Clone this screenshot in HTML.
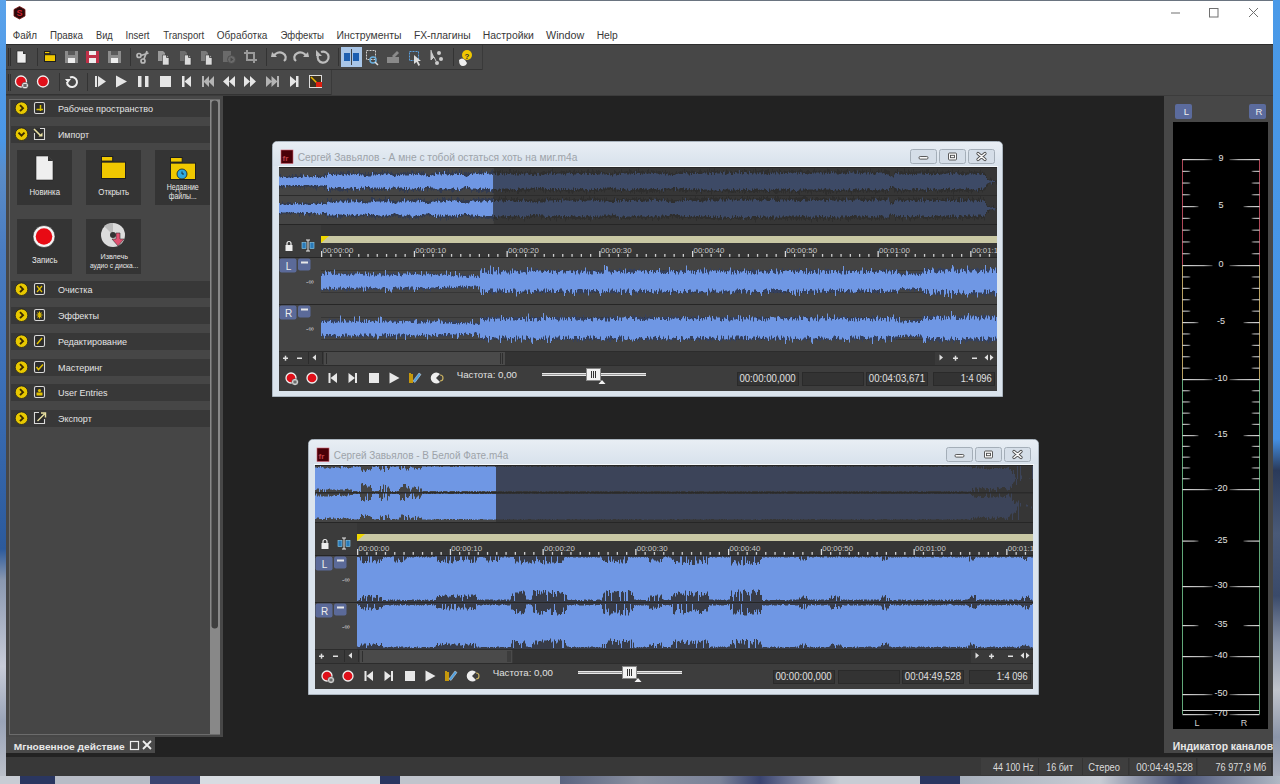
<!DOCTYPE html>
<html><head><meta charset="utf-8"><style>
html,body{margin:0;padding:0;width:1280px;height:784px;overflow:hidden;background:#2f6fb8;}
#bg div{position:absolute;}
svg text{font-family:"Liberation Sans",sans-serif;}
</style></head><body>
<div id="bg">
<div style="left:0px;top:0px;width:1280px;height:784px;background:#2f6fb8;"></div>
<div style="left:0px;top:0px;width:6px;height:784px;background:linear-gradient(#5aa2ea,#4a96e6 18%,#5a8cc8 22%,#4a7cc0 32%,#3c70b8 48%,#2c5a9c 70%,#8a98b0 74%,#c8ccd8 85%,#9aa4b8 92%,#c0c4cc);"></div>
<div style="left:1273px;top:0px;width:7px;height:784px;background:linear-gradient(#4a9ae8,#4490e4 56%,#2a3a5a 60%,#4a5a78 68%,#3a4a6a 76%,#8a94a8 82%,#c0c4cc 88%,#8a94a8 94%,#b0b4c0);"></div>
<div style="left:0px;top:776px;width:1280px;height:8px;background:linear-gradient(90deg,#c8ccd4 0,#c8ccd4 20px,#2a3660 20px,#2a3660 55px,#b8bcc6 55px,#b8bcc6 150px,#3a4470 150px,#3a4470 200px,#d8dce2 200px,#d8dce2 380px,#2a3660 380px,#2a3660 400px,#c0c4cc 400px,#c0c4cc 560px,#5a6480 560px,#8a90a0 640px,#7a8298 720px,#3a4470 760px,#c8ccd4 840px,#c8ccd4 920px,#2a3660 920px,#2a3660 960px,#a8b0bc 960px,#c8ccd4 1100px,#4a5478 1180px,#b0b8c4 1280px);"></div>
</div>
<svg width="1280" height="784" style="position:absolute;left:0;top:0;" font-family="Liberation Sans, sans-serif">
<rect x="6" y="0" width="1267" height="1" fill="#6a7480"/>
<rect x="6" y="1" width="1267" height="43" fill="#ffffff"/>
<rect x="6" y="44" width="1267" height="732" fill="#474747"/>
<path d="M19.5 6.5 L25 9.5 L25 16 L19.5 19 L14 16 L14 9.5 Z" fill="#2a0a0a" stroke="#7a1010" stroke-width="0.8"/>
<text x="19.5" y="16.3" font-size="9" font-weight="bold" fill="#d02030" text-anchor="middle">S</text>
<rect x="1171" y="12.5" width="9" height="1" fill="#707070" />
<rect x="1209.5" y="8.5" width="8.5" height="8.5" fill="none" stroke="#707070" stroke-width="1"/>
<path d="M1249 8 L1258 17 M1258 8 L1249 17" stroke="#707070" stroke-width="1"/>
<rect x="6" y="44" width="477" height="26" fill="#484848"/>
<rect x="6" y="69" width="477" height="1" fill="#333"/>
<rect x="482" y="44" width="1" height="26" fill="#3a3a3a"/>
<rect x="8" y="48" width="1" height="18" fill="#2e2e2e"/>
<rect x="10" y="48" width="1" height="18" fill="#2e2e2e"/>
<rect x="6" y="44" width="1267" height="1" fill="#2e2e2e"/>
<rect x="6" y="70" width="326" height="25" fill="#484848"/>
<rect x="6" y="94" width="326" height="1" fill="#333"/>
<rect x="331" y="70" width="1" height="25" fill="#3a3a3a"/>
<rect x="8" y="74" width="1" height="17" fill="#2e2e2e"/>
<rect x="10" y="74" width="1" height="17" fill="#2e2e2e"/>
<rect x="6" y="95" width="1267" height="1" fill="#3c3c3c"/>
<rect x="37" y="48" width="1" height="18" fill="#333"/>
<rect x="130" y="48" width="1" height="18" fill="#333"/>
<rect x="266" y="48" width="1" height="18" fill="#333"/>
<rect x="338" y="48" width="1" height="18" fill="#333"/>
<rect x="453" y="48" width="1" height="18" fill="#333"/>
<rect x="59" y="73" width="1" height="18" fill="#333"/>
<rect x="87" y="73" width="1" height="18" fill="#333"/>
<path d="M17 51 H23 L26 54 V63 H17 Z" fill="#eee" stroke="#222" stroke-width="0.6"/>
<path d="M23 51 V54 H26" fill="#333"/>
<rect x="44.5" y="51.5" width="5.4" height="2.2" fill="#f0c800" stroke="#1e1e1e" stroke-width="1"/>
<rect x="44.5" y="54.7" width="11" height="6.8" fill="#f0c800" stroke="#1e1e1e" stroke-width="1"/>
<rect x="65" y="51" width="13" height="12" fill="#8c8c8c"/>
<rect x="68" y="51" width="7" height="4" fill="#5a5a5a"/>
<rect x="68" y="58" width="7" height="5" fill="#eee"/>
<rect x="86" y="51" width="13" height="12" fill="#c03048"/>
<rect x="89" y="51" width="7" height="4" fill="#eee"/>
<rect x="89" y="58" width="7" height="5" fill="#eee"/>
<rect x="108" y="51" width="13" height="12" fill="#8c8c8c"/>
<rect x="111" y="51" width="7" height="4" fill="#5a5a5a"/>
<rect x="111" y="58" width="7" height="5" fill="#eee"/>
<g stroke="#b8b8b8" stroke-width="1.7" fill="none"><circle cx="139" cy="55.5" r="2"/><circle cx="143" cy="61" r="2"/><path d="M141 55.5 L148.5 53 M144 59 L147 51"/></g>
<path d="M158 51 h5 l2 2 v8 h-7 z" fill="#9a9a9a"/>
<path d="M162.5 55 h4 l2.5 2.5 v7.5 h-6.5 z" fill="#dcdcdc" stroke="#3a3a3a" stroke-width="0.6"/><path d="M166.5 55 v2.5 h2.5" fill="none" stroke="#333" stroke-width="0.8"/>
<path d="M180 51 h5 l2 2 v8 h-7 z" fill="#6e6e6e"/>
<path d="M184.5 55 h4 l2.5 2.5 v7.5 h-6.5 z" fill="#dcdcdc" stroke="#3a3a3a" stroke-width="0.6"/><path d="M188.5 55 v2.5 h2.5" fill="none" stroke="#333" stroke-width="0.8"/>
<path d="M201 51 h5 l2 2 v8 h-7 z" fill="#7a7a7a"/>
<path d="M205.5 55 h4 l2.5 2.5 v7.5 h-6.5 z" fill="#dcdcdc" stroke="#3a3a3a" stroke-width="0.6"/><path d="M209.5 55 v2.5 h2.5" fill="none" stroke="#333" stroke-width="0.8"/>
<g><rect x="223" y="51" width="8" height="11" fill="#6a6a6a"/><circle cx="231.5" cy="59.5" r="4" fill="#6a6a6a" stroke="#484848" stroke-width="0.8"/><path d="M230.5 57.5 l3 2 l-3 2 z" fill="#484848"/></g>
<path d="M137 49 l0 0" />
<path d="M247 50 V60 H257 M244 53 H254 V63" stroke="#9a9a9a" stroke-width="2" fill="none"/>
<path d="M274 56 a6 5 0 1 1 10 5" stroke="#bdbdbd" stroke-width="2.2" fill="none"/><path d="M272 52 l5 5 h-6 z" fill="#bdbdbd"/>
<path d="M306 56 a6 5 0 1 0 -10 5" stroke="#bdbdbd" stroke-width="2.2" fill="none"/><path d="M308 52 l-5 5 h6 z" fill="#bdbdbd"/>
<path d="M318 55 a5.5 5.5 0 1 0 3 -3" stroke="#bdbdbd" stroke-width="2.2" fill="none"/><path d="M316 50 v6 h6 z" fill="#bdbdbd"/>
<rect x="341" y="47" width="21" height="20" fill="#a9c6e8" />
<g fill="#1d5fb0"><rect x="344" y="53" width="6" height="8"/><rect x="353" y="53" width="6" height="8"/></g><path d="M351.5 49 V65" stroke="#444" stroke-width="1"/>
<g stroke="#cfcfcf" stroke-width="1" fill="none" stroke-dasharray="2 1"><rect x="366.5" y="50.5" width="9" height="9"/></g><circle cx="373" cy="60" r="3" stroke="#6ab0e0" stroke-width="1.5" fill="none"/><path d="M375 62 l3 3" stroke="#ddd" stroke-width="1.5"/>
<g fill="#8a8a8a"><rect x="387" y="57" width="12" height="6"/><path d="M392 56 l5 -5 l2 2 l-5 5 z"/></g>
<rect x="409.5" y="51.5" width="9" height="9" fill="none" stroke="#5aa0e0" stroke-dasharray="2 1"/><path d="M414 55 v9 l2.5 -2 l2 4 l1.5 -1 l-2 -4 h3 z" fill="#ddd"/>
<path d="M431 50 v10 l3 -3 l2 4" fill="#ccc" stroke="#ccc"/><circle cx="439" cy="53" r="2" fill="#ccc"/><circle cx="441" cy="59" r="2" fill="#ccc"/><circle cx="437" cy="63" r="2" fill="#ccc"/>
<circle cx="467" cy="55" r="5" fill="#f0c800"/><text x="467" y="58.5" font-size="8" font-weight="bold" fill="#333" text-anchor="middle">?</text><path d="M459 60 q3 -3 6 0 l2 3 q-1 3 -4 3 q-4 0 -4 -6z" fill="#eee"/>
<circle cx="21" cy="81.5" r="5.5" fill="#e0101a" stroke="#f0f0f0" stroke-width="1.3"/>
<circle cx="25" cy="85.5" r="3.3" fill="#f4f4f4" stroke="#222" stroke-width="0.5"/><path d="M24.1 83.9 v3.2 M25.9 83.9 v3.2" stroke="#111" stroke-width="1"/>
<circle cx="43" cy="81.5" r="5.5" fill="#e0101a" stroke="#f0f0f0" stroke-width="1.3"/>
<path d="M67 82 a5 5 0 1 0 3 -4.5" stroke="#eee" stroke-width="2" fill="none"/><path d="M65 79 l3 4 l3 -4 z" fill="#eee"/>
<g fill="#e6e6e6"><rect x="95" y="76" width="2" height="11"/><path d="M98 76 L106 81.5 L98 87 Z"/><path d="M116 75.5 L127 81.5 L116 87.5 Z"/><rect x="138" y="76" width="3.5" height="11"/><rect x="145" y="76" width="3.5" height="11"/><rect x="160" y="76" width="11" height="11"/><rect x="182" y="76" width="2.5" height="11"/><path d="M191 76 L184.5 81.5 L191 87 Z"/></g>
<g fill="#b4b4b4"><rect x="202" y="76" width="2" height="11"/><path d="M209 76 L203.5 81.5 L209 87 Z M214 76 L208.5 81.5 L214 87 Z"/></g>
<g fill="#e6e6e6"><path d="M229 76 L223 81.5 L229 87 Z M235 76 L229 81.5 L235 87 Z"/><path d="M244 76 L250 81.5 L244 87 Z M250 76 L256 81.5 L250 87 Z"/></g>
<g fill="#b4b4b4"><path d="M266 76 L272 81.5 L266 87 Z M271.5 76 L277.5 81.5 L271.5 87 Z"/><rect x="277" y="76" width="2" height="11"/></g>
<g fill="#e6e6e6"><path d="M290 76 L296.5 81.5 L290 87 Z"/><rect x="296" y="76" width="2.5" height="11"/></g>
<rect x="309.5" y="75.5" width="12" height="12" fill="#3a3020" stroke="#ddd" stroke-width="1"/><path d="M311 77 l6 6" stroke="#e8b400" stroke-width="1.5"/><rect x="316" y="82" width="6" height="5" fill="#e02010"/>
<rect x="223" y="96" width="941" height="661" fill="#222222"/>
<rect x="155" y="737" width="68" height="16" fill="#222222"/>
<rect x="6" y="753" width="1267" height="4" fill="#222222"/>
<rect x="9" y="99" width="213" height="636" fill="#6c6c6c"/>
<rect x="10" y="100" width="200" height="634" fill="#464646"/>
<rect x="210" y="100" width="10" height="634" fill="#888888"/>
<rect x="220" y="99" width="3" height="636" fill="#474747"/>
<rect x="211.5" y="100.5" width="6.5" height="528" rx="3.2" fill="#3e3e3e"/>
<rect x="11" y="100" width="199" height="17" fill="#383838"/>
<circle cx="21.5" cy="108.2" r="6.3" fill="#e8c800" stroke="#1e1e1e" stroke-width="0.8"/>
<path d="M20 105.2 l3 3 l-3 3" stroke="#3a2a00" stroke-width="1.9" fill="none"/>
<rect x="34.5" y="102.5" width="10" height="11" rx="1.5" fill="#2c2c2c" stroke="#d8d8d8" stroke-width="1.1"/>
<path d="M36.5 109.5 h6.5 M40.5 105 v6" stroke="#d8c000" stroke-width="1.5"/>
<rect x="11" y="126" width="199" height="17" fill="#383838"/>
<circle cx="21.5" cy="134.2" r="6.3" fill="#e8c800" stroke="#1e1e1e" stroke-width="0.8"/>
<path d="M18.5 132.7 l3 3 l3 -3" stroke="#3a2a00" stroke-width="1.9" fill="none"/>
<rect x="34.5" y="128.5" width="10" height="11" rx="1" fill="#2c2c2c"/><path d="M34.5 133 V139.5 H44.5 V128.5 H40" fill="none" stroke="#d8d8d8" stroke-width="1.1"/>
<path d="M34 129 l6.5 6.5" stroke="#e8e0a0" stroke-width="1.6"/><path d="M42.5 132.5 v4 h-4 z" fill="#e8e0a0"/>
<rect x="11" y="281" width="199" height="17" fill="#383838"/>
<circle cx="21.5" cy="289.2" r="6.3" fill="#e8c800" stroke="#1e1e1e" stroke-width="0.8"/>
<path d="M20 286.2 l3 3 l-3 3" stroke="#3a2a00" stroke-width="1.9" fill="none"/>
<rect x="34.5" y="283.5" width="10" height="11" rx="1.5" fill="#2c2c2c" stroke="#d8d8d8" stroke-width="1.1"/>
<path d="M37 286 l5 6 M42 286 l-5 6" stroke="#e0c000" stroke-width="1.2"/>
<rect x="11" y="307" width="199" height="17" fill="#383838"/>
<circle cx="21.5" cy="315.2" r="6.3" fill="#e8c800" stroke="#1e1e1e" stroke-width="0.8"/>
<path d="M20 312.2 l3 3 l-3 3" stroke="#3a2a00" stroke-width="1.9" fill="none"/>
<rect x="34.5" y="309.5" width="10" height="11" rx="1.5" fill="#2c2c2c" stroke="#d8d8d8" stroke-width="1.1"/>
<path d="M39.5 311.5 v7 M36.5 315 h6 M37.5 312.5 l4 5 M41.5 312.5 l-4 5" stroke="#e0c000" stroke-width="1.1"/>
<rect x="11" y="333" width="199" height="17" fill="#383838"/>
<circle cx="21.5" cy="341.2" r="6.3" fill="#e8c800" stroke="#1e1e1e" stroke-width="0.8"/>
<path d="M20 338.2 l3 3 l-3 3" stroke="#3a2a00" stroke-width="1.9" fill="none"/>
<rect x="34.5" y="335.5" width="10" height="11" rx="1.5" fill="#2c2c2c" stroke="#d8d8d8" stroke-width="1.1"/>
<path d="M37 344 l5 -6" stroke="#e0c000" stroke-width="1.5"/>
<rect x="11" y="359" width="199" height="17" fill="#383838"/>
<circle cx="21.5" cy="367.2" r="6.3" fill="#e8c800" stroke="#1e1e1e" stroke-width="0.8"/>
<path d="M20 364.2 l3 3 l-3 3" stroke="#3a2a00" stroke-width="1.9" fill="none"/>
<rect x="34.5" y="361.5" width="10" height="11" rx="1.5" fill="#2c2c2c" stroke="#d8d8d8" stroke-width="1.1"/>
<path d="M36.5 367 l2 2.5 l4.5 -5" stroke="#e0c000" stroke-width="1.5" fill="none"/>
<rect x="11" y="384" width="199" height="17" fill="#383838"/>
<circle cx="21.5" cy="392.2" r="6.3" fill="#e8c800" stroke="#1e1e1e" stroke-width="0.8"/>
<path d="M20 389.2 l3 3 l-3 3" stroke="#3a2a00" stroke-width="1.9" fill="none"/>
<rect x="34.5" y="386.5" width="10" height="11" rx="1.5" fill="#2c2c2c" stroke="#d8d8d8" stroke-width="1.1"/>
<circle cx="39.5" cy="390.5" r="1.6" fill="#e0c000"/><rect x="36.5" y="392.5" width="6" height="3" fill="#e0c000"/>
<rect x="11" y="410" width="199" height="17" fill="#383838"/>
<circle cx="21.5" cy="418.2" r="6.3" fill="#e8c800" stroke="#1e1e1e" stroke-width="0.8"/>
<path d="M20 415.2 l3 3 l-3 3" stroke="#3a2a00" stroke-width="1.9" fill="none"/>
<rect x="34.5" y="412.5" width="10" height="11" rx="1" fill="#2c2c2c"/><path d="M39 412.5 H34.5 V423.5 H44.5 V419" fill="none" stroke="#d8d8d8" stroke-width="1.1"/>
<path d="M37.5 421 l7 -7 M41 413 h4.5 v4.5" stroke="#e8e0a0" stroke-width="1.4" fill="none"/>
<rect x="17" y="150" width="55" height="55" fill="#343434"/>
<rect x="86" y="150" width="55" height="55" fill="#343434"/>
<rect x="155" y="150" width="55" height="55" fill="#343434"/>
<rect x="17" y="219" width="55" height="55" fill="#343434"/>
<rect x="86" y="219" width="55" height="55" fill="#343434"/>
<path d="M36 156 H48 L53 161 V180 H36 Z" fill="#efefef" stroke="#222" stroke-width="0.6"/>
<path d="M48 156 V161 H53" fill="#333"/>
<rect x="101.5" y="156.5" width="11.2" height="4.6" fill="#f0c800" stroke="#1e1e1e" stroke-width="1"/>
<rect x="101.5" y="162.1" width="24" height="16.4" fill="#f0c800" stroke="#1e1e1e" stroke-width="1"/>
<rect x="170.5" y="157.5" width="11.7" height="4.6" fill="#f0c800" stroke="#1e1e1e" stroke-width="1"/>
<rect x="170.5" y="163.1" width="25" height="16.4" fill="#f0c800" stroke="#1e1e1e" stroke-width="1"/>
<circle cx="182" cy="174" r="5" fill="#30a8e0" stroke="#1a1a1a" stroke-width="0.8"/><path d="M182 171.5 v2.5 h2" stroke="#111" stroke-width="0.8" fill="none"/>
<circle cx="44" cy="236.5" r="11" fill="#f4f4f4" stroke="#222" stroke-width="0.6"/><circle cx="44" cy="236.5" r="8.3" fill="#e80a14"/>
<circle cx="113" cy="235" r="12" fill="#dcdcdc"/><path d="M113 235 L104 226 A12 12 0 0 1 113 223 Z" fill="#bcbcbc"/><circle cx="113" cy="235" r="3" fill="#333"/>
<path d="M116 233 h4 v6 h4 l-6 7 l-6 -7 h4 z" fill="#e05070" stroke="#333" stroke-width="0.6"/>
<rect x="6" y="737" width="149" height="16" fill="#4a4a4a"/>
<rect x="130.5" y="741.5" width="8" height="8" fill="none" stroke="#eee" stroke-width="1.2"/><path d="M143 741 l8 8 M151 741 l-8 8" stroke="#eee" stroke-width="1.8"/>
<rect x="6" y="757" width="1267" height="19" fill="#383838"/>
<rect x="981" y="758" width="57" height="17" fill="#3e3e3e"/>
<rect x="1038" y="758" width="1" height="17" fill="#333333"/>
<rect x="1039" y="758" width="43" height="17" fill="#3e3e3e"/>
<rect x="1082" y="758" width="1" height="17" fill="#333333"/>
<rect x="1083" y="758" width="45" height="17" fill="#3e3e3e"/>
<rect x="1128" y="758" width="1" height="17" fill="#333333"/>
<rect x="1130" y="758" width="66" height="17" fill="#3e3e3e"/>
<rect x="1196" y="758" width="1" height="17" fill="#333333"/>
<rect x="1198" y="758" width="73" height="17" fill="#3e3e3e"/>
<rect x="1271" y="758" width="1" height="17" fill="#333333"/>
<rect x="1164" y="96" width="109" height="657" fill="#474747"/>
<rect x="1175" y="104" width="17" height="15" rx="2" fill="#5b6b9d"/><rect x="1249" y="104" width="17" height="15" rx="2" fill="#5b6b9d"/>
<rect x="1173" y="122" width="95" height="607" fill="#000"/>
<defs><clipPath id="clipind"><rect x="1164" y="735" width="109" height="20"/></clipPath></defs><g clip-path="url(#clipind)">
<text x="1172.70" y="749.5" font-size="10" fill="#e8e8e8" font-weight="bold" textLength="100.39" lengthAdjust="spacingAndGlyphs">Индикатор каналов</text>
</g>
<defs><linearGradient id="fadeL" x1="0" x2="1"><stop offset="0" stop-color="#d8d8d8"/><stop offset="0.7" stop-color="#b0b0b0"/><stop offset="1" stop-color="#404040"/></linearGradient><linearGradient id="fadeR" x1="1" x2="0"><stop offset="0" stop-color="#d8d8d8"/><stop offset="0.7" stop-color="#b0b0b0"/><stop offset="1" stop-color="#404040"/></linearGradient></defs>
<path d="M1182.5 159 V265 M1259.5 159 V265" stroke="#b04858" stroke-width="1"/>
<path d="M1182.5 265 V379 M1259.5 265 V379" stroke="#b8a060" stroke-width="1"/>
<path d="M1182.5 379 V714 M1259.5 379 V714" stroke="#60a878" stroke-width="1"/>
<rect x="1182.5" y="159" width="30" height="1.2" fill="url(#fadeL)"/><rect x="1229.5" y="159" width="30" height="1.2" fill="url(#fadeR)"/>
<rect x="1182.5" y="206" width="16" height="1.2" fill="url(#fadeL)"/><rect x="1243.5" y="206" width="16" height="1.2" fill="url(#fadeR)"/>
<rect x="1182.5" y="265" width="30" height="1.2" fill="url(#fadeL)"/><rect x="1229.5" y="265" width="30" height="1.2" fill="url(#fadeR)"/>
<rect x="1182.5" y="322" width="16" height="1.2" fill="url(#fadeL)"/><rect x="1243.5" y="322" width="16" height="1.2" fill="url(#fadeR)"/>
<rect x="1182.5" y="379" width="30" height="1.2" fill="url(#fadeL)"/><rect x="1229.5" y="379" width="30" height="1.2" fill="url(#fadeR)"/>
<rect x="1182.5" y="435" width="16" height="1.2" fill="url(#fadeL)"/><rect x="1243.5" y="435" width="16" height="1.2" fill="url(#fadeR)"/>
<rect x="1182.5" y="489" width="30" height="1.2" fill="url(#fadeL)"/><rect x="1229.5" y="489" width="30" height="1.2" fill="url(#fadeR)"/>
<rect x="1182.5" y="540.5" width="16" height="1.2" fill="url(#fadeL)"/><rect x="1243.5" y="540.5" width="16" height="1.2" fill="url(#fadeR)"/>
<rect x="1182.5" y="586" width="30" height="1.2" fill="url(#fadeL)"/><rect x="1229.5" y="586" width="30" height="1.2" fill="url(#fadeR)"/>
<rect x="1182.5" y="625" width="16" height="1.2" fill="url(#fadeL)"/><rect x="1243.5" y="625" width="16" height="1.2" fill="url(#fadeR)"/>
<rect x="1182.5" y="656" width="30" height="1.2" fill="url(#fadeL)"/><rect x="1229.5" y="656" width="30" height="1.2" fill="url(#fadeR)"/>
<rect x="1182.5" y="694" width="30" height="1.2" fill="url(#fadeL)"/><rect x="1229.5" y="694" width="30" height="1.2" fill="url(#fadeR)"/>
<rect x="1182.5" y="714" width="30" height="1.2" fill="url(#fadeL)"/><rect x="1229.5" y="714" width="30" height="1.2" fill="url(#fadeR)"/>
<rect x="1182.5" y="710" width="77.0" height="1" fill="#c8c8c8"/>
<rect x="1182.5" y="170.8" width="8" height="1.1" fill="url(#fadeL)"/><rect x="1251.5" y="170.8" width="8" height="1.1" fill="url(#fadeR)"/>
<rect x="1182.5" y="182.5" width="8" height="1.1" fill="url(#fadeL)"/><rect x="1251.5" y="182.5" width="8" height="1.1" fill="url(#fadeR)"/>
<rect x="1182.5" y="194.2" width="8" height="1.1" fill="url(#fadeL)"/><rect x="1251.5" y="194.2" width="8" height="1.1" fill="url(#fadeR)"/>
<rect x="1182.5" y="217.8" width="8" height="1.1" fill="url(#fadeL)"/><rect x="1251.5" y="217.8" width="8" height="1.1" fill="url(#fadeR)"/>
<rect x="1182.5" y="229.6" width="8" height="1.1" fill="url(#fadeL)"/><rect x="1251.5" y="229.6" width="8" height="1.1" fill="url(#fadeR)"/>
<rect x="1182.5" y="241.4" width="8" height="1.1" fill="url(#fadeL)"/><rect x="1251.5" y="241.4" width="8" height="1.1" fill="url(#fadeR)"/>
<rect x="1182.5" y="253.2" width="8" height="1.1" fill="url(#fadeL)"/><rect x="1251.5" y="253.2" width="8" height="1.1" fill="url(#fadeR)"/>
<rect x="1182.5" y="276.4" width="8" height="1.1" fill="url(#fadeL)"/><rect x="1251.5" y="276.4" width="8" height="1.1" fill="url(#fadeR)"/>
<rect x="1182.5" y="287.8" width="8" height="1.1" fill="url(#fadeL)"/><rect x="1251.5" y="287.8" width="8" height="1.1" fill="url(#fadeR)"/>
<rect x="1182.5" y="299.2" width="8" height="1.1" fill="url(#fadeL)"/><rect x="1251.5" y="299.2" width="8" height="1.1" fill="url(#fadeR)"/>
<rect x="1182.5" y="310.6" width="8" height="1.1" fill="url(#fadeL)"/><rect x="1251.5" y="310.6" width="8" height="1.1" fill="url(#fadeR)"/>
<rect x="1182.5" y="333.4" width="8" height="1.1" fill="url(#fadeL)"/><rect x="1251.5" y="333.4" width="8" height="1.1" fill="url(#fadeR)"/>
<rect x="1182.5" y="344.8" width="8" height="1.1" fill="url(#fadeL)"/><rect x="1251.5" y="344.8" width="8" height="1.1" fill="url(#fadeR)"/>
<rect x="1182.5" y="356.2" width="8" height="1.1" fill="url(#fadeL)"/><rect x="1251.5" y="356.2" width="8" height="1.1" fill="url(#fadeR)"/>
<rect x="1182.5" y="367.6" width="8" height="1.1" fill="url(#fadeL)"/><rect x="1251.5" y="367.6" width="8" height="1.1" fill="url(#fadeR)"/>
<rect x="1182.5" y="390.2" width="8" height="1.1" fill="url(#fadeL)"/><rect x="1251.5" y="390.2" width="8" height="1.1" fill="url(#fadeR)"/>
<rect x="1182.5" y="401.4" width="8" height="1.1" fill="url(#fadeL)"/><rect x="1251.5" y="401.4" width="8" height="1.1" fill="url(#fadeR)"/>
<rect x="1182.5" y="412.6" width="8" height="1.1" fill="url(#fadeL)"/><rect x="1251.5" y="412.6" width="8" height="1.1" fill="url(#fadeR)"/>
<rect x="1182.5" y="423.8" width="8" height="1.1" fill="url(#fadeL)"/><rect x="1251.5" y="423.8" width="8" height="1.1" fill="url(#fadeR)"/>
<rect x="1182.5" y="445.8" width="8" height="1.1" fill="url(#fadeL)"/><rect x="1251.5" y="445.8" width="8" height="1.1" fill="url(#fadeR)"/>
<rect x="1182.5" y="456.6" width="8" height="1.1" fill="url(#fadeL)"/><rect x="1251.5" y="456.6" width="8" height="1.1" fill="url(#fadeR)"/>
<rect x="1182.5" y="467.4" width="8" height="1.1" fill="url(#fadeL)"/><rect x="1251.5" y="467.4" width="8" height="1.1" fill="url(#fadeR)"/>
<rect x="1182.5" y="478.2" width="8" height="1.1" fill="url(#fadeL)"/><rect x="1251.5" y="478.2" width="8" height="1.1" fill="url(#fadeR)"/>
<path d="M272.5 396.5 V146.5 Q272.5 141.5 277.5 141.5 H997.5 Q1002.5 141.5 1002.5 146.5 V396.5 Z" fill="#dbe4ed" stroke="#aab4be" stroke-width="1"/>
<defs><linearGradient id="tg100" x1="0" y1="0" x2="0" y2="1"><stop offset="0" stop-color="#e8eef4"/><stop offset="1" stop-color="#d8e2ec"/></linearGradient></defs>
<path d="M273 166 V146 Q273 142 277 142 H998 Q1002 142 1002 146 V166 Z" fill="url(#tg100)"/>
<rect x="278" y="166" width="720" height="1" fill="#f4f8fb"/>
<rect x="281" y="150" width="12" height="13.5" fill="#4a0008" stroke="#d06070" stroke-width="0.6"/>
<text x="282.5" y="160.5" font-size="8" fill="#c04048" font-weight="bold">fr</text>
<rect x="910.5" y="149.5" width="26" height="14" rx="2" fill="#d5dee8" stroke="#a4aeb8" stroke-width="1"/>
<rect x="919.0" y="156.5" width="9" height="2.6" rx="1.2" fill="#fafafa" stroke="#4a4a4a" stroke-width="0.9"/>
<rect x="939.5" y="149.5" width="26" height="14" rx="2" fill="#d5dee8" stroke="#a4aeb8" stroke-width="1"/>
<rect x="948.5" y="153.0" width="8" height="7" rx="1" fill="#fafafa" stroke="#4a4a4a" stroke-width="0.9"/><rect x="950.5" y="155.3" width="4" height="2.4" fill="#fafafa" stroke="#4a4a4a" stroke-width="0.9"/>
<rect x="968.5" y="149.5" width="26" height="14" rx="2" fill="#d5dee8" stroke="#a4aeb8" stroke-width="1"/>
<path d="M978.0 153.5 l7 6 M985.0 153.5 l-7 6" stroke="#4a4a4a" stroke-width="3.2" stroke-linecap="round"/><path d="M978.0 153.5 l7 6 M985.0 153.5 l-7 6" stroke="#fafafa" stroke-width="1.6" stroke-linecap="round"/>
<rect x="279" y="167" width="718" height="224" fill="#3c3c3c"/>
<rect x="279" y="167" width="718" height="57" fill="#454545"/>
<rect x="279" y="167" width="718" height="1" fill="#262626"/>
<defs><clipPath id="csw100"><rect x="279" y="168" width="214.60000000000002" height="56"/></clipPath><clipPath id="cuw100"><rect x="493.6" y="168" width="503.4" height="56"/></clipPath></defs>
<defs><g id="pkw100"><path d="M279 177V177h1V174h1V176.5h1V176.5h1V176h1V176.5h1V176.5h1V176h1V176.5h1V176h1V175h1V176.5h1V176h1V174h1V176.5h1V176h1V174h1V174.5h1V176h1V176h1V176h1V173.5h1V173.5h1V175.5h1V176.5h1V176.5h1V176h1V176h1V176.5h1V176.5h1V175.5h1V176h1V176.5h1V176.5h1V175.5h1V176h1V174h1V176.5h1V174.5h1V175.5h1V175.5h1V175.5h1V176h1V175.5h1V175.5h1V173.5h1V173.5h1V175.5h1V172.5h1V173h1V173.5h1V174h1V173h1V173.5h1V172h1V173.5h1V174h1V171.5h1V174h1V172.5h1V173.5h1V171.5h1V171.5h1V172.5h1V171.5h1V173.5h1V173.5h1V173h1V171h1V170.5h1V171h1V174h1V173h1V173.5h1V170.5h1V173.5h1V173.5h1V174h1V172.5h1V172.5h1V170.5h1V173h1V173h1V173h1V173.5h1V174h1V172h1V175h1V174h1V172h1V174h1V173.5h1V172.5h1V173h1V170.5h1V172.5h1V172h1V172h1V173.5h1V173h1V173h1V172h1V172.5h1V170h1V173h1V171h1V172.5h1V172h1V170.5h1V172h1V173.5h1V172.5h1V171.5h1V173h1V174h1V174h1V173.5h1V174.5h1V173h1V173h1V174h1V172.5h1V172.5h1V173h1V172h1V172.5h1V172h1V173h1V171.5h1V172.5h1V172.5h1V173h1V170.5h1V170.5h1V171.5h1V173.5h1V173.5h1V171.5h1V172.5h1V172.5h1V171h1V173h1V171.5h1V172.5h1V171h1V173.5h1V174h1V174.5h1V174h1V175h1V175h1V174.5h1V173.5h1V173h1V173.5h1V173.5h1V172.5h1V170.5h1V171.5h1V172.5h1V173h1V171.5h1V171.5h1V172h1V170h1V173h1V172h1V169.5h1V172h1V169.5h1V172.5h1V173h1V172.5h1V170.5h1V173h1V172h1V171.5h1V170.5h1V172h1V173h1V169.5h1V173h1V170.5h1V174h1V174.5h1V172h1V172.5h1V172h1V173.5h1V172h1V173h1V172.5h1V172h1V173h1V171h1V172.5h1V172h1V173h1V173h1V172h1V170h1V171.5h1V170h1V172.5h1V171.5h1V172h1V173h1V171.5h1V171.5h1V173h1V172h1V172h1V170.5h1V169.5h1V171h1V171.5h1V170.5h1V172h1V170.5h1V171h1V170.5h1V170h1V173h1V170h1V172h1V171.5h1V172.5h1V171h1V172h1V172.5h1V169h1V169h1V171.5h1V172.5h1V170h1V171.5h1V171h1V170h1V172.5h1V170.5h1V171.5h1V172h1V171h1V172h1V173h1V172h1V171.5h1V173h1V171h1V172.5h1V171.5h1V169.5h1V172.5h1V173h1V172.5h1V171.5h1V172h1V173h1V173h1V174h1V172.5h1V172.5h1V172h1V171.5h1V171h1V171h1V172h1V171.5h1V172.5h1V170.5h1V171h1V170.5h1V170.5h1V168.5h1V172h1V172h1V171.5h1V172.5h1V172h1V172.5h1V172h1V171.5h1V170.5h1V171h1V171h1V171h1V172h1V170.5h1V171.5h1V171.5h1V170h1V170.5h1V172h1V172h1V170.5h1V169.5h1V172h1V171h1V172h1V170.5h1V172h1V172h1V170h1V171h1V171.5h1V171h1V172h1V171.5h1V169.5h1V169h1V171.5h1V172h1V171.5h1V169h1V170.5h1V171.5h1V172h1V170h1V171h1V170h1V170.5h1V171.5h1V171.5h1V171.5h1V172h1V172h1V173.5h1V172.5h1V173h1V173.5h1V173.5h1V172.5h1V173.5h1V172.5h1V174h1V170h1V171h1V172h1V172.5h1V172h1V171h1V172.5h1V169.5h1V171.5h1V172h1V171.5h1V171.5h1V171h1V171h1V172h1V169h1V170h1V170.5h1V171.5h1V171.5h1V170.5h1V172.5h1V169.5h1V171.5h1V168.5h1V171h1V171.5h1V171h1V170.5h1V171h1V172h1V171.5h1V172.5h1V170h1V169h1V172h1V172h1V170h1V170.5h1V170.5h1V171h1V172.5h1V170.5h1V171.5h1V171h1V171h1V171h1V172h1V170.5h1V172.5h1V172h1V170h1V172h1V171.5h1V173.5h1V171.5h1V173.5h1V173h1V172.5h1V174h1V174h1V172.5h1V171h1V173.5h1V172h1V171.5h1V171h1V171.5h1V170.5h1V172.5h1V169h1V172h1V170.5h1V171h1V171.5h1V171h1V172h1V170.5h1V170.5h1V171h1V171h1V172.5h1V172.5h1V172h1V172h1V170.5h1V169.5h1V171h1V172.5h1V172h1V170.5h1V171h1V172.5h1V169.5h1V172h1V168.5h1V172h1V170h1V170.5h1V170.5h1V168.5h1V171h1V171h1V170h1V171.5h1V170.5h1V171h1V171.5h1V172h1V170h1V171.5h1V172h1V169.5h1V170.5h1V171.5h1V171.5h1V170.5h1V171h1V172h1V172h1V171.5h1V170.5h1V171h1V170.5h1V172h1V171h1V170.5h1V171h1V170h1V172h1V169h1V170h1V170h1V172h1V171.5h1V172h1V170h1V171.5h1V171.5h1V169.5h1V172h1V168.5h1V170.5h1V171h1V171h1V170.5h1V170.5h1V170h1V169.5h1V170.5h1V171h1V170h1V170h1V169.5h1V169h1V172h1V172h1V171.5h1V169h1V171h1V170.5h1V171h1V170.5h1V170.5h1V172h1V169h1V170h1V171.5h1V172h1V171.5h1V170.5h1V171h1V171.5h1V171h1V172h1V170h1V171h1V170h1V170h1V170.5h1V171h1V170.5h1V172.5h1V170.5h1V170.5h1V170h1V169h1V170h1V170.5h1V172h1V171.5h1V172h1V171h1V170h1V170h1V171h1V172h1V172h1V171.5h1V170h1V168.5h1V171h1V170.5h1V172h1V171h1V170.5h1V170.5h1V171.5h1V172h1V171.5h1V170.5h1V170.5h1V172h1V168.5h1V169h1V169.5h1V171.5h1V170.5h1V171h1V172.5h1V170.5h1V171h1V171.5h1V169h1V169.5h1V170.5h1V171.5h1V170h1V171.5h1V171h1V170.5h1V170.5h1V170h1V169h1V172h1V170.5h1V172h1V172.5h1V171.5h1V170.5h1V169.5h1V170h1V171h1V171h1V171.5h1V170.5h1V171h1V171.5h1V169.5h1V171h1V170.5h1V172h1V170h1V172h1V171h1V172h1V168.5h1V172h1V170.5h1V172.5h1V171.5h1V172h1V171h1V171h1V169.5h1V170.5h1V172h1V169.5h1V172h1V171.5h1V169.5h1V169.5h1V170h1V170.5h1V170.5h1V171h1V176h1V175.5h1V176h1V176h1V172.5h1V171h1V172h1V169h1V172h1V171.5h1V171h1V171h1V171.5h1V172.5h1V168.5h1V171.5h1V171.5h1V172.5h1V169.5h1V171h1V172h1V170.5h1V172h1V169h1V171.5h1V171.5h1V171h1V171.5h1V171.5h1V171h1V170.5h1V172.5h1V170h1V171.5h1V170.5h1V171.5h1V169.5h1V169.5h1V169h1V172h1V171.5h1V171.5h1V171.5h1V170.5h1V171h1V172.5h1V171.5h1V169h1V172h1V172.5h1V171.5h1V171.5h1V170.5h1V171.5h1V172.5h1V171.5h1V171.5h1V171h1V170h1V171h1V171h1V172.5h1V169.5h1V172h1V172h1V171.5h1V171.5h1V171.5h1V170h1V172.5h1V172.5h1V172h1V171h1V171.5h1V172h1V172.5h1V172.5h1V172h1V172.5h1V170h1V171.5h1V171h1V171.5h1V172h1V170.5h1V171.5h1V171.5h1V171.5h1V172h1V171.5h1V169.5h1V172.5h1V171.5h1V172.5h1V172.5h1V174h1V177h1V179h1V179.5h1V179.5h1V177.5h1V178.5h1V180h1V180h1V180.5h1V180.5h1V180h1V184.5h-1V182h-1V182.5h-1V182.5h-1V185h-1V184.5h-1V183h-1V183.5h-1V183.5h-1V186.5h-1V187h-1V189.5h-1V190.5h-1V190.5h-1V192.5h-1V191h-1V191h-1V191h-1V193h-1V192h-1V191.5h-1V190.5h-1V190.5h-1V190.5h-1V192h-1V193.5h-1V191.5h-1V191h-1V193h-1V192h-1V192h-1V191.5h-1V191.5h-1V190h-1V192h-1V191h-1V191h-1V192.5h-1V190.5h-1V191.5h-1V192h-1V191.5h-1V192h-1V194.5h-1V191.5h-1V192.5h-1V190h-1V192h-1V191.5h-1V193h-1V190.5h-1V192h-1V192h-1V190.5h-1V192h-1V193h-1V192h-1V192.5h-1V190.5h-1V193.5h-1V190.5h-1V191.5h-1V190.5h-1V190.5h-1V191h-1V191h-1V190.5h-1V191h-1V191.5h-1V192h-1V191.5h-1V192.5h-1V192.5h-1V191.5h-1V191.5h-1V191h-1V191h-1V191.5h-1V190.5h-1V190.5h-1V192h-1V191h-1V191h-1V192.5h-1V190.5h-1V191h-1V191.5h-1V192.5h-1V191.5h-1V191h-1V192h-1V191h-1V192h-1V193h-1V190.5h-1V193.5h-1V191.5h-1V191h-1V192h-1V193.5h-1V191.5h-1V191.5h-1V192.5h-1V188h-1V188h-1V189h-1V187.5h-1V190h-1V191.5h-1V193h-1V190.5h-1V194h-1V190.5h-1V192.5h-1V192h-1V191.5h-1V191.5h-1V192.5h-1V192.5h-1V193h-1V193h-1V194.5h-1V192h-1V191.5h-1V192.5h-1V192h-1V191.5h-1V192.5h-1V191.5h-1V192.5h-1V193h-1V191h-1V190.5h-1V193h-1V191.5h-1V190.5h-1V192h-1V192h-1V192.5h-1V192.5h-1V191.5h-1V192.5h-1V192h-1V192.5h-1V190.5h-1V194.5h-1V192.5h-1V192h-1V192.5h-1V191h-1V192h-1V191h-1V191.5h-1V191h-1V191h-1V192h-1V192h-1V192.5h-1V192h-1V192.5h-1V194h-1V191h-1V191h-1V193h-1V193h-1V191.5h-1V194h-1V192.5h-1V194h-1V192h-1V195h-1V194.5h-1V191.5h-1V193h-1V191.5h-1V191.5h-1V192h-1V192h-1V191.5h-1V192h-1V192.5h-1V192h-1V191.5h-1V192h-1V191h-1V194.5h-1V192.5h-1V191.5h-1V192.5h-1V193.5h-1V191h-1V192.5h-1V191.5h-1V192h-1V191.5h-1V192.5h-1V191h-1V195h-1V194h-1V193h-1V193h-1V193.5h-1V191h-1V191h-1V192.5h-1V193.5h-1V191.5h-1V193.5h-1V191h-1V192h-1V191.5h-1V193.5h-1V191h-1V193.5h-1V191h-1V193h-1V192h-1V192.5h-1V192.5h-1V193.5h-1V194h-1V194h-1V193h-1V192h-1V191h-1V191h-1V191.5h-1V193.5h-1V193h-1V192h-1V192.5h-1V193h-1V191h-1V192.5h-1V191.5h-1V191.5h-1V191h-1V192.5h-1V191h-1V193h-1V192h-1V192h-1V193h-1V193h-1V192h-1V192.5h-1V192.5h-1V193h-1V192h-1V191.5h-1V191h-1V193h-1V194h-1V191.5h-1V193h-1V191h-1V191h-1V193h-1V191h-1V192h-1V191h-1V193h-1V192.5h-1V193h-1V193h-1V193h-1V192.5h-1V192.5h-1V193.5h-1V191.5h-1V191.5h-1V192h-1V191.5h-1V191h-1V193h-1V192.5h-1V191.5h-1V191.5h-1V192h-1V191.5h-1V192h-1V192h-1V192.5h-1V191h-1V191.5h-1V194.5h-1V192h-1V192h-1V192.5h-1V192.5h-1V191h-1V191.5h-1V192h-1V191.5h-1V191h-1V194h-1V192.5h-1V191.5h-1V191.5h-1V192.5h-1V194h-1V192h-1V191h-1V191.5h-1V190.5h-1V192h-1V190.5h-1V191.5h-1V190.5h-1V192h-1V192.5h-1V193h-1V191h-1V192h-1V192h-1V190.5h-1V191.5h-1V192h-1V190h-1V191h-1V191h-1V190.5h-1V190.5h-1V191.5h-1V189.5h-1V189.5h-1V190.5h-1V190.5h-1V189.5h-1V190h-1V189.5h-1V191.5h-1V190.5h-1V193h-1V190.5h-1V192.5h-1V190.5h-1V193.5h-1V191h-1V192h-1V192.5h-1V191h-1V192.5h-1V191.5h-1V193h-1V192h-1V192h-1V192.5h-1V190.5h-1V193.5h-1V194h-1V191.5h-1V192h-1V192.5h-1V192h-1V194h-1V192h-1V192.5h-1V192h-1V191.5h-1V192h-1V190.5h-1V194h-1V191h-1V192.5h-1V192h-1V193.5h-1V191.5h-1V191.5h-1V190.5h-1V191.5h-1V190.5h-1V191h-1V191.5h-1V191h-1V193h-1V191h-1V191.5h-1V191h-1V192h-1V190h-1V192.5h-1V191.5h-1V190.5h-1V191.5h-1V189.5h-1V189h-1V190h-1V190h-1V189.5h-1V190h-1V190.5h-1V192.5h-1V190.5h-1V191h-1V192h-1V190.5h-1V191h-1V191.5h-1V192h-1V192h-1V191h-1V194h-1V191h-1V191h-1V191h-1V192.5h-1V192.5h-1V192h-1V190.5h-1V194.5h-1V190.5h-1V192.5h-1V192h-1V190.5h-1V191h-1V191h-1V191.5h-1V192h-1V191h-1V192h-1V191h-1V191.5h-1V192.5h-1V194h-1V192.5h-1V191h-1V193.5h-1V193.5h-1V191.5h-1V192h-1V191.5h-1V191h-1V190.5h-1V191.5h-1V191.5h-1V193.5h-1V192h-1V190.5h-1V191.5h-1V192.5h-1V190.5h-1V191h-1V192.5h-1V191.5h-1V190.5h-1V192.5h-1V192h-1V191h-1V190.5h-1V191.5h-1V193.5h-1V190h-1V192.5h-1V191h-1V189.5h-1V190.5h-1V189.5h-1V189.5h-1V190h-1V190h-1V188.5h-1V192h-1V189h-1V189.5h-1V190h-1V190h-1V191.5h-1V192h-1V191h-1V191.5h-1V193.5h-1V191.5h-1V190.5h-1V190.5h-1V192h-1V191.5h-1V192h-1V194h-1V194h-1V190.5h-1V191.5h-1V192h-1V190h-1V192h-1V191.5h-1V190.5h-1V192.5h-1V191h-1V192h-1V191.5h-1V193h-1V191h-1V191h-1V192.5h-1V192h-1V190h-1V191h-1V191.5h-1V190.5h-1V191.5h-1V190h-1V190.5h-1V193h-1V193h-1V191.5h-1V191h-1V192h-1V192h-1V192.5h-1V193.5h-1V191h-1V190.5h-1V191.5h-1V192h-1V192.5h-1V190h-1V192.5h-1V193h-1V191.5h-1V192h-1V190h-1V190.5h-1V190.5h-1V191h-1V192.5h-1V189.5h-1V189.5h-1V189h-1V189h-1V187.5h-1V188.5h-1V189.5h-1V188h-1V190h-1V190.5h-1V191h-1V190.5h-1V190h-1V191.5h-1V190.5h-1V190h-1V190.5h-1V192h-1V192.5h-1V191.5h-1V190h-1V190.5h-1V190.5h-1V190h-1V191h-1V190.5h-1V190.5h-1V190h-1V191h-1V193h-1V193h-1V191.5h-1V190.5h-1V191h-1V189.5h-1V189.5h-1V190h-1V190.5h-1V189.5h-1V190.5h-1V189.5h-1V188h-1V189h-1V191.5h-1V188h-1V189h-1V188.5h-1V190h-1V192h-1V191h-1V190h-1V191.5h-1V191h-1V190h-1V191h-1V190h-1V190h-1V192h-1V190.5h-1V191h-1V190h-1V190h-1V191h-1V193h-1V189.5h-1V191.5h-1V193h-1V191h-1V191h-1V190h-1V191h-1V191.5h-1V189.5h-1V189h-1V188h-1V188.5h-1V188.5h-1V189.5h-1V189h-1V189h-1V190h-1V191.5h-1V189.5h-1V190h-1V189.5h-1V190.5h-1V191h-1V189.5h-1V190.5h-1V191h-1V189.5h-1V191h-1V190.5h-1V190h-1V190.5h-1V191h-1V190h-1V189.5h-1V192.5h-1V191.5h-1V190h-1V190.5h-1V189h-1V188h-1V188h-1V190h-1V189.5h-1V189.5h-1V190.5h-1V189.5h-1V189h-1V191h-1V189.5h-1V190.5h-1V190h-1V192h-1V190h-1V189.5h-1V190h-1V191h-1V189.5h-1V190h-1V190h-1V192.5h-1V190.5h-1V191h-1V189.5h-1V191h-1V191.5h-1V191h-1V191.5h-1V191.5h-1V191h-1V190.5h-1V189.5h-1V190.5h-1V190h-1V189.5h-1V190.5h-1V190h-1V192.5h-1V190.5h-1V190.5h-1V191.5h-1V187h-1V187.5h-1V190h-1V187.5h-1V187h-1V187h-1V187h-1V187h-1V187.5h-1V187.5h-1V190.5h-1V189h-1V187.5h-1V188.5h-1V187.5h-1V187h-1V187.5h-1V187h-1V186.5h-1V187h-1V187.5h-1V186.5h-1V189.5h-1V187h-1V187.5h-1V187h-1V188.5h-1V186.5h-1V187.5h-1V187h-1V187h-1V187h-1V186.5h-1V187h-1V186.5h-1V187h-1V186.5h-1V187.5h-1V186.5h-1V186.5h-1V187h-1V187.5h-1V187h-1V187h-1V189h-1V188h-1V187h-1V189h-1Z"/><path d="M279 203V203h1V203.5h1V203.5h1V201.5h1V203.5h1V203h1V203.5h1V203.5h1V202h1V202h1V202.5h1V202h1V203.5h1V203h1V203.5h1V203.5h1V201.5h1V202.5h1V203h1V203.5h1V202h1V202.5h1V203h1V202.5h1V202.5h1V203h1V202.5h1V202.5h1V203h1V203h1V203h1V203.5h1V203.5h1V202.5h1V202.5h1V202.5h1V203.5h1V202.5h1V201h1V203h1V203h1V202.5h1V202h1V200.5h1V202.5h1V202.5h1V203h1V203.5h1V198h1V200.5h1V200.5h1V199.5h1V198h1V201h1V201h1V200h1V200.5h1V199.5h1V200.5h1V200h1V200.5h1V199h1V199.5h1V200h1V199.5h1V199.5h1V200.5h1V199.5h1V198.5h1V198h1V199h1V199h1V200.5h1V200.5h1V200h1V200h1V200.5h1V200h1V199h1V199.5h1V200h1V199.5h1V200.5h1V199h1V201.5h1V202h1V201h1V202.5h1V201h1V201.5h1V200.5h1V200.5h1V197h1V197h1V198h1V198h1V200h1V200.5h1V199.5h1V199.5h1V198h1V199h1V199.5h1V200h1V199.5h1V199h1V196.5h1V199.5h1V198.5h1V199.5h1V197h1V200h1V201h1V200h1V200h1V201h1V201h1V201.5h1V200.5h1V201h1V200h1V200h1V198h1V199.5h1V198h1V197.5h1V199.5h1V200h1V200h1V199h1V200h1V200h1V199.5h1V199h1V200h1V199h1V199h1V198.5h1V200h1V198h1V199h1V198.5h1V199h1V200h1V199.5h1V198.5h1V201h1V201h1V201h1V201.5h1V201h1V200.5h1V199.5h1V200.5h1V201h1V199.5h1V199h1V200h1V198h1V200h1V199h1V199.5h1V200h1V197h1V198h1V197h1V198.5h1V200h1V199.5h1V198.5h1V198.5h1V199.5h1V196.5h1V199.5h1V200h1V199.5h1V200h1V198.5h1V197h1V197.5h1V198.5h1V200.5h1V199.5h1V200.5h1V198.5h1V201h1V200h1V200h1V200h1V200h1V200.5h1V199.5h1V200h1V199.5h1V198h1V198.5h1V199h1V198.5h1V199h1V197h1V198.5h1V199h1V198.5h1V198h1V198h1V199h1V197.5h1V198.5h1V199h1V198h1V198h1V199h1V198h1V198h1V196.5h1V198.5h1V199h1V199.5h1V199.5h1V198.5h1V196.5h1V199.5h1V197.5h1V198.5h1V198h1V198h1V196h1V198h1V199.5h1V199.5h1V200h1V199.5h1V197h1V198.5h1V198.5h1V198h1V200h1V198h1V197h1V199.5h1V199h1V199h1V199h1V198.5h1V198h1V199h1V199h1V199h1V200h1V200h1V199.5h1V199h1V199h1V200.5h1V201h1V199.5h1V201h1V201h1V199h1V198.5h1V198.5h1V200h1V199h1V198.5h1V199.5h1V198.5h1V198.5h1V198h1V197h1V199.5h1V198h1V197h1V199h1V199h1V198h1V199h1V198.5h1V199.5h1V198h1V199h1V198.5h1V199.5h1V199.5h1V196.5h1V199.5h1V199h1V198h1V197.5h1V198.5h1V199.5h1V197h1V199.5h1V199.5h1V199h1V198.5h1V198h1V199h1V199.5h1V199.5h1V199h1V199.5h1V198h1V196.5h1V198.5h1V196h1V199.5h1V199h1V199.5h1V198h1V198.5h1V196h1V197.5h1V198.5h1V197.5h1V199h1V196.5h1V198h1V198.5h1V197.5h1V198.5h1V198.5h1V198.5h1V200h1V198.5h1V200h1V197.5h1V199.5h1V197.5h1V200h1V200h1V200h1V200h1V200.5h1V200h1V199.5h1V197h1V199h1V199.5h1V198h1V198.5h1V199.5h1V199.5h1V199h1V198h1V198h1V198.5h1V199.5h1V198h1V199h1V198.5h1V199h1V199h1V199h1V197.5h1V198h1V197.5h1V198.5h1V197h1V199.5h1V198h1V198h1V197.5h1V199h1V199.5h1V197.5h1V199h1V198.5h1V199.5h1V199h1V199h1V197h1V197.5h1V197.5h1V199h1V199.5h1V198h1V199h1V197.5h1V198.5h1V199h1V198.5h1V199.5h1V198.5h1V199.5h1V197.5h1V198.5h1V200h1V200h1V198h1V199.5h1V200.5h1V200.5h1V198.5h1V199h1V200.5h1V200h1V200h1V200h1V200h1V200h1V199.5h1V199.5h1V200h1V197h1V199h1V199.5h1V199h1V197.5h1V199.5h1V199.5h1V198.5h1V197.5h1V198h1V198.5h1V198.5h1V198h1V195.5h1V198h1V197.5h1V198.5h1V199h1V199.5h1V198h1V197.5h1V198h1V196.5h1V198h1V197.5h1V198.5h1V198.5h1V199h1V197.5h1V197h1V198h1V195.5h1V198h1V197.5h1V197.5h1V198h1V198.5h1V197h1V198.5h1V198h1V197h1V199h1V198.5h1V198h1V196.5h1V199h1V195.5h1V197.5h1V198h1V197.5h1V199h1V199h1V198.5h1V197.5h1V199h1V198.5h1V199h1V199h1V198h1V197h1V196h1V198h1V197.5h1V198.5h1V198.5h1V195.5h1V198.5h1V196.5h1V198h1V199h1V198.5h1V197h1V199h1V198.5h1V198h1V198h1V198.5h1V197h1V198h1V196.5h1V199h1V195.5h1V197h1V198h1V197h1V196h1V198h1V198h1V198.5h1V198.5h1V198.5h1V199h1V197.5h1V195h1V198h1V196h1V196.5h1V198.5h1V197.5h1V199h1V198h1V198.5h1V198h1V199h1V198h1V199h1V198h1V196h1V197.5h1V198h1V198h1V198.5h1V198h1V197.5h1V197h1V198h1V197.5h1V197.5h1V197.5h1V197.5h1V197h1V195.5h1V196h1V195.5h1V197h1V197.5h1V199h1V198.5h1V199h1V198.5h1V197h1V199h1V199h1V197.5h1V197h1V197h1V198h1V199h1V198h1V198.5h1V198h1V197.5h1V197.5h1V198h1V198h1V199h1V198.5h1V198.5h1V197.5h1V198.5h1V196h1V196.5h1V197h1V198.5h1V197h1V199.5h1V196.5h1V197.5h1V199h1V198.5h1V197.5h1V197.5h1V198.5h1V197.5h1V199h1V199h1V198h1V199h1V198h1V198.5h1V198h1V195.5h1V198h1V198.5h1V199.5h1V198h1V196h1V198h1V198.5h1V197.5h1V198.5h1V198h1V196.5h1V198h1V198.5h1V198.5h1V198.5h1V198.5h1V199h1V196.5h1V197h1V196.5h1V197h1V198.5h1V199h1V198h1V198h1V196.5h1V198.5h1V197.5h1V199.5h1V199h1V197h1V197.5h1V197.5h1V199.5h1V199h1V201h1V202.5h1V202h1V202.5h1V201.5h1V200.5h1V199h1V199h1V199.5h1V197h1V197.5h1V197.5h1V198.5h1V199h1V198h1V199.5h1V199.5h1V199h1V199.5h1V197.5h1V198h1V199h1V199h1V199.5h1V196.5h1V198h1V198.5h1V197.5h1V199.5h1V197.5h1V198h1V198.5h1V198.5h1V198h1V198.5h1V198.5h1V199.5h1V199h1V198.5h1V198.5h1V198.5h1V199h1V199.5h1V198.5h1V198h1V198h1V198h1V199h1V197h1V200h1V199h1V199.5h1V199.5h1V198h1V198.5h1V200h1V198h1V197.5h1V198h1V197h1V199.5h1V200h1V197.5h1V199h1V196h1V199.5h1V199h1V199h1V199h1V197h1V197h1V198.5h1V198.5h1V199h1V198h1V199.5h1V199h1V198.5h1V199.5h1V196.5h1V198.5h1V199.5h1V199.5h1V196.5h1V198h1V199.5h1V200h1V199h1V199.5h1V197.5h1V198.5h1V196h1V199.5h1V200h1V197h1V199h1V202h1V204h1V206h1V206h1V205.5h1V207h1V206.5h1V206.5h1V205h1V207.5h1V208h1V208h1V209h-1V209h-1V209.5h-1V209.5h-1V209.5h-1V210h-1V210h-1V211h-1V213h-1V211h-1V213.5h-1V215.5h-1V220.5h-1V218h-1V218.5h-1V219h-1V217h-1V217.5h-1V219.5h-1V219.5h-1V219h-1V218h-1V220.5h-1V217.5h-1V218.5h-1V218h-1V218h-1V219h-1V219h-1V219h-1V219h-1V218h-1V217.5h-1V218h-1V221h-1V217.5h-1V219.5h-1V219h-1V217.5h-1V217.5h-1V219h-1V219h-1V218h-1V218.5h-1V218.5h-1V217.5h-1V219h-1V219h-1V219h-1V219h-1V218h-1V219h-1V219.5h-1V218.5h-1V220.5h-1V217.5h-1V217.5h-1V218.5h-1V218.5h-1V220h-1V218h-1V220h-1V217.5h-1V219h-1V218.5h-1V218h-1V218.5h-1V219h-1V217.5h-1V220.5h-1V219h-1V219h-1V218.5h-1V219h-1V218h-1V217.5h-1V218h-1V217.5h-1V218h-1V218.5h-1V218.5h-1V219h-1V220.5h-1V219h-1V217.5h-1V219h-1V221.5h-1V220.5h-1V217.5h-1V218.5h-1V218.5h-1V217.5h-1V217.5h-1V217.5h-1V221.5h-1V219.5h-1V217.5h-1V219.5h-1V218.5h-1V218h-1V217.5h-1V221h-1V217h-1V214h-1V214.5h-1V214.5h-1V215.5h-1V219.5h-1V218.5h-1V218h-1V220h-1V218.5h-1V219.5h-1V220h-1V218h-1V219.5h-1V217.5h-1V220.5h-1V219h-1V220h-1V219.5h-1V220.5h-1V219h-1V218h-1V219.5h-1V221h-1V219.5h-1V220h-1V219.5h-1V219.5h-1V218h-1V218.5h-1V219h-1V219.5h-1V219h-1V218.5h-1V220h-1V220h-1V218.5h-1V219.5h-1V218.5h-1V218h-1V219h-1V218h-1V219h-1V219h-1V220.5h-1V219.5h-1V222h-1V220.5h-1V220h-1V219.5h-1V218h-1V218h-1V219h-1V218.5h-1V221h-1V218.5h-1V219h-1V220h-1V218h-1V218h-1V220h-1V219h-1V222h-1V219h-1V218.5h-1V220.5h-1V221h-1V218.5h-1V218.5h-1V220h-1V219.5h-1V221h-1V218.5h-1V218h-1V219.5h-1V218.5h-1V218.5h-1V222h-1V221h-1V219h-1V219.5h-1V219h-1V219h-1V222.5h-1V219.5h-1V220.5h-1V220h-1V219h-1V219h-1V221h-1V220h-1V219.5h-1V218.5h-1V220.5h-1V218.5h-1V220.5h-1V219h-1V220h-1V221h-1V219.5h-1V218.5h-1V220h-1V218.5h-1V220.5h-1V219.5h-1V218h-1V218h-1V221h-1V219h-1V220.5h-1V219h-1V219h-1V218.5h-1V220h-1V219.5h-1V219.5h-1V220h-1V218h-1V219.5h-1V220h-1V221h-1V218h-1V220h-1V219.5h-1V220.5h-1V219.5h-1V218h-1V219.5h-1V219.5h-1V220h-1V218h-1V218h-1V220h-1V219.5h-1V218h-1V218.5h-1V218h-1V218.5h-1V219.5h-1V222.5h-1V220h-1V218.5h-1V218.5h-1V220h-1V220h-1V219h-1V220h-1V218.5h-1V220.5h-1V220h-1V219h-1V219.5h-1V218h-1V219h-1V220h-1V219.5h-1V220h-1V219h-1V219h-1V219h-1V218h-1V219h-1V218.5h-1V220h-1V220.5h-1V219h-1V218h-1V218h-1V219h-1V219.5h-1V219h-1V220h-1V218h-1V220h-1V220h-1V220h-1V220.5h-1V219.5h-1V218h-1V219h-1V220h-1V220h-1V219.5h-1V219.5h-1V219h-1V219h-1V219h-1V219h-1V219h-1V219h-1V218h-1V218h-1V219h-1V219h-1V219h-1V217.5h-1V219h-1V218h-1V221h-1V218.5h-1V218h-1V218.5h-1V217.5h-1V218h-1V219h-1V218.5h-1V219h-1V217.5h-1V217.5h-1V218h-1V218h-1V218.5h-1V220h-1V218.5h-1V218h-1V219h-1V217h-1V218.5h-1V218h-1V217.5h-1V216.5h-1V216h-1V218.5h-1V216h-1V217h-1V216.5h-1V219h-1V218.5h-1V218.5h-1V217h-1V218.5h-1V217.5h-1V218.5h-1V219h-1V217.5h-1V219.5h-1V221h-1V219.5h-1V217.5h-1V217.5h-1V218.5h-1V218.5h-1V221h-1V218h-1V218h-1V217.5h-1V218.5h-1V217.5h-1V219.5h-1V220h-1V218.5h-1V218h-1V219.5h-1V219h-1V217.5h-1V218h-1V218.5h-1V218h-1V218h-1V218h-1V217.5h-1V218h-1V217.5h-1V217.5h-1V219h-1V220h-1V219h-1V219.5h-1V219h-1V219.5h-1V219h-1V219h-1V218.5h-1V220h-1V218.5h-1V219h-1V219h-1V217.5h-1V218h-1V218h-1V217.5h-1V217.5h-1V217.5h-1V218h-1V219h-1V218h-1V217h-1V217h-1V218h-1V218h-1V217h-1V217h-1V218.5h-1V218.5h-1V218.5h-1V219h-1V219h-1V218h-1V217.5h-1V219.5h-1V218h-1V217.5h-1V219h-1V218.5h-1V221.5h-1V220h-1V220h-1V217.5h-1V218.5h-1V219h-1V220h-1V219h-1V219.5h-1V219h-1V220h-1V219h-1V219h-1V219h-1V219.5h-1V220h-1V219h-1V219h-1V219.5h-1V218.5h-1V218.5h-1V217.5h-1V219.5h-1V218h-1V219.5h-1V221.5h-1V218.5h-1V218h-1V219h-1V219h-1V219h-1V217.5h-1V218h-1V218h-1V221.5h-1V218h-1V219.5h-1V218h-1V218h-1V217.5h-1V221h-1V219.5h-1V218h-1V217.5h-1V220h-1V219h-1V217.5h-1V217.5h-1V218h-1V219.5h-1V216.5h-1V216.5h-1V217h-1V216.5h-1V216.5h-1V216.5h-1V218h-1V216.5h-1V217h-1V218h-1V218h-1V219h-1V217.5h-1V219h-1V217.5h-1V217.5h-1V221.5h-1V217.5h-1V218h-1V218h-1V217.5h-1V218.5h-1V217.5h-1V217.5h-1V217h-1V218.5h-1V219h-1V218.5h-1V220h-1V217.5h-1V218h-1V219h-1V220.5h-1V217.5h-1V219h-1V218.5h-1V218.5h-1V218.5h-1V218.5h-1V218h-1V217h-1V217.5h-1V218h-1V220h-1V220h-1V219.5h-1V219h-1V221h-1V219h-1V218.5h-1V218h-1V218.5h-1V219h-1V219h-1V218.5h-1V219h-1V217.5h-1V217.5h-1V218.5h-1V218.5h-1V217.5h-1V217h-1V217.5h-1V219h-1V218h-1V217h-1V217.5h-1V219h-1V217.5h-1V218h-1V219h-1V216.5h-1V216.5h-1V216h-1V215.5h-1V216h-1V215h-1V215h-1V217h-1V217h-1V216.5h-1V217h-1V217h-1V218.5h-1V218h-1V217.5h-1V217h-1V218.5h-1V218.5h-1V218.5h-1V218.5h-1V217h-1V220h-1V217.5h-1V220.5h-1V218h-1V218h-1V218h-1V217.5h-1V218.5h-1V220.5h-1V217.5h-1V218.5h-1V218h-1V217h-1V216.5h-1V217h-1V216.5h-1V217h-1V215.5h-1V216h-1V216.5h-1V215h-1V215.5h-1V215h-1V215.5h-1V217h-1V216h-1V217.5h-1V217.5h-1V216.5h-1V217h-1V219.5h-1V218h-1V218.5h-1V219h-1V218h-1V217.5h-1V220h-1V217h-1V218h-1V219.5h-1V218h-1V218h-1V216.5h-1V218.5h-1V217.5h-1V218.5h-1V218.5h-1V216.5h-1V218h-1V217.5h-1V218h-1V215.5h-1V215.5h-1V216.5h-1V215.5h-1V216.5h-1V217h-1V216h-1V217.5h-1V216.5h-1V217h-1V218h-1V218h-1V217h-1V216.5h-1V217h-1V218.5h-1V218h-1V216.5h-1V217.5h-1V218h-1V216.5h-1V217h-1V219.5h-1V218h-1V216.5h-1V217.5h-1V217.5h-1V216.5h-1V217.5h-1V215h-1V217.5h-1V215.5h-1V214.5h-1V216h-1V217h-1V215.5h-1V216h-1V216.5h-1V216.5h-1V217h-1V216.5h-1V218.5h-1V217.5h-1V216.5h-1V217.5h-1V217h-1V217.5h-1V216h-1V216h-1V217h-1V216.5h-1V217h-1V216.5h-1V216.5h-1V216h-1V217.5h-1V217.5h-1V219h-1V217.5h-1V216.5h-1V217.5h-1V218.5h-1V217.5h-1V217h-1V218h-1V217.5h-1V216.5h-1V217h-1V217h-1V216h-1V218.5h-1V214.5h-1V216h-1V214.5h-1V214h-1V214.5h-1V214h-1V214h-1V214h-1V214h-1V213.5h-1V213.5h-1V214h-1V216h-1V213.5h-1V213.5h-1V214h-1V215.5h-1V216.5h-1V215.5h-1V214h-1V214h-1V214.5h-1V215.5h-1V214.5h-1V214.5h-1V214h-1V214h-1V216.5h-1V214h-1V214h-1V213.5h-1V213.5h-1V213.5h-1V213.5h-1V213.5h-1V214h-1V215h-1V214h-1V213.5h-1V213.5h-1V214.5h-1V213.5h-1V213.5h-1V213.5h-1V214h-1V214.5h-1V214.5h-1V215h-1Z"/></g><g id="rmw100"><path d="M279 176.5V176.5h1V177.5h1V177h1V178h1V176.5h1V177h1V177h1V178h1V178h1V177.5h1V177.5h1V178h1V177.5h1V178h1V177.5h1V177h1V177h1V177h1V178h1V177.5h1V177h1V177h1V178h1V177.5h1V174.5h1V176.5h1V177h1V177h1V175h1V176.5h1V177.5h1V177h1V177h1V177.5h1V176h1V177h1V175h1V177.5h1V177h1V178h1V177.5h1V178h1V177h1V176.5h1V177h1V178h1V175.5h1V177.5h1V175h1V172.5h1V174h1V174h1V175h1V176h1V174h1V175h1V174.5h1V176h1V174.5h1V174.5h1V175h1V175h1V174.5h1V175.5h1V176h1V174h1V174.5h1V175.5h1V174h1V175h1V175.5h1V173.5h1V175h1V174.5h1V174h1V174.5h1V174h1V175h1V174h1V173.5h1V176h1V174.5h1V175.5h1V174.5h1V175.5h1V177h1V177h1V176h1V176h1V176.5h1V176.5h1V176.5h1V175.5h1V172h1V175.5h1V174.5h1V175.5h1V174.5h1V175h1V174h1V174h1V175.5h1V174.5h1V175h1V174.5h1V173.5h1V173.5h1V175h1V174.5h1V173.5h1V174h1V175h1V175h1V175.5h1V176h1V177h1V176.5h1V174.5h1V176h1V175h1V176h1V174.5h1V175h1V174h1V175.5h1V174.5h1V175.5h1V175.5h1V175.5h1V175.5h1V174h1V174h1V175h1V173.5h1V175.5h1V174h1V175h1V174.5h1V175h1V173h1V174.5h1V175h1V175.5h1V175h1V175.5h1V175h1V173.5h1V176.5h1V176h1V177h1V177h1V175h1V175.5h1V175h1V175.5h1V176h1V172.5h1V174h1V174.5h1V174.5h1V172h1V174.5h1V175.5h1V174h1V174.5h1V171h1V174h1V174.5h1V175.5h1V175h1V174h1V175.5h1V175h1V175.5h1V175h1V173.5h1V174h1V173.5h1V175h1V175h1V173h1V175h1V174h1V175h1V175h1V176h1V176.5h1V177h1V176.5h1V176h1V175h1V174h1V173.5h1V175h1V173.5h1V173.5h1V172.5h1V174h1V174h1V173.5h1V174.5h1V174h1V174.5h1V173.5h1V175h1V172.5h1V173h1V171.5h1V174h1V173.5h1V174.5h1V174.5h1V174h1V175h1V173.5h1V173.5h1V175h1V172.5h1V175.5h1V175.5h1V175h1V173h1V173.5h1V175h1V173.5h1V175.5h1V173h1V175h1V173.5h1V174h1V174h1V173h1V174.5h1V174.5h1V175h1V174h1V175.5h1V173h1V175.5h1V175.5h1V174h1V175h1V173.5h1V174h1V173.5h1V175.5h1V173.5h1V173h1V173h1V174.5h1V175h1V174.5h1V174h1V176h1V176h1V174.5h1V174.5h1V176h1V173h1V173h1V175.5h1V176h1V174.5h1V175h1V175h1V174.5h1V174h1V174.5h1V173h1V175h1V173.5h1V173.5h1V171.5h1V175h1V174.5h1V173h1V175h1V174h1V173.5h1V173.5h1V173.5h1V173.5h1V174.5h1V173.5h1V175h1V174h1V175.5h1V173.5h1V173h1V173h1V172.5h1V174h1V173h1V174h1V175.5h1V174.5h1V174.5h1V173.5h1V173h1V173h1V174h1V174.5h1V175h1V174h1V173h1V174.5h1V172.5h1V173h1V175h1V175h1V173h1V173.5h1V175h1V174h1V175h1V175h1V173h1V174h1V175h1V174.5h1V174.5h1V173.5h1V172h1V174.5h1V173.5h1V174.5h1V174.5h1V174h1V175h1V175h1V173h1V175.5h1V175h1V176.5h1V174.5h1V174h1V173.5h1V175.5h1V175h1V175h1V173.5h1V175h1V173h1V173h1V173h1V173.5h1V173.5h1V173h1V174.5h1V174.5h1V173.5h1V174.5h1V173.5h1V174h1V173h1V175h1V171h1V174h1V173h1V173h1V173h1V175h1V173.5h1V174.5h1V173.5h1V174h1V172.5h1V173.5h1V174h1V173.5h1V173.5h1V174h1V172.5h1V173h1V174h1V173h1V173h1V173.5h1V173.5h1V174h1V174.5h1V174h1V174.5h1V172.5h1V174h1V173.5h1V175.5h1V174h1V173.5h1V175.5h1V175h1V175.5h1V174.5h1V176h1V175h1V175h1V174.5h1V174h1V174h1V173.5h1V174h1V174h1V174h1V174h1V172.5h1V173h1V173.5h1V172h1V173.5h1V174.5h1V175.5h1V173h1V175h1V173h1V174h1V174h1V172h1V174h1V173h1V174h1V174h1V174h1V174h1V173.5h1V173h1V172.5h1V173.5h1V172.5h1V174.5h1V175h1V172.5h1V173h1V175h1V172h1V172.5h1V175h1V173h1V172.5h1V173.5h1V173.5h1V173.5h1V171.5h1V173h1V174.5h1V172h1V171.5h1V175h1V174.5h1V174h1V173.5h1V171.5h1V173h1V175h1V175h1V172.5h1V174h1V172h1V172.5h1V173.5h1V173.5h1V170h1V174h1V172h1V174.5h1V174h1V172h1V172h1V172.5h1V174h1V174.5h1V171h1V173h1V173h1V174.5h1V173.5h1V172.5h1V173.5h1V174.5h1V172.5h1V174h1V172.5h1V172.5h1V174.5h1V174h1V171.5h1V174.5h1V174h1V174.5h1V175h1V173.5h1V175h1V172.5h1V174h1V172.5h1V173.5h1V172.5h1V174.5h1V171.5h1V172.5h1V173.5h1V174.5h1V172h1V174h1V174h1V172.5h1V174h1V173h1V173h1V174h1V172h1V173h1V172.5h1V173h1V173.5h1V173h1V172.5h1V173h1V172h1V174.5h1V172.5h1V174h1V172h1V172.5h1V174.5h1V173h1V173h1V174h1V174h1V174.5h1V174h1V173.5h1V174h1V174h1V172.5h1V173.5h1V172.5h1V173.5h1V172.5h1V172.5h1V172.5h1V173.5h1V172h1V172.5h1V174.5h1V172.5h1V174.5h1V173h1V172.5h1V174h1V172.5h1V174h1V173.5h1V171h1V173h1V171.5h1V173.5h1V172.5h1V173.5h1V174.5h1V174.5h1V174h1V174h1V173.5h1V172.5h1V174h1V173.5h1V174.5h1V174h1V172.5h1V174h1V171h1V172.5h1V173h1V172.5h1V171.5h1V173.5h1V174h1V173.5h1V170.5h1V174h1V172.5h1V174.5h1V173h1V174h1V173h1V172.5h1V172.5h1V174.5h1V172.5h1V172h1V174.5h1V172.5h1V174h1V173h1V174.5h1V175h1V174.5h1V172.5h1V172h1V173h1V172.5h1V172.5h1V172.5h1V173.5h1V173h1V173.5h1V175h1V174h1V174.5h1V174.5h1V176h1V176.5h1V176h1V176.5h1V177.5h1V174.5h1V173h1V173h1V174h1V172h1V174.5h1V174.5h1V174h1V174.5h1V174.5h1V174h1V175h1V173h1V174.5h1V175h1V174h1V174.5h1V174h1V175.5h1V174h1V175h1V174h1V175h1V173.5h1V173.5h1V173.5h1V173.5h1V172.5h1V174.5h1V174.5h1V175h1V173h1V174h1V174h1V173h1V175h1V174h1V175.5h1V175h1V173.5h1V175h1V175h1V174h1V173h1V174h1V175h1V174.5h1V174.5h1V174h1V173.5h1V174h1V174h1V173.5h1V173.5h1V173h1V175h1V172h1V173.5h1V175h1V173.5h1V174h1V172.5h1V172h1V173.5h1V174.5h1V175h1V174h1V175h1V175.5h1V175h1V173.5h1V175.5h1V175h1V174.5h1V174.5h1V173.5h1V173h1V174.5h1V173.5h1V174.5h1V174h1V174.5h1V175h1V173h1V173h1V174.5h1V175h1V174.5h1V173h1V175h1V175h1V176h1V178h1V180h1V180h1V180.5h1V180.5h1V181h1V180h1V181h1V181h1V181.5h1V181.5h1V181.5h-1V181.5h-1V182h-1V182h-1V182h-1V184.5h-1V182.5h-1V182.5h-1V183h-1V183.5h-1V184.5h-1V187h-1V187.5h-1V188.5h-1V190h-1V187.5h-1V190h-1V188h-1V188h-1V191.5h-1V189.5h-1V190.5h-1V190h-1V189h-1V189.5h-1V189h-1V189.5h-1V189.5h-1V188h-1V188.5h-1V187.5h-1V189.5h-1V190h-1V189h-1V189h-1V189h-1V188.5h-1V188.5h-1V189h-1V189h-1V189.5h-1V190h-1V188h-1V189h-1V189h-1V190h-1V190h-1V187.5h-1V188h-1V189h-1V188h-1V189.5h-1V190h-1V188h-1V189h-1V189h-1V189.5h-1V189.5h-1V189.5h-1V190.5h-1V189h-1V189.5h-1V188h-1V188.5h-1V191h-1V190h-1V188.5h-1V190h-1V188h-1V187.5h-1V192h-1V189.5h-1V190h-1V189.5h-1V189h-1V189.5h-1V188.5h-1V190h-1V190.5h-1V188h-1V188h-1V190h-1V188.5h-1V188h-1V188.5h-1V190.5h-1V190h-1V190h-1V190h-1V189.5h-1V189.5h-1V189h-1V189.5h-1V190h-1V188.5h-1V190.5h-1V189.5h-1V189h-1V188h-1V190.5h-1V188.5h-1V188h-1V187.5h-1V186.5h-1V186h-1V188h-1V186h-1V188h-1V191h-1V189.5h-1V189h-1V190h-1V190h-1V189h-1V188.5h-1V189.5h-1V190.5h-1V189.5h-1V190h-1V190.5h-1V190h-1V188.5h-1V190h-1V190h-1V190.5h-1V190h-1V190h-1V188.5h-1V188h-1V188.5h-1V190.5h-1V188.5h-1V190h-1V189h-1V188h-1V189.5h-1V190h-1V190.5h-1V188.5h-1V190h-1V188.5h-1V188.5h-1V189h-1V189h-1V190.5h-1V191h-1V190.5h-1V188h-1V189.5h-1V190.5h-1V190h-1V190.5h-1V189.5h-1V188.5h-1V190h-1V189.5h-1V191h-1V190h-1V189h-1V190.5h-1V190.5h-1V189h-1V190.5h-1V191h-1V190h-1V190h-1V189.5h-1V188.5h-1V189.5h-1V189.5h-1V189.5h-1V188h-1V188.5h-1V189.5h-1V190h-1V188.5h-1V189.5h-1V189h-1V188.5h-1V190.5h-1V190.5h-1V189h-1V189.5h-1V190h-1V189.5h-1V189.5h-1V189.5h-1V189.5h-1V189.5h-1V190h-1V189h-1V188.5h-1V189.5h-1V188.5h-1V190.5h-1V190.5h-1V188.5h-1V189.5h-1V190.5h-1V191h-1V192h-1V191h-1V190h-1V189h-1V190h-1V190.5h-1V191.5h-1V188h-1V189h-1V189h-1V190.5h-1V188.5h-1V189h-1V188.5h-1V189h-1V188.5h-1V190.5h-1V190.5h-1V188.5h-1V189h-1V188.5h-1V189h-1V190h-1V189h-1V190h-1V189.5h-1V190.5h-1V188.5h-1V192h-1V191h-1V190h-1V189h-1V188.5h-1V190h-1V190h-1V189.5h-1V190h-1V189.5h-1V190h-1V188.5h-1V188.5h-1V189h-1V188.5h-1V190h-1V188.5h-1V191h-1V190.5h-1V190h-1V189.5h-1V191h-1V188h-1V190h-1V189h-1V188.5h-1V190h-1V190h-1V191h-1V188.5h-1V190h-1V189.5h-1V190h-1V190.5h-1V189.5h-1V188h-1V190.5h-1V189.5h-1V191h-1V189.5h-1V189.5h-1V188.5h-1V189h-1V189.5h-1V189.5h-1V189h-1V190.5h-1V191.5h-1V190.5h-1V189h-1V191h-1V191h-1V190.5h-1V190h-1V190.5h-1V190.5h-1V190h-1V188.5h-1V190.5h-1V190.5h-1V190h-1V190.5h-1V189.5h-1V189.5h-1V189.5h-1V190h-1V189h-1V188.5h-1V192h-1V189.5h-1V188.5h-1V190h-1V188.5h-1V190h-1V188h-1V188.5h-1V190h-1V189.5h-1V190h-1V188h-1V189.5h-1V190h-1V188h-1V188.5h-1V190h-1V187.5h-1V188h-1V188h-1V188h-1V188.5h-1V189.5h-1V188.5h-1V187h-1V191h-1V187h-1V187h-1V188h-1V188.5h-1V189h-1V188.5h-1V188h-1V188.5h-1V188.5h-1V188h-1V188h-1V191.5h-1V188.5h-1V189h-1V190.5h-1V189.5h-1V190h-1V188h-1V189.5h-1V189h-1V189h-1V188h-1V189h-1V188h-1V188.5h-1V189h-1V189.5h-1V190h-1V188.5h-1V188.5h-1V189.5h-1V188h-1V189h-1V188h-1V188h-1V188.5h-1V189.5h-1V188h-1V189h-1V190h-1V188h-1V189.5h-1V188.5h-1V190h-1V190.5h-1V191h-1V190.5h-1V188.5h-1V190.5h-1V189.5h-1V189h-1V188h-1V188.5h-1V191h-1V188h-1V190h-1V189.5h-1V189.5h-1V189.5h-1V187.5h-1V188h-1V189.5h-1V187.5h-1V188h-1V187h-1V187.5h-1V187.5h-1V187.5h-1V188.5h-1V187.5h-1V188.5h-1V187.5h-1V189.5h-1V189h-1V188h-1V189h-1V190.5h-1V188h-1V189.5h-1V189h-1V188h-1V190h-1V190h-1V188.5h-1V190h-1V189.5h-1V191.5h-1V190h-1V189h-1V189h-1V190.5h-1V189.5h-1V188h-1V188.5h-1V188h-1V189h-1V189.5h-1V188.5h-1V190h-1V188h-1V191h-1V187.5h-1V190h-1V189.5h-1V190h-1V189.5h-1V188.5h-1V190h-1V190h-1V188h-1V190h-1V188h-1V190h-1V188h-1V190.5h-1V189.5h-1V188h-1V190h-1V189h-1V188h-1V191h-1V188h-1V188h-1V189.5h-1V188h-1V190h-1V189h-1V190h-1V189h-1V188h-1V189.5h-1V187.5h-1V187h-1V188.5h-1V187h-1V188h-1V187.5h-1V189.5h-1V187h-1V189.5h-1V187.5h-1V188h-1V188h-1V187.5h-1V188.5h-1V189h-1V188.5h-1V189h-1V187.5h-1V189.5h-1V189.5h-1V188h-1V188h-1V188.5h-1V189h-1V188h-1V187.5h-1V190h-1V191h-1V190h-1V189h-1V189.5h-1V189h-1V189.5h-1V188.5h-1V190h-1V189h-1V188.5h-1V188.5h-1V188.5h-1V189h-1V188.5h-1V188.5h-1V192h-1V189h-1V188.5h-1V189.5h-1V190.5h-1V189.5h-1V189h-1V189h-1V188.5h-1V189h-1V189.5h-1V191.5h-1V188.5h-1V189h-1V188h-1V189h-1V187.5h-1V189h-1V188.5h-1V188.5h-1V190h-1V187.5h-1V188h-1V189h-1V189.5h-1V189h-1V188.5h-1V188.5h-1V188.5h-1V189.5h-1V189.5h-1V188.5h-1V187h-1V187.5h-1V186h-1V188.5h-1V186h-1V186.5h-1V187.5h-1V188h-1V188.5h-1V189h-1V191h-1V189.5h-1V187.5h-1V190h-1V190h-1V189h-1V187.5h-1V188h-1V188.5h-1V189h-1V189h-1V189h-1V189.5h-1V188.5h-1V188h-1V189h-1V189.5h-1V189.5h-1V188h-1V188h-1V188.5h-1V189.5h-1V189.5h-1V189h-1V189h-1V188.5h-1V188.5h-1V187.5h-1V187.5h-1V186.5h-1V188h-1V186.5h-1V186h-1V187h-1V187h-1V188h-1V191h-1V188.5h-1V190.5h-1V187h-1V188.5h-1V187h-1V188h-1V189.5h-1V188h-1V188.5h-1V189h-1V188.5h-1V189.5h-1V189.5h-1V187.5h-1V189h-1V190h-1V187h-1V190h-1V187h-1V189h-1V188.5h-1V187.5h-1V187.5h-1V188h-1V186.5h-1V187.5h-1V189h-1V187.5h-1V187h-1V186.5h-1V187.5h-1V188h-1V189.5h-1V187.5h-1V189h-1V190.5h-1V189h-1V189h-1V187h-1V187.5h-1V188.5h-1V187.5h-1V189h-1V187.5h-1V189h-1V187.5h-1V188.5h-1V187.5h-1V187.5h-1V189h-1V187.5h-1V188h-1V188.5h-1V187h-1V186h-1V187h-1V187h-1V186h-1V189.5h-1V187.5h-1V188h-1V186.5h-1V188h-1V190.5h-1V188.5h-1V189h-1V189h-1V187h-1V187h-1V190.5h-1V188.5h-1V187h-1V187.5h-1V188.5h-1V188.5h-1V188h-1V188.5h-1V189h-1V189h-1V187h-1V188.5h-1V188.5h-1V187h-1V187h-1V187h-1V187.5h-1V188h-1V187h-1V188.5h-1V188.5h-1V188h-1V187h-1V188.5h-1V187.5h-1V191h-1V189h-1V185h-1V185.5h-1V185h-1V186h-1V185.5h-1V185.5h-1V185.5h-1V186h-1V186.5h-1V185h-1V185.5h-1V185h-1V185h-1V186h-1V185.5h-1V185h-1V185.5h-1V185.5h-1V185h-1V185h-1V185h-1V185h-1V185h-1V185.5h-1V186h-1V185.5h-1V186h-1V185h-1V185h-1V186h-1V185h-1V185h-1V186h-1V185h-1V185.5h-1V186h-1V185.5h-1V185h-1V185.5h-1V185h-1V185h-1V187.5h-1V185.5h-1V185h-1V185.5h-1V185h-1V186h-1V185.5h-1Z"/><path d="M279 203V203h1V205h1V204.5h1V204h1V204.5h1V205h1V205h1V204.5h1V205h1V205h1V204h1V204.5h1V205h1V205h1V203.5h1V204.5h1V202h1V204h1V203h1V204.5h1V204.5h1V204h1V205h1V202.5h1V205h1V204.5h1V204h1V204.5h1V204.5h1V205h1V205h1V205h1V204h1V204h1V203h1V203.5h1V204.5h1V205h1V204h1V203.5h1V204h1V204h1V202.5h1V205h1V204h1V204h1V204h1V204.5h1V202h1V201.5h1V202h1V202.5h1V202.5h1V203h1V202h1V203h1V202.5h1V201h1V202.5h1V202.5h1V201.5h1V200.5h1V201.5h1V202.5h1V203h1V201.5h1V200.5h1V202.5h1V200.5h1V203h1V202.5h1V202.5h1V199.5h1V201.5h1V201.5h1V202.5h1V202h1V199.5h1V202h1V202.5h1V202.5h1V202h1V201h1V203.5h1V203h1V203h1V203.5h1V203h1V203.5h1V202.5h1V202.5h1V202.5h1V201.5h1V202h1V199.5h1V201h1V202h1V201.5h1V201.5h1V201.5h1V201.5h1V202.5h1V201.5h1V201.5h1V201h1V202.5h1V202h1V202.5h1V201.5h1V199h1V201.5h1V203h1V201.5h1V203.5h1V203h1V203.5h1V204h1V203.5h1V202.5h1V201.5h1V202.5h1V202h1V202.5h1V201h1V201.5h1V198.5h1V202.5h1V201.5h1V200.5h1V200.5h1V202h1V201h1V202.5h1V201.5h1V202h1V202h1V202.5h1V201.5h1V200.5h1V200h1V202.5h1V200h1V202h1V201.5h1V202h1V202h1V203.5h1V203h1V204h1V204h1V203.5h1V203.5h1V202h1V201.5h1V201.5h1V202h1V201.5h1V201h1V202.5h1V200.5h1V201h1V202.5h1V202.5h1V202h1V201h1V202h1V202.5h1V200h1V200.5h1V201h1V200.5h1V201h1V202h1V200.5h1V200.5h1V200h1V200.5h1V200.5h1V202h1V202.5h1V201h1V202h1V203h1V203h1V203h1V203h1V203.5h1V203h1V203h1V203.5h1V202.5h1V201h1V201h1V200.5h1V200.5h1V201.5h1V202h1V201h1V200.5h1V202h1V201h1V202.5h1V202.5h1V201.5h1V200.5h1V200h1V201h1V201.5h1V202.5h1V201h1V200h1V200.5h1V202.5h1V202h1V199h1V202h1V201h1V200h1V201h1V202h1V200.5h1V200.5h1V199.5h1V201.5h1V202.5h1V201.5h1V202h1V200h1V201h1V200h1V200h1V201h1V201h1V200.5h1V201.5h1V202h1V202h1V201.5h1V202h1V200h1V202h1V201h1V202h1V200.5h1V198.5h1V200.5h1V202h1V201h1V202h1V202h1V201h1V202.5h1V201h1V202.5h1V202.5h1V202h1V202.5h1V202h1V203.5h1V201.5h1V201h1V202.5h1V202.5h1V202.5h1V202h1V202.5h1V201.5h1V198.5h1V200h1V201.5h1V200.5h1V200.5h1V200.5h1V200.5h1V202.5h1V200h1V200h1V202h1V200.5h1V202h1V200h1V200h1V202.5h1V198.5h1V200.5h1V200.5h1V200h1V200.5h1V200.5h1V200.5h1V201h1V200.5h1V200.5h1V200h1V201.5h1V201.5h1V202h1V200.5h1V201.5h1V201h1V199.5h1V200h1V200.5h1V202h1V201h1V201.5h1V201.5h1V201h1V200.5h1V200.5h1V200.5h1V200.5h1V200h1V198.5h1V201.5h1V200.5h1V201h1V200h1V201h1V200h1V202h1V201.5h1V200h1V201.5h1V200.5h1V202.5h1V201.5h1V201h1V201h1V201.5h1V202h1V202h1V202h1V203h1V203h1V202h1V198.5h1V201h1V202.5h1V200h1V202.5h1V200h1V202h1V201h1V199h1V199.5h1V201.5h1V201h1V202h1V201.5h1V200h1V202h1V200h1V200h1V200h1V201h1V200.5h1V201.5h1V202h1V200h1V199.5h1V201h1V202h1V202h1V201.5h1V201.5h1V200.5h1V202h1V201.5h1V201.5h1V199h1V200h1V201.5h1V200h1V200h1V198.5h1V199h1V201h1V201h1V202h1V200h1V200.5h1V201.5h1V200.5h1V198.5h1V201h1V200h1V201.5h1V202h1V203h1V201.5h1V201.5h1V203h1V203h1V203h1V203h1V201.5h1V201.5h1V201h1V201.5h1V200.5h1V201.5h1V200.5h1V202h1V200h1V201h1V198h1V201h1V200h1V201h1V200h1V200h1V200.5h1V201.5h1V201h1V201h1V201h1V201.5h1V200.5h1V200h1V202h1V202h1V201.5h1V202.5h1V201.5h1V201h1V200.5h1V201.5h1V200.5h1V198h1V200h1V201.5h1V199.5h1V199.5h1V201h1V201.5h1V201.5h1V201h1V201.5h1V201h1V199.5h1V198.5h1V199.5h1V201.5h1V199.5h1V201.5h1V201.5h1V199h1V200.5h1V198.5h1V199.5h1V200h1V199.5h1V201.5h1V199.5h1V200.5h1V200h1V199.5h1V201h1V200.5h1V200.5h1V199h1V198.5h1V200.5h1V201h1V200.5h1V199h1V201h1V200h1V201h1V199.5h1V200.5h1V199.5h1V201.5h1V199.5h1V199h1V199h1V200h1V200.5h1V200h1V201.5h1V201h1V201.5h1V200.5h1V200h1V199h1V199.5h1V200.5h1V201h1V201h1V201h1V200h1V198h1V199.5h1V198.5h1V200h1V201.5h1V201.5h1V202h1V201h1V202h1V199.5h1V199.5h1V199.5h1V201.5h1V199.5h1V200.5h1V201.5h1V199.5h1V200h1V201h1V200h1V199h1V200.5h1V199.5h1V201.5h1V202h1V200h1V201.5h1V201h1V201.5h1V202h1V201h1V200h1V199h1V199h1V201.5h1V201.5h1V201.5h1V200.5h1V201h1V198.5h1V201h1V200h1V199.5h1V200h1V201h1V200h1V201h1V200.5h1V200h1V200.5h1V200.5h1V200h1V199h1V201.5h1V202h1V200h1V200h1V201.5h1V198.5h1V200h1V200h1V200.5h1V200.5h1V201h1V200.5h1V199.5h1V201.5h1V201.5h1V200h1V200h1V201h1V201.5h1V200.5h1V200h1V202h1V197.5h1V199.5h1V200.5h1V200h1V200h1V200.5h1V202h1V200.5h1V200.5h1V199.5h1V199.5h1V198.5h1V200h1V199.5h1V200.5h1V201h1V201h1V202h1V201h1V199.5h1V200.5h1V202h1V201h1V200h1V201h1V201.5h1V199.5h1V201.5h1V200.5h1V198h1V199h1V200h1V201.5h1V200.5h1V201h1V200.5h1V200h1V200h1V200.5h1V201.5h1V200h1V199.5h1V197.5h1V201.5h1V204.5h1V203h1V204.5h1V204h1V201.5h1V200h1V200.5h1V199.5h1V201.5h1V200.5h1V200h1V201.5h1V202h1V200.5h1V202h1V201h1V200.5h1V200h1V200.5h1V202h1V200h1V200.5h1V201h1V200h1V200.5h1V202h1V202h1V201.5h1V200h1V201.5h1V199h1V202h1V197.5h1V201h1V202.5h1V201h1V199.5h1V200h1V200h1V201.5h1V201h1V201h1V199.5h1V202h1V201.5h1V201.5h1V200h1V200h1V202h1V200h1V200.5h1V201h1V201h1V201h1V201h1V201.5h1V201.5h1V198.5h1V201h1V200h1V202h1V201h1V201h1V200h1V202h1V200.5h1V199.5h1V202h1V202h1V202.5h1V198h1V202h1V198.5h1V202h1V201.5h1V201h1V202h1V200.5h1V198.5h1V200h1V201.5h1V200.5h1V201.5h1V202.5h1V200.5h1V200h1V200.5h1V202h1V201h1V202h1V199.5h1V202h1V200h1V200.5h1V201h1V203h1V205.5h1V207h1V207h1V207h1V207.5h1V207.5h1V207h1V208h1V208h1V208h1V208.5h1V208.5h-1V208.5h-1V210.5h-1V210h-1V209h-1V209.5h-1V209.5h-1V209.5h-1V210h-1V210h-1V212h-1V214h-1V216.5h-1V215.5h-1V217h-1V216h-1V214.5h-1V214.5h-1V214.5h-1V217h-1V216.5h-1V215.5h-1V216h-1V214.5h-1V216.5h-1V217h-1V216h-1V214.5h-1V214.5h-1V216.5h-1V216h-1V215h-1V215h-1V217h-1V216.5h-1V215.5h-1V215h-1V215h-1V217h-1V218.5h-1V217h-1V215.5h-1V217h-1V214.5h-1V214.5h-1V217h-1V215h-1V217.5h-1V215h-1V215.5h-1V215.5h-1V217h-1V215.5h-1V216h-1V216.5h-1V216.5h-1V215h-1V216h-1V216h-1V215.5h-1V215.5h-1V215h-1V216h-1V217.5h-1V215h-1V216.5h-1V217h-1V217h-1V216h-1V217h-1V217h-1V217h-1V217h-1V215.5h-1V215.5h-1V216h-1V218h-1V214.5h-1V216.5h-1V215h-1V216.5h-1V216h-1V217h-1V217h-1V215h-1V216.5h-1V217.5h-1V217h-1V216h-1V215h-1V219.5h-1V217h-1V217h-1V215h-1V217h-1V217.5h-1V215h-1V216h-1V215.5h-1V217h-1V215.5h-1V217h-1V214h-1V215h-1V214h-1V215h-1V213.5h-1V214.5h-1V217.5h-1V217.5h-1V218h-1V217.5h-1V218.5h-1V216.5h-1V215.5h-1V215h-1V215.5h-1V215h-1V217.5h-1V215.5h-1V217.5h-1V217.5h-1V216h-1V217.5h-1V216h-1V216h-1V218h-1V217.5h-1V217.5h-1V215.5h-1V216h-1V215h-1V217h-1V216h-1V215.5h-1V217.5h-1V216.5h-1V215.5h-1V216h-1V217.5h-1V215.5h-1V215h-1V215h-1V216h-1V215h-1V216h-1V216h-1V217h-1V216h-1V217h-1V215.5h-1V215.5h-1V217.5h-1V217.5h-1V215.5h-1V215.5h-1V217h-1V218.5h-1V217.5h-1V216.5h-1V218.5h-1V217.5h-1V216h-1V217h-1V216h-1V218h-1V215h-1V217h-1V217.5h-1V216.5h-1V218.5h-1V216h-1V217h-1V217.5h-1V215h-1V217h-1V216h-1V215h-1V217.5h-1V217h-1V215.5h-1V215.5h-1V218h-1V216.5h-1V217.5h-1V219h-1V216.5h-1V217h-1V216.5h-1V217.5h-1V215.5h-1V217.5h-1V216h-1V215.5h-1V215h-1V216.5h-1V217h-1V215h-1V216.5h-1V216.5h-1V215.5h-1V216.5h-1V217h-1V215.5h-1V215.5h-1V216.5h-1V216h-1V215.5h-1V216.5h-1V216.5h-1V216h-1V216.5h-1V217h-1V215.5h-1V216.5h-1V217.5h-1V217.5h-1V215.5h-1V218h-1V217.5h-1V216.5h-1V217.5h-1V219.5h-1V215.5h-1V215.5h-1V217h-1V216h-1V217h-1V218.5h-1V216.5h-1V217.5h-1V216.5h-1V216h-1V215.5h-1V217h-1V218h-1V215.5h-1V218h-1V217h-1V215.5h-1V217h-1V216h-1V216h-1V216h-1V216h-1V217.5h-1V219h-1V217h-1V216h-1V217h-1V217.5h-1V217.5h-1V218h-1V220h-1V217h-1V215.5h-1V217h-1V216.5h-1V217.5h-1V216h-1V217.5h-1V215h-1V217h-1V218h-1V215.5h-1V218h-1V219h-1V218h-1V217h-1V217h-1V218h-1V216.5h-1V216.5h-1V217.5h-1V219.5h-1V217h-1V215h-1V217.5h-1V218h-1V216h-1V218h-1V215.5h-1V217h-1V215.5h-1V218h-1V218h-1V216h-1V217h-1V215h-1V217h-1V216.5h-1V215h-1V216h-1V216.5h-1V216.5h-1V215.5h-1V217h-1V215h-1V216.5h-1V216h-1V216h-1V217h-1V215.5h-1V216.5h-1V217h-1V216h-1V216.5h-1V215h-1V217h-1V216.5h-1V217h-1V217h-1V215h-1V216.5h-1V216.5h-1V215.5h-1V216.5h-1V215h-1V215h-1V214h-1V214.5h-1V215h-1V214h-1V214h-1V214.5h-1V214h-1V214h-1V215.5h-1V216h-1V216h-1V215.5h-1V215h-1V216.5h-1V215.5h-1V214.5h-1V215.5h-1V217.5h-1V216.5h-1V216h-1V217.5h-1V215.5h-1V215h-1V216.5h-1V217.5h-1V216.5h-1V216h-1V216.5h-1V217h-1V215h-1V216h-1V216.5h-1V217h-1V216.5h-1V216.5h-1V216.5h-1V215h-1V215.5h-1V216.5h-1V215.5h-1V216h-1V217.5h-1V216h-1V215h-1V216h-1V215.5h-1V216.5h-1V217h-1V216.5h-1V216.5h-1V216.5h-1V217h-1V218h-1V216h-1V215.5h-1V216.5h-1V217.5h-1V217h-1V219.5h-1V216.5h-1V216h-1V216.5h-1V214.5h-1V215h-1V215h-1V213.5h-1V215.5h-1V215.5h-1V215h-1V214.5h-1V215.5h-1V216h-1V214.5h-1V214.5h-1V216h-1V215.5h-1V216.5h-1V215.5h-1V216.5h-1V217.5h-1V215.5h-1V217h-1V215.5h-1V217h-1V216h-1V219.5h-1V217h-1V215.5h-1V216.5h-1V216h-1V215h-1V215.5h-1V217.5h-1V216.5h-1V217h-1V215h-1V217.5h-1V216.5h-1V216h-1V216h-1V217h-1V217h-1V216.5h-1V215.5h-1V216h-1V215.5h-1V215h-1V216.5h-1V217h-1V216h-1V217h-1V216h-1V217h-1V215h-1V216h-1V218.5h-1V216h-1V216.5h-1V215h-1V215.5h-1V216.5h-1V215h-1V216h-1V215.5h-1V216h-1V216h-1V217h-1V217.5h-1V216h-1V215.5h-1V217h-1V217h-1V218h-1V216.5h-1V215.5h-1V214.5h-1V214.5h-1V215.5h-1V214h-1V216.5h-1V214.5h-1V214h-1V215.5h-1V214h-1V214h-1V215h-1V215.5h-1V214h-1V216.5h-1V215.5h-1V216h-1V215.5h-1V217h-1V216.5h-1V219h-1V216h-1V217h-1V218h-1V216.5h-1V215h-1V216.5h-1V215.5h-1V216h-1V215h-1V216.5h-1V216.5h-1V216.5h-1V215h-1V216h-1V216h-1V216h-1V218h-1V215.5h-1V216.5h-1V215h-1V215.5h-1V216h-1V216.5h-1V216.5h-1V215.5h-1V218.5h-1V217h-1V216.5h-1V215h-1V217h-1V214.5h-1V216h-1V216h-1V216h-1V216h-1V216h-1V216h-1V216.5h-1V215.5h-1V215.5h-1V217h-1V216.5h-1V216.5h-1V216h-1V216h-1V214.5h-1V216h-1V215h-1V216.5h-1V216.5h-1V214.5h-1V214.5h-1V215.5h-1V215h-1V214h-1V215h-1V214h-1V213h-1V213h-1V214.5h-1V214.5h-1V214h-1V216h-1V214h-1V215h-1V217.5h-1V214.5h-1V216.5h-1V215h-1V216h-1V215h-1V216.5h-1V215.5h-1V215.5h-1V216h-1V214.5h-1V215h-1V214.5h-1V216.5h-1V216.5h-1V215h-1V216.5h-1V214.5h-1V216.5h-1V214.5h-1V215.5h-1V218h-1V214h-1V217h-1V215h-1V215.5h-1V215h-1V214h-1V213.5h-1V213h-1V213.5h-1V213.5h-1V214.5h-1V214.5h-1V214h-1V214h-1V215.5h-1V215h-1V216h-1V215.5h-1V216h-1V215h-1V215.5h-1V216h-1V216.5h-1V218h-1V216.5h-1V215.5h-1V214.5h-1V215h-1V214.5h-1V215.5h-1V216h-1V215.5h-1V216.5h-1V216.5h-1V214.5h-1V215h-1V215h-1V214.5h-1V214h-1V214h-1V213.5h-1V213h-1V213.5h-1V214h-1V214h-1V215.5h-1V215h-1V215.5h-1V216h-1V214.5h-1V215.5h-1V216.5h-1V215h-1V215.5h-1V216.5h-1V216h-1V215.5h-1V215.5h-1V215h-1V215h-1V216h-1V215h-1V214h-1V214.5h-1V214h-1V215h-1V214h-1V213h-1V216h-1V214h-1V213.5h-1V214.5h-1V214h-1V215h-1V214.5h-1V214.5h-1V215.5h-1V216h-1V214h-1V214.5h-1V215.5h-1V216h-1V215h-1V214h-1V214.5h-1V215.5h-1V214.5h-1V215.5h-1V214h-1V216.5h-1V215h-1V214.5h-1V214h-1V215h-1V214.5h-1V214.5h-1V214.5h-1V214h-1V217.5h-1V214h-1V215h-1V215.5h-1V215.5h-1V214.5h-1V215.5h-1V215.5h-1V214h-1V215.5h-1V215.5h-1V212.5h-1V213h-1V213h-1V212h-1V212h-1V214.5h-1V213.5h-1V215h-1V214.5h-1V213h-1V214.5h-1V213h-1V212.5h-1V213h-1V213.5h-1V212h-1V212.5h-1V213h-1V213h-1V212h-1V212h-1V214h-1V215.5h-1V212.5h-1V212h-1V213h-1V212h-1V213h-1V212.5h-1V212.5h-1V213.5h-1V213h-1V213h-1V212h-1V212.5h-1V212h-1V212.5h-1V212h-1V212.5h-1V212h-1V212h-1V212.5h-1V212.5h-1V212.5h-1V212.5h-1V212h-1V213.5h-1V213h-1Z"/></g></defs>
<g clip-path="url(#csw100)"><use href="#pkw100" fill="#313a50"/><use href="#rmw100" fill="#6f97e4"/></g>
<g clip-path="url(#cuw100)"><rect x="493.6" y="168" width="503.4" height="56" fill="#363636"/><use href="#pkw100" fill="#2e2e2e"/><use href="#rmw100" fill="#3d4a66"/></g>
<rect x="279" y="195" width="718" height="1" fill="#2c2c2c"/>
<rect x="279" y="224" width="718" height="34" fill="#363636"/>
<rect x="279" y="224" width="42" height="34" fill="#3b3b3b"/>
<rect x="279" y="224" width="718" height="1" fill="#262626"/>
<rect x="321" y="236" width="676" height="7" fill="#c9c8a4"/>
<path d="M321 236 h8 l-8 7 z" fill="#f0d800"/>
<rect x="285.5" y="245" width="7" height="6" fill="#eee"/><path d="M287 245.5 v-2 a2 2 0 0 1 4 0 v2" stroke="#eee" stroke-width="1.2" fill="none"/>
<rect x="302" y="242.5" width="4" height="6" fill="#2a7ab8" stroke="#8fd0f0" stroke-width="0.6"/><rect x="310" y="242.5" width="4" height="6" fill="#2a7ab8" stroke="#8fd0f0" stroke-width="0.6"/><path d="M308 240 v11 M306 240 h4 M306 251 h4" stroke="#e8e8e8" stroke-width="1"/>
<defs><clipPath id="crw100"><rect x="321" y="240" width="676" height="18"/></clipPath></defs><g clip-path="url(#crw100)">
<rect x="321.0" y="251" width="1.3" height="6.5" fill="#d8d8d8"/>
<text x="322.50" y="252.8" font-size="7.5" fill="#c8c8c8" textLength="30.79" lengthAdjust="spacingAndGlyphs">00:00:00</text>
<rect x="413.8" y="251" width="1.3" height="6.5" fill="#d8d8d8"/>
<text x="415.25" y="252.8" font-size="7.5" fill="#c8c8c8" textLength="30.79" lengthAdjust="spacingAndGlyphs">00:00:10</text>
<rect x="506.5" y="251" width="1.3" height="6.5" fill="#d8d8d8"/>
<text x="508.00" y="252.8" font-size="7.5" fill="#c8c8c8" textLength="30.79" lengthAdjust="spacingAndGlyphs">00:00:20</text>
<rect x="599.2" y="251" width="1.3" height="6.5" fill="#d8d8d8"/>
<text x="600.75" y="252.8" font-size="7.5" fill="#c8c8c8" textLength="30.79" lengthAdjust="spacingAndGlyphs">00:00:30</text>
<rect x="692.0" y="251" width="1.3" height="6.5" fill="#d8d8d8"/>
<text x="693.50" y="252.8" font-size="7.5" fill="#c8c8c8" textLength="30.79" lengthAdjust="spacingAndGlyphs">00:00:40</text>
<rect x="784.8" y="251" width="1.3" height="6.5" fill="#d8d8d8"/>
<text x="786.25" y="252.8" font-size="7.5" fill="#c8c8c8" textLength="30.79" lengthAdjust="spacingAndGlyphs">00:00:50</text>
<rect x="877.5" y="251" width="1.3" height="6.5" fill="#d8d8d8"/>
<text x="879.00" y="252.8" font-size="7.5" fill="#c8c8c8" textLength="30.79" lengthAdjust="spacingAndGlyphs">00:01:00</text>
<rect x="970.2" y="251" width="1.3" height="6.5" fill="#d8d8d8"/>
<text x="971.75" y="252.8" font-size="7.5" fill="#c8c8c8" textLength="30.79" lengthAdjust="spacingAndGlyphs">00:01:10</text>
<g fill="#cfcfcf">
<rect x="330.3" y="254" width="1.3" height="2.8"/>
<rect x="339.6" y="254" width="1.3" height="2.8"/>
<rect x="348.8" y="254" width="1.3" height="2.8"/>
<rect x="358.1" y="254" width="1.3" height="2.8"/>
<rect x="367.4" y="254" width="1.3" height="2.8"/>
<rect x="376.6" y="254" width="1.3" height="2.8"/>
<rect x="385.9" y="254" width="1.3" height="2.8"/>
<rect x="395.2" y="254" width="1.3" height="2.8"/>
<rect x="404.5" y="254" width="1.3" height="2.8"/>
<rect x="423.0" y="254" width="1.3" height="2.8"/>
<rect x="432.3" y="254" width="1.3" height="2.8"/>
<rect x="441.6" y="254" width="1.3" height="2.8"/>
<rect x="450.9" y="254" width="1.3" height="2.8"/>
<rect x="460.1" y="254" width="1.3" height="2.8"/>
<rect x="469.4" y="254" width="1.3" height="2.8"/>
<rect x="478.7" y="254" width="1.3" height="2.8"/>
<rect x="488.0" y="254" width="1.3" height="2.8"/>
<rect x="497.2" y="254" width="1.3" height="2.8"/>
<rect x="515.8" y="254" width="1.3" height="2.8"/>
<rect x="525.0" y="254" width="1.3" height="2.8"/>
<rect x="534.3" y="254" width="1.3" height="2.8"/>
<rect x="543.6" y="254" width="1.3" height="2.8"/>
<rect x="552.9" y="254" width="1.3" height="2.8"/>
<rect x="562.1" y="254" width="1.3" height="2.8"/>
<rect x="571.4" y="254" width="1.3" height="2.8"/>
<rect x="580.7" y="254" width="1.3" height="2.8"/>
<rect x="590.0" y="254" width="1.3" height="2.8"/>
<rect x="608.5" y="254" width="1.3" height="2.8"/>
<rect x="617.8" y="254" width="1.3" height="2.8"/>
<rect x="627.1" y="254" width="1.3" height="2.8"/>
<rect x="636.4" y="254" width="1.3" height="2.8"/>
<rect x="645.6" y="254" width="1.3" height="2.8"/>
<rect x="654.9" y="254" width="1.3" height="2.8"/>
<rect x="664.2" y="254" width="1.3" height="2.8"/>
<rect x="673.5" y="254" width="1.3" height="2.8"/>
<rect x="682.7" y="254" width="1.3" height="2.8"/>
<rect x="701.3" y="254" width="1.3" height="2.8"/>
<rect x="710.5" y="254" width="1.3" height="2.8"/>
<rect x="719.8" y="254" width="1.3" height="2.8"/>
<rect x="729.1" y="254" width="1.3" height="2.8"/>
<rect x="738.4" y="254" width="1.3" height="2.8"/>
<rect x="747.7" y="254" width="1.3" height="2.8"/>
<rect x="756.9" y="254" width="1.3" height="2.8"/>
<rect x="766.2" y="254" width="1.3" height="2.8"/>
<rect x="775.5" y="254" width="1.3" height="2.8"/>
<rect x="794.0" y="254" width="1.3" height="2.8"/>
<rect x="803.3" y="254" width="1.3" height="2.8"/>
<rect x="812.6" y="254" width="1.3" height="2.8"/>
<rect x="821.9" y="254" width="1.3" height="2.8"/>
<rect x="831.1" y="254" width="1.3" height="2.8"/>
<rect x="840.4" y="254" width="1.3" height="2.8"/>
<rect x="849.7" y="254" width="1.3" height="2.8"/>
<rect x="859.0" y="254" width="1.3" height="2.8"/>
<rect x="868.2" y="254" width="1.3" height="2.8"/>
<rect x="886.8" y="254" width="1.3" height="2.8"/>
<rect x="896.1" y="254" width="1.3" height="2.8"/>
<rect x="905.3" y="254" width="1.3" height="2.8"/>
<rect x="914.6" y="254" width="1.3" height="2.8"/>
<rect x="923.9" y="254" width="1.3" height="2.8"/>
<rect x="933.1" y="254" width="1.3" height="2.8"/>
<rect x="942.4" y="254" width="1.3" height="2.8"/>
<rect x="951.7" y="254" width="1.3" height="2.8"/>
<rect x="961.0" y="254" width="1.3" height="2.8"/>
<rect x="979.5" y="254" width="1.3" height="2.8"/>
<rect x="988.8" y="254" width="1.3" height="2.8"/>
</g></g>
<rect x="279" y="257" width="718" height="1" fill="#262626"/>
<rect x="279" y="258" width="718" height="46" fill="#444444"/>
<rect x="279.5" y="258.5" width="17" height="14" rx="2" fill="#5b6a99"/>
<rect x="298" y="258.5" width="12.5" height="12" rx="2" fill="#5b6a99"/><rect x="301" y="261.5" width="7" height="2" fill="#e8e8e8"/>
<rect x="321" y="270" width="676" height="1" fill="#363636"/>
<rect x="321" y="292" width="676" height="1" fill="#363636"/>
<path d="M321 273.5V273.5h1V273.5h1V272.5h1V273.5h1V272h1V273.5h1V271.5h1V273.5h1V273h1V273.5h1V273.5h1V273h1V272.5h1V273h1V273.5h1V273.5h1V273.5h1V273.5h1V273.5h1V273.5h1V274h1V274h1V272.5h1V273h1V273.5h1V271.5h1V273.5h1V274h1V273.5h1V272h1V273.5h1V273h1V271.5h1V272h1V273.5h1V273.5h1V273.5h1V273.5h1V274h1V273.5h1V273h1V273h1V274h1V273h1V273.5h1V273.5h1V273.5h1V273h1V273.5h1V274h1V274h1V273h1V274h1V274h1V274h1V273.5h1V274h1V273.5h1V274h1V272.5h1V274h1V273.5h1V274h1V273.5h1V273.5h1V273h1V273h1V274h1V273.5h1V273h1V273.5h1V273.5h1V272h1V273h1V273.5h1V274h1V273.5h1V273.5h1V273.5h1V273h1V273.5h1V274h1V273.5h1V274h1V273.5h1V272.5h1V273.5h1V273.5h1V273h1V272h1V273.5h1V274h1V272h1V271.5h1V274h1V273h1V274h1V274h1V273.5h1V273.5h1V273.5h1V274h1V274h1V273.5h1V273.5h1V273h1V273.5h1V273h1V272.5h1V272h1V274h1V273.5h1V273.5h1V273.5h1V274h1V274.5h1V273.5h1V274.5h1V273h1V273.5h1V273.5h1V274.5h1V273h1V274h1V273.5h1V274.5h1V274h1V274h1V274.5h1V274h1V274.5h1V275h1V275h1V274.5h1V274.5h1V275h1V275h1V275h1V275.5h1V274.5h1V275.5h1V274h1V275h1V275h1V275.5h1V275.5h1V275.5h1V274.5h1V276h1V275h1V275.5h1V276h1V275.5h1V275.5h1V276.5h1V275.5h1V276h1V275h1V276h1V270h1V271h1V270h1V270.5h1V270h1V270.5h1V270h1V270h1V269.5h1V270h1V270.5h1V270h1V268h1V269.5h1V269.5h1V269.5h1V269h1V271h1V270h1V269.5h1V270.5h1V270h1V270.5h1V271h1V270.5h1V271h1V270.5h1V270h1V271h1V270h1V271h1V271h1V270.5h1V270.5h1V268.5h1V269h1V270.5h1V270h1V271h1V270h1V270.5h1V269.5h1V269.5h1V270h1V270h1V269.5h1V270.5h1V270.5h1V268.5h1V269h1V268.5h1V271h1V270h1V270h1V270.5h1V268h1V269h1V268h1V270h1V271h1V270h1V271h1V271h1V270.5h1V270.5h1V269h1V269h1V270.5h1V270h1V271h1V269h1V270h1V270h1V270.5h1V270h1V270.5h1V271h1V270h1V269h1V270h1V270h1V271h1V271h1V270h1V270.5h1V271h1V270h1V270h1V270.5h1V271h1V270h1V270h1V271h1V271h1V270h1V270.5h1V270h1V270.5h1V269.5h1V269.5h1V270.5h1V270h1V269.5h1V270h1V269h1V269.5h1V270h1V269h1V270.5h1V270h1V271h1V270h1V270h1V270h1V270.5h1V269.5h1V270h1V270h1V271h1V270h1V270h1V271h1V270h1V270.5h1V268.5h1V270h1V270h1V270.5h1V270h1V270.5h1V270h1V269.5h1V270.5h1V269.5h1V270.5h1V270.5h1V269.5h1V271h1V270h1V268h1V268.5h1V269.5h1V270h1V270.5h1V270.5h1V270.5h1V269.5h1V270.5h1V269.5h1V268.5h1V269h1V269h1V270.5h1V269h1V268.5h1V269.5h1V270.5h1V270.5h1V269.5h1V268.5h1V270.5h1V270h1V270h1V269.5h1V270.5h1V270h1V269.5h1V270.5h1V270.5h1V271h1V270.5h1V270h1V270.5h1V270h1V270h1V270h1V270h1V270h1V269.5h1V269.5h1V270.5h1V270h1V270.5h1V271h1V270.5h1V270.5h1V269.5h1V270h1V270.5h1V270h1V269h1V270.5h1V270.5h1V269.5h1V270h1V270.5h1V271h1V271h1V270h1V269.5h1V270h1V270h1V270h1V269.5h1V270h1V269.5h1V270.5h1V270h1V269.5h1V269.5h1V270.5h1V270.5h1V270h1V270.5h1V270.5h1V270h1V270h1V270.5h1V270.5h1V269.5h1V270.5h1V268.5h1V269h1V269h1V269h1V269.5h1V269.5h1V270.5h1V269.5h1V270h1V268h1V270h1V270.5h1V270h1V269h1V270h1V270h1V269.5h1V270.5h1V268h1V270.5h1V268.5h1V270.5h1V270.5h1V269.5h1V271h1V270.5h1V270.5h1V269h1V270h1V270.5h1V270h1V269h1V270.5h1V269.5h1V269h1V270.5h1V269.5h1V271h1V269.5h1V270.5h1V268.5h1V270.5h1V270h1V270.5h1V270h1V270.5h1V268.5h1V270h1V271h1V270.5h1V270h1V268.5h1V269h1V270h1V270h1V270h1V269.5h1V270h1V270.5h1V270.5h1V270h1V271h1V271h1V270h1V270h1V270.5h1V270.5h1V270h1V269h1V270.5h1V269.5h1V270.5h1V269h1V270h1V270h1V270.5h1V269h1V270.5h1V270h1V270h1V270h1V268h1V271h1V270h1V269.5h1V270.5h1V270.5h1V269h1V270.5h1V269.5h1V271h1V270.5h1V269.5h1V269.5h1V269.5h1V270h1V269h1V270.5h1V268h1V270h1V270h1V270.5h1V270.5h1V270h1V271h1V271h1V270h1V270h1V270.5h1V268.5h1V269.5h1V270h1V269.5h1V271h1V269h1V270.5h1V270h1V270.5h1V268.5h1V270h1V270.5h1V270h1V270h1V270h1V268.5h1V270h1V269h1V269h1V269.5h1V269.5h1V270.5h1V270.5h1V270h1V271h1V270.5h1V270.5h1V271h1V271h1V270h1V268.5h1V270.5h1V270.5h1V270h1V269.5h1V270.5h1V271h1V270.5h1V269.5h1V270.5h1V270.5h1V270.5h1V270h1V270h1V269.5h1V271h1V270.5h1V271h1V270.5h1V270.5h1V271h1V270h1V271h1V270.5h1V269.5h1V268.5h1V270h1V271h1V270h1V270h1V269h1V269h1V270.5h1V271h1V270.5h1V270.5h1V270h1V270h1V271h1V270h1V271h1V270h1V269.5h1V269h1V271h1V268h1V269.5h1V270.5h1V271h1V269h1V270h1V270.5h1V270h1V270h1V269.5h1V270.5h1V270.5h1V269h1V272h1V273h1V273h1V273h1V273h1V274h1V273h1V273h1V273h1V273h1V271.5h1V271.5h1V273h1V273h1V273.5h1V273h1V273h1V273h1V271.5h1V273.5h1V272.5h1V273h1V272.5h1V271.5h1V271.5h1V269.5h1V269h1V268.5h1V268.5h1V267h1V268.5h1V269.5h1V269h1V268.5h1V269h1V268.5h1V269h1V269.5h1V269.5h1V269.5h1V268h1V268.5h1V267.5h1V268.5h1V268.5h1V268.5h1V268.5h1V269h1V269h1V268.5h1V269h1V268.5h1V269.5h1V268.5h1V267h1V269h1V268.5h1V268.5h1V269.5h1V269h1V268.5h1V269h1V268.5h1V270h1V268.5h1V270h1V268.5h1V268.5h1V269h1V269.5h1V267.5h1V267h1V269.5h1V269h1V268.5h1V269.5h1V269.5h1V268.5h1V268.5h1V267.5h1V268.5h1V270h1V268.5h1V269h1V268.5h1V269.5h1V268.5h1V268.5h1V269h1V268.5h1V268.5h1V269h1V268h1V269h1V267.5h1V269.5h1V269h1V267.5h1V268.5h1V294h-1V294.5h-1V296h-1V295h-1V293h-1V295.5h-1V294h-1V295h-1V293h-1V294h-1V294.5h-1V295.5h-1V296.5h-1V293.5h-1V293.5h-1V294.5h-1V295h-1V295h-1V293.5h-1V294h-1V294.5h-1V294.5h-1V296h-1V294h-1V295h-1V294.5h-1V293.5h-1V294.5h-1V295h-1V294h-1V293.5h-1V294h-1V293.5h-1V294h-1V294.5h-1V293.5h-1V294h-1V293.5h-1V294.5h-1V293.5h-1V293.5h-1V295h-1V295h-1V294.5h-1V294.5h-1V293.5h-1V294h-1V293.5h-1V293.5h-1V294.5h-1V293.5h-1V294h-1V293.5h-1V293h-1V294.5h-1V294.5h-1V294.5h-1V295.5h-1V293.5h-1V295.5h-1V295.5h-1V293.5h-1V293.5h-1V294.5h-1V294h-1V294.5h-1V295.5h-1V295.5h-1V293.5h-1V293.5h-1V294h-1V294.5h-1V294h-1V294.5h-1V292.5h-1V290h-1V290.5h-1V290h-1V289.5h-1V290h-1V290h-1V290.5h-1V292h-1V289.5h-1V289.5h-1V290.5h-1V291.5h-1V291h-1V289.5h-1V291h-1V289.5h-1V290.5h-1V290h-1V290h-1V289.5h-1V289.5h-1V290h-1V289.5h-1V290.5h-1V294h-1V292.5h-1V292h-1V292h-1V292h-1V292h-1V292.5h-1V293h-1V292.5h-1V292.5h-1V294h-1V292.5h-1V292h-1V293h-1V292.5h-1V293h-1V294h-1V293h-1V292.5h-1V294.5h-1V292h-1V293h-1V293h-1V292.5h-1V293h-1V292h-1V294h-1V294h-1V292.5h-1V292h-1V292.5h-1V292h-1V292h-1V292.5h-1V292h-1V292h-1V293h-1V292.5h-1V292h-1V293h-1V292.5h-1V292h-1V292h-1V294h-1V293h-1V292.5h-1V294h-1V292h-1V294.5h-1V293.5h-1V293h-1V292h-1V293h-1V292.5h-1V292h-1V292h-1V292.5h-1V293h-1V294h-1V294h-1V292.5h-1V292.5h-1V293h-1V292.5h-1V292h-1V293h-1V293h-1V292h-1V293h-1V292.5h-1V293h-1V294h-1V294.5h-1V293h-1V293h-1V292.5h-1V292.5h-1V293h-1V292.5h-1V293.5h-1V292h-1V293h-1V292.5h-1V292.5h-1V293.5h-1V292.5h-1V292.5h-1V293h-1V294.5h-1V293.5h-1V293h-1V292h-1V293.5h-1V293.5h-1V292.5h-1V293h-1V295h-1V292.5h-1V292h-1V292.5h-1V294h-1V292h-1V292.5h-1V293h-1V293h-1V292.5h-1V293.5h-1V292.5h-1V292.5h-1V292.5h-1V292.5h-1V293.5h-1V292h-1V292.5h-1V294.5h-1V293h-1V293h-1V292h-1V293h-1V293h-1V292.5h-1V293h-1V293h-1V293.5h-1V292.5h-1V293h-1V293h-1V292.5h-1V293h-1V292.5h-1V292.5h-1V292.5h-1V294h-1V293h-1V292h-1V292.5h-1V292.5h-1V292.5h-1V292h-1V293.5h-1V293h-1V294h-1V292.5h-1V292.5h-1V293h-1V292h-1V295h-1V292.5h-1V292h-1V293h-1V293h-1V293h-1V293h-1V292.5h-1V292.5h-1V293.5h-1V293h-1V292.5h-1V292.5h-1V293h-1V292h-1V293.5h-1V292.5h-1V293.5h-1V293.5h-1V293h-1V294h-1V292.5h-1V293h-1V292.5h-1V292.5h-1V292.5h-1V293h-1V293h-1V295h-1V292.5h-1V292h-1V292.5h-1V293.5h-1V293h-1V292.5h-1V292.5h-1V293h-1V293.5h-1V292h-1V293h-1V292h-1V292.5h-1V293.5h-1V293.5h-1V292.5h-1V292h-1V292.5h-1V293.5h-1V293h-1V292.5h-1V293.5h-1V294h-1V294.5h-1V293h-1V293.5h-1V293h-1V292h-1V292.5h-1V293h-1V292.5h-1V294.5h-1V294.5h-1V292.5h-1V292.5h-1V293.5h-1V292.5h-1V292.5h-1V294h-1V292.5h-1V292.5h-1V293.5h-1V293h-1V293.5h-1V293h-1V293h-1V293.5h-1V292.5h-1V293h-1V292.5h-1V292h-1V295h-1V292.5h-1V292h-1V293h-1V293h-1V293h-1V294h-1V293h-1V293h-1V293h-1V293.5h-1V292.5h-1V293h-1V292.5h-1V294.5h-1V293h-1V293.5h-1V292.5h-1V293.5h-1V292.5h-1V294.5h-1V293h-1V293h-1V292.5h-1V293.5h-1V292h-1V294h-1V292.5h-1V293h-1V293h-1V293.5h-1V292.5h-1V292.5h-1V293h-1V295h-1V293h-1V294.5h-1V292h-1V293h-1V292h-1V292h-1V293h-1V292.5h-1V294h-1V293h-1V294h-1V294.5h-1V292.5h-1V293.5h-1V292.5h-1V292.5h-1V293h-1V293h-1V293h-1V294h-1V294h-1V292.5h-1V293h-1V293h-1V293.5h-1V293.5h-1V293h-1V292h-1V292.5h-1V293h-1V292.5h-1V293h-1V292.5h-1V293.5h-1V293h-1V294.5h-1V292.5h-1V294h-1V292h-1V292.5h-1V292.5h-1V292h-1V292.5h-1V293h-1V292h-1V294h-1V292.5h-1V292.5h-1V292.5h-1V292.5h-1V293.5h-1V292.5h-1V294h-1V293h-1V292.5h-1V294h-1V292.5h-1V295h-1V293.5h-1V293.5h-1V293h-1V293h-1V292.5h-1V295h-1V294h-1V293h-1V293.5h-1V292h-1V294h-1V292.5h-1V293.5h-1V292h-1V292h-1V294.5h-1V293h-1V292h-1V292.5h-1V292h-1V292.5h-1V293h-1V292.5h-1V292h-1V293h-1V292.5h-1V293.5h-1V293h-1V292.5h-1V293h-1V293h-1V292h-1V293h-1V293.5h-1V293h-1V293h-1V292h-1V295h-1V292h-1V293h-1V293.5h-1V292.5h-1V292.5h-1V292.5h-1V294h-1V293h-1V292.5h-1V292h-1V293.5h-1V292h-1V292.5h-1V293h-1V292h-1V292h-1V292h-1V292h-1V293.5h-1V293.5h-1V293.5h-1V292h-1V292.5h-1V292h-1V292h-1V293.5h-1V293h-1V292h-1V292h-1V293h-1V293.5h-1V292.5h-1V292h-1V292.5h-1V292.5h-1V293h-1V292.5h-1V293.5h-1V294h-1V293h-1V292h-1V293h-1V292h-1V292.5h-1V292h-1V293h-1V294h-1V293h-1V295h-1V293.5h-1V292h-1V294h-1V292h-1V292h-1V292h-1V292.5h-1V292.5h-1V292.5h-1V292h-1V293h-1V293h-1V286.5h-1V287h-1V287h-1V288.5h-1V288h-1V287h-1V287h-1V287h-1V287.5h-1V287h-1V289h-1V287.5h-1V287.5h-1V288h-1V289h-1V287.5h-1V287.5h-1V289h-1V289.5h-1V288h-1V288h-1V287.5h-1V288.5h-1V288h-1V290h-1V288.5h-1V288.5h-1V288.5h-1V288.5h-1V289h-1V289h-1V289h-1V288.5h-1V289h-1V289h-1V289h-1V288.5h-1V289h-1V289.5h-1V289.5h-1V289.5h-1V289.5h-1V289.5h-1V289h-1V289.5h-1V289.5h-1V288.5h-1V289h-1V289.5h-1V291.5h-1V290h-1V290h-1V289.5h-1V289h-1V290.5h-1V289h-1V291h-1V290h-1V289h-1V289h-1V289.5h-1V289.5h-1V289.5h-1V289.5h-1V289.5h-1V289.5h-1V289h-1V289h-1V291h-1V289.5h-1V289.5h-1V290.5h-1V290h-1V289h-1V289.5h-1V290.5h-1V290h-1V291h-1V289.5h-1V289h-1V290h-1V289h-1V289h-1V289.5h-1V289h-1V289h-1V290.5h-1V289h-1V290.5h-1V289h-1V290.5h-1V290h-1V289.5h-1V290h-1V289h-1V289h-1V289h-1V289.5h-1V289.5h-1V289h-1V289.5h-1V289h-1V290.5h-1V290h-1V290.5h-1V290h-1V289.5h-1V289.5h-1V290h-1V289.5h-1V289.5h-1V290h-1V290h-1V291.5h-1V289.5h-1V289.5h-1V289.5h-1V289.5h-1V289.5h-1V290h-1V289h-1V289h-1V290.5h-1V289.5h-1V289h-1V290.5h-1V289.5h-1V289.5h-1V289.5h-1V290.5h-1V291h-1V289h-1V291h-1V291.5h-1V290h-1V291h-1V289h-1V290h-1V289.5h-1V289h-1V289h-1V289.5h-1V289.5h-1V291h-1V290h-1V291h-1V290.5h-1V289h-1V289.5h-1V290h-1V291.5h-1V290.5h-1V289.5h-1V290.5h-1V290h-1V290.5h-1V291h-1V289.5h-1V291h-1Z" fill="#34405e"/>
<path d="M321 276V276h1V273.5h1V274h1V275.5h1V270.5h1V272h1V275h1V271.5h1V272h1V271.5h1V273.5h1V275h1V274.5h1V269.5h1V275h1V274.5h1V275h1V273.5h1V273.5h1V276h1V273.5h1V274h1V274.5h1V274h1V274h1V275.5h1V275.5h1V274.5h1V276h1V274.5h1V273.5h1V275h1V275.5h1V274.5h1V273.5h1V273.5h1V271.5h1V274h1V272.5h1V274h1V274h1V274h1V275.5h1V275.5h1V271.5h1V274h1V276h1V272.5h1V276.5h1V273.5h1V275.5h1V275h1V272h1V276.5h1V275.5h1V276h1V274.5h1V274.5h1V273h1V273.5h1V276.5h1V275.5h1V275.5h1V276h1V270h1V275.5h1V274.5h1V275h1V276.5h1V275.5h1V274.5h1V276h1V274h1V275h1V275h1V275.5h1V276h1V272h1V273.5h1V276h1V276.5h1V275h1V273.5h1V273.5h1V273.5h1V274.5h1V271.5h1V275h1V272.5h1V273.5h1V275h1V274.5h1V275h1V274h1V272h1V274.5h1V274h1V274.5h1V274.5h1V275h1V271h1V276h1V274.5h1V274.5h1V275.5h1V271.5h1V274h1V273.5h1V274.5h1V274h1V276.5h1V274h1V275h1V275h1V274.5h1V275h1V274.5h1V275.5h1V276h1V274h1V273.5h1V275.5h1V275h1V274.5h1V275h1V270.5h1V276h1V274.5h1V275h1V272h1V276.5h1V276h1V276.5h1V276h1V271h1V275h1V275.5h1V277.5h1V273h1V276.5h1V275.5h1V277.5h1V276h1V276h1V276h1V277.5h1V278h1V278h1V275.5h1V276.5h1V274.5h1V276h1V274h1V277.5h1V276h1V278h1V275.5h1V276.5h1V278h1V270.5h1V268.5h1V273h1V273h1V268h1V272.5h1V272.5h1V274h1V270.5h1V274h1V265.5h1V274h1V274.5h1V267h1V271.5h1V271.5h1V270h1V274.5h1V267h1V273.5h1V274.5h1V272h1V271.5h1V270h1V271.5h1V270.5h1V272.5h1V273.5h1V272.5h1V274.5h1V270.5h1V273.5h1V268.5h1V273h1V270.5h1V270.5h1V271.5h1V271h1V273.5h1V274h1V270.5h1V272.5h1V272.5h1V272h1V272h1V272.5h1V274.5h1V267h1V272h1V270.5h1V271.5h1V267.5h1V271h1V271.5h1V271h1V272h1V270.5h1V270h1V271.5h1V270.5h1V270.5h1V272.5h1V273h1V272h1V270.5h1V271h1V272h1V271h1V270h1V273h1V272.5h1V270.5h1V274h1V270.5h1V271h1V270.5h1V273h1V274.5h1V272h1V272h1V271h1V270.5h1V270h1V273.5h1V272.5h1V273.5h1V271h1V271h1V271h1V270.5h1V270.5h1V273h1V273h1V270.5h1V271.5h1V274.5h1V271h1V270h1V273.5h1V274.5h1V272.5h1V270.5h1V273h1V271.5h1V271h1V267.5h1V273.5h1V271.5h1V274.5h1V271.5h1V274h1V274.5h1V274.5h1V271h1V271h1V271.5h1V272h1V274h1V272h1V273.5h1V273.5h1V272.5h1V274h1V273.5h1V265h1V270h1V266h1V266.5h1V271.5h1V271.5h1V272.5h1V274.5h1V272h1V273h1V270h1V270.5h1V271.5h1V272h1V271h1V271h1V273.5h1V272h1V273h1V270h1V273.5h1V268.5h1V273.5h1V273h1V272h1V272h1V274h1V272.5h1V272.5h1V274h1V273h1V271h1V271.5h1V270h1V270.5h1V270.5h1V270.5h1V272h1V271h1V270.5h1V273.5h1V270h1V270.5h1V272.5h1V274h1V271h1V270h1V272h1V270h1V273.5h1V272h1V273h1V270.5h1V270h1V272h1V268h1V272.5h1V274h1V273h1V274h1V273.5h1V274h1V273h1V272h1V274h1V267h1V271.5h1V270h1V271.5h1V270h1V273h1V274.5h1V271h1V272h1V274.5h1V272.5h1V270.5h1V270.5h1V272h1V274h1V272.5h1V273h1V265.5h1V270.5h1V270h1V271h1V270.5h1V273.5h1V270.5h1V274h1V271h1V274.5h1V272h1V270h1V269.5h1V272.5h1V269.5h1V271.5h1V273.5h1V273.5h1V267.5h1V273h1V269.5h1V272.5h1V274.5h1V271.5h1V270.5h1V271.5h1V270h1V271h1V270.5h1V270.5h1V273h1V270.5h1V271.5h1V270h1V272.5h1V271h1V272h1V270.5h1V272.5h1V271.5h1V274h1V271h1V271.5h1V270.5h1V267.5h1V274.5h1V272h1V274.5h1V270.5h1V273h1V274.5h1V270h1V271h1V273.5h1V271.5h1V272.5h1V271.5h1V271h1V268.5h1V273h1V270.5h1V274.5h1V271h1V273h1V271h1V274.5h1V272.5h1V274h1V274.5h1V274h1V270.5h1V274.5h1V269.5h1V272h1V271.5h1V271.5h1V273h1V273.5h1V270.5h1V271h1V273.5h1V272.5h1V274h1V273h1V271h1V269h1V270.5h1V273h1V273.5h1V274h1V268.5h1V271.5h1V274.5h1V273.5h1V270h1V272h1V273.5h1V271h1V271h1V270.5h1V270.5h1V271h1V271h1V270h1V270h1V272h1V270.5h1V272.5h1V274h1V270.5h1V272h1V271.5h1V273h1V271.5h1V270h1V270h1V271h1V273.5h1V271.5h1V274h1V268h1V274.5h1V273h1V271.5h1V274h1V271h1V274h1V273h1V270h1V272.5h1V274h1V273.5h1V268.5h1V274.5h1V270h1V272.5h1V270.5h1V270h1V270.5h1V274h1V271h1V273.5h1V274h1V270.5h1V273.5h1V270h1V270h1V273h1V270.5h1V270h1V272h1V273.5h1V270.5h1V273h1V273.5h1V274.5h1V271h1V266h1V274.5h1V274.5h1V270.5h1V274h1V271h1V270.5h1V273h1V273h1V271h1V271h1V272.5h1V271h1V270h1V272.5h1V271.5h1V274h1V270.5h1V270.5h1V267.5h1V274h1V273h1V274h1V270h1V272.5h1V271h1V273h1V271h1V268h1V272h1V272.5h1V274h1V272h1V271.5h1V273h1V272.5h1V270h1V270.5h1V271h1V272h1V271.5h1V272h1V273.5h1V269.5h1V273.5h1V271.5h1V270.5h1V271.5h1V274.5h1V270h1V274h1V272.5h1V271h1V269.5h1V274h1V273h1V273.5h1V274.5h1V276.5h1V275h1V274h1V275h1V275.5h1V270.5h1V271.5h1V275h1V274h1V274.5h1V273.5h1V275h1V273.5h1V274.5h1V275.5h1V273.5h1V275h1V276h1V274h1V275.5h1V274h1V272.5h1V273.5h1V268h1V271h1V274h1V271.5h1V269h1V270h1V273h1V270h1V267.5h1V268.5h1V272.5h1V273h1V273.5h1V273h1V271.5h1V270.5h1V273h1V270h1V271.5h1V271.5h1V273.5h1V269.5h1V269h1V269.5h1V271.5h1V271h1V272h1V268.5h1V265h1V266.5h1V271.5h1V270.5h1V273h1V269.5h1V273.5h1V273h1V269.5h1V268.5h1V272h1V269h1V271h1V271.5h1V273.5h1V265.5h1V270h1V271.5h1V272.5h1V272.5h1V270.5h1V270h1V269h1V270.5h1V271.5h1V273.5h1V273h1V272h1V270.5h1V270h1V272h1V269.5h1V273.5h1V265h1V271h1V272.5h1V272.5h1V270.5h1V267h1V268.5h1V273h1V269h1V270.5h1V267.5h1V273h1V293h-1V296.5h-1V291h-1V290.5h-1V291h-1V292h-1V292h-1V289.5h-1V293.5h-1V290h-1V294h-1V289.5h-1V289.5h-1V292.5h-1V294h-1V292.5h-1V292.5h-1V292.5h-1V292.5h-1V297.5h-1V292h-1V292.5h-1V290h-1V290h-1V292.5h-1V292h-1V293.5h-1V293h-1V294.5h-1V297.5h-1V294h-1V295h-1V293.5h-1V290.5h-1V293h-1V294.5h-1V293.5h-1V292.5h-1V289.5h-1V293h-1V295h-1V293h-1V294h-1V291h-1V290h-1V298.5h-1V293h-1V290.5h-1V297h-1V293.5h-1V289h-1V294.5h-1V297h-1V290h-1V289.5h-1V290h-1V294.5h-1V291.5h-1V291h-1V292.5h-1V289.5h-1V294.5h-1V292.5h-1V289h-1V294.5h-1V295h-1V296h-1V293.5h-1V290.5h-1V289h-1V294h-1V289h-1V293h-1V290.5h-1V291h-1V288.5h-1V287.5h-1V288h-1V291h-1V288h-1V289h-1V289h-1V288h-1V287.5h-1V287.5h-1V289h-1V289.5h-1V288.5h-1V289h-1V288.5h-1V289h-1V290h-1V288.5h-1V288h-1V287h-1V288.5h-1V288h-1V289.5h-1V290.5h-1V293.5h-1V291h-1V289.5h-1V290h-1V289.5h-1V289.5h-1V292h-1V289.5h-1V291.5h-1V292h-1V290.5h-1V291.5h-1V291.5h-1V293h-1V291h-1V289h-1V288.5h-1V293h-1V289h-1V290h-1V290h-1V290.5h-1V290h-1V289h-1V290h-1V289.5h-1V293h-1V292h-1V288.5h-1V292h-1V292h-1V289h-1V290.5h-1V292.5h-1V289.5h-1V290h-1V288.5h-1V290.5h-1V289.5h-1V288.5h-1V290h-1V292h-1V292.5h-1V292.5h-1V293h-1V291.5h-1V289.5h-1V292.5h-1V289.5h-1V289h-1V290h-1V291h-1V292h-1V292.5h-1V289h-1V291h-1V288.5h-1V292h-1V288.5h-1V291h-1V289.5h-1V290h-1V296h-1V290h-1V290h-1V289h-1V290h-1V288.5h-1V289.5h-1V291.5h-1V291h-1V293h-1V291h-1V291h-1V288.5h-1V289.5h-1V292.5h-1V292.5h-1V290h-1V288.5h-1V293h-1V290.5h-1V289.5h-1V295h-1V290.5h-1V290.5h-1V289h-1V289h-1V290.5h-1V291h-1V294h-1V289.5h-1V291h-1V291h-1V288.5h-1V291h-1V293h-1V291h-1V296h-1V289.5h-1V292.5h-1V289.5h-1V296h-1V294.5h-1V290.5h-1V295h-1V291h-1V293h-1V292h-1V289h-1V289.5h-1V291.5h-1V291h-1V291h-1V291h-1V292h-1V290h-1V289.5h-1V290h-1V290h-1V289h-1V289h-1V290h-1V289h-1V288.5h-1V289h-1V288.5h-1V292h-1V290h-1V294h-1V290.5h-1V288.5h-1V289h-1V289.5h-1V290h-1V292h-1V296h-1V293.5h-1V292h-1V292h-1V292h-1V291h-1V289.5h-1V289.5h-1V292h-1V291.5h-1V292.5h-1V295h-1V290h-1V290h-1V291.5h-1V293.5h-1V290h-1V288.5h-1V289h-1V289.5h-1V293.5h-1V290h-1V289h-1V290h-1V288.5h-1V289.5h-1V290.5h-1V292.5h-1V291h-1V291.5h-1V294h-1V294.5h-1V290.5h-1V291h-1V291.5h-1V290.5h-1V290.5h-1V291h-1V289.5h-1V293.5h-1V290.5h-1V291.5h-1V291.5h-1V293h-1V292.5h-1V292.5h-1V289.5h-1V290.5h-1V290h-1V288.5h-1V291.5h-1V292.5h-1V290.5h-1V288.5h-1V295.5h-1V292h-1V292.5h-1V292.5h-1V292h-1V291h-1V291h-1V291.5h-1V291.5h-1V293h-1V289.5h-1V289.5h-1V291.5h-1V291.5h-1V292h-1V291.5h-1V292h-1V289.5h-1V289.5h-1V290h-1V293h-1V292.5h-1V291h-1V289h-1V291.5h-1V293.5h-1V293h-1V291h-1V293h-1V293.5h-1V290h-1V292h-1V291h-1V291h-1V290.5h-1V288.5h-1V292h-1V295h-1V290.5h-1V292h-1V290h-1V291h-1V292h-1V291.5h-1V292h-1V292.5h-1V289.5h-1V290.5h-1V288.5h-1V291.5h-1V294h-1V290h-1V291.5h-1V290.5h-1V293.5h-1V293h-1V289h-1V292h-1V292h-1V290.5h-1V291h-1V289.5h-1V293h-1V289.5h-1V290h-1V292h-1V290h-1V288.5h-1V289.5h-1V291h-1V292.5h-1V291.5h-1V291.5h-1V290h-1V289h-1V290h-1V295.5h-1V295h-1V293h-1V288.5h-1V289.5h-1V291.5h-1V293h-1V289.5h-1V289.5h-1V290h-1V295h-1V288.5h-1V292h-1V291.5h-1V292.5h-1V289.5h-1V292h-1V290.5h-1V291h-1V288.5h-1V289.5h-1V290.5h-1V292.5h-1V288.5h-1V292h-1V291h-1V292.5h-1V291h-1V292.5h-1V289.5h-1V293h-1V296h-1V293.5h-1V291h-1V290h-1V289h-1V291.5h-1V291h-1V289h-1V290h-1V290h-1V291.5h-1V289.5h-1V295.5h-1V289h-1V290h-1V289h-1V289.5h-1V292.5h-1V289.5h-1V289h-1V289h-1V289h-1V289h-1V289.5h-1V292.5h-1V290h-1V296h-1V292.5h-1V294h-1V289h-1V289.5h-1V292.5h-1V291h-1V289.5h-1V290h-1V293h-1V296h-1V291.5h-1V290.5h-1V288.5h-1V288.5h-1V289.5h-1V292h-1V290h-1V291h-1V293h-1V293h-1V289.5h-1V288.5h-1V292.5h-1V290h-1V291h-1V289.5h-1V292h-1V288.5h-1V292.5h-1V288.5h-1V289.5h-1V291h-1V290.5h-1V291.5h-1V291.5h-1V289.5h-1V288.5h-1V291h-1V290h-1V290h-1V292.5h-1V292h-1V294h-1V292.5h-1V289.5h-1V289.5h-1V294h-1V290.5h-1V289.5h-1V290.5h-1V291.5h-1V291.5h-1V292.5h-1V291h-1V294h-1V291.5h-1V292h-1V296.5h-1V289.5h-1V288.5h-1V288.5h-1V293h-1V291h-1V289h-1V292.5h-1V292.5h-1V290h-1V293h-1V293h-1V288.5h-1V292h-1V289h-1V290.5h-1V289.5h-1V288.5h-1V290.5h-1V288.5h-1V292.5h-1V291.5h-1V292h-1V292h-1V288.5h-1V288.5h-1V288.5h-1V290h-1V290.5h-1V293h-1V292h-1V292.5h-1V289.5h-1V295h-1V289h-1V295h-1V292.5h-1V286.5h-1V289.5h-1V286h-1V286.5h-1V285.5h-1V285.5h-1V289h-1V286h-1V286.5h-1V286.5h-1V286h-1V286h-1V288.5h-1V285.5h-1V287h-1V286h-1V287.5h-1V285.5h-1V287h-1V285.5h-1V286h-1V286h-1V287.5h-1V286.5h-1V288h-1V287h-1V288h-1V288h-1V286.5h-1V288h-1V285.5h-1V287.5h-1V286.5h-1V288h-1V287.5h-1V286h-1V287.5h-1V287h-1V289h-1V288h-1V289h-1V286h-1V287h-1V287h-1V287.5h-1V288h-1V287.5h-1V287.5h-1V287.5h-1V288h-1V289h-1V287h-1V288.5h-1V288.5h-1V289h-1V288h-1V288h-1V287.5h-1V287h-1V287h-1V288h-1V287h-1V290h-1V287h-1V289.5h-1V292h-1V289.5h-1V286.5h-1V286.5h-1V287.5h-1V289.5h-1V286.5h-1V287h-1V287h-1V287h-1V287.5h-1V288h-1V289.5h-1V287h-1V286.5h-1V289.5h-1V287.5h-1V288.5h-1V287.5h-1V286.5h-1V287h-1V287h-1V289.5h-1V292.5h-1V291.5h-1V289.5h-1V291h-1V288.5h-1V288h-1V293h-1V287h-1V287h-1V287.5h-1V288.5h-1V289.5h-1V288.5h-1V289h-1V288.5h-1V288h-1V287.5h-1V288h-1V288h-1V288.5h-1V288h-1V286.5h-1V287h-1V288.5h-1V287h-1V286.5h-1V291h-1V287.5h-1V291.5h-1V287.5h-1V286.5h-1V288h-1V287.5h-1V288.5h-1V287.5h-1V287.5h-1V289h-1V289.5h-1V288h-1V288h-1V287.5h-1V288.5h-1V286.5h-1V288h-1V287h-1V288.5h-1V289h-1V288h-1V287.5h-1V288h-1V289.5h-1V286.5h-1V287.5h-1V287.5h-1V289.5h-1V288.5h-1V290h-1V287h-1V289h-1V288.5h-1V289.5h-1V287h-1V286.5h-1V289.5h-1V289h-1V287.5h-1V289h-1V288.5h-1V288.5h-1V290h-1V289.5h-1Z" fill="#6f97e4"/>
<rect x="279" y="304" width="718" height="1" fill="#262626"/>
<rect x="279" y="305" width="718" height="46" fill="#444444"/>
<rect x="279.5" y="305.5" width="17" height="14" rx="2" fill="#5b6a99"/>
<rect x="298" y="305.5" width="12.5" height="12" rx="2" fill="#5b6a99"/><rect x="301" y="308.5" width="7" height="2" fill="#e8e8e8"/>
<rect x="321" y="317" width="676" height="1" fill="#363636"/>
<rect x="321" y="339" width="676" height="1" fill="#363636"/>
<path d="M321 320V320h1V320h1V320h1V320.5h1V320.5h1V320h1V320.5h1V319.5h1V318.5h1V319.5h1V320h1V319h1V319.5h1V319.5h1V319h1V319.5h1V320h1V320.5h1V319.5h1V319h1V319h1V320.5h1V321h1V319.5h1V320.5h1V321h1V320h1V320h1V320h1V320.5h1V321h1V320h1V320h1V320h1V319h1V320h1V320h1V320.5h1V320h1V321h1V320h1V321h1V320.5h1V321h1V320h1V320.5h1V320.5h1V320.5h1V320.5h1V319h1V321h1V320.5h1V321h1V320.5h1V320h1V320.5h1V321h1V320.5h1V321h1V320.5h1V320.5h1V320h1V320h1V320h1V319h1V319h1V321h1V320h1V321h1V320.5h1V320h1V321h1V320h1V320h1V320.5h1V320.5h1V321h1V319h1V321h1V321h1V320.5h1V320.5h1V320.5h1V320.5h1V320.5h1V320.5h1V321h1V320.5h1V320.5h1V319h1V320.5h1V320h1V318.5h1V320.5h1V320.5h1V320.5h1V320.5h1V320h1V321h1V320.5h1V320.5h1V320.5h1V321h1V319.5h1V320.5h1V321h1V320h1V321h1V321h1V320h1V321h1V321h1V321h1V321h1V320h1V319.5h1V321h1V320h1V321h1V321.5h1V321h1V321.5h1V319.5h1V320.5h1V321h1V321.5h1V321h1V319.5h1V321.5h1V321.5h1V320h1V322h1V321.5h1V321.5h1V320.5h1V320h1V322.5h1V320.5h1V322.5h1V322h1V322h1V322.5h1V322h1V322.5h1V322.5h1V322h1V322.5h1V322.5h1V321h1V321h1V322.5h1V322.5h1V323h1V323h1V323.5h1V323h1V321.5h1V322h1V323.5h1V317h1V317h1V318h1V318h1V316.5h1V317h1V318h1V317h1V315.5h1V317.5h1V317h1V316h1V317h1V317h1V317.5h1V317h1V317h1V315h1V317h1V316.5h1V317h1V317.5h1V318h1V317h1V317.5h1V317.5h1V317h1V316.5h1V317h1V317h1V317h1V317.5h1V317h1V318h1V317h1V317h1V317h1V317h1V317.5h1V317.5h1V317h1V315.5h1V318h1V318h1V317h1V317.5h1V318h1V318h1V316.5h1V317.5h1V318h1V315.5h1V316.5h1V317h1V318h1V317.5h1V317h1V317.5h1V317h1V317.5h1V317h1V317h1V317h1V317.5h1V317.5h1V316.5h1V318h1V317.5h1V317.5h1V316.5h1V317h1V318h1V318h1V317.5h1V317.5h1V316.5h1V317h1V317h1V317h1V317.5h1V318h1V315h1V317.5h1V317h1V316h1V317.5h1V317.5h1V318h1V318h1V317.5h1V317h1V316h1V317h1V315.5h1V316h1V315h1V317.5h1V317h1V317h1V317.5h1V317h1V317h1V318h1V315h1V317.5h1V317.5h1V318h1V318h1V317.5h1V317h1V317.5h1V318h1V317h1V317.5h1V317.5h1V317h1V317h1V317.5h1V316.5h1V317.5h1V317.5h1V318h1V318h1V316.5h1V316.5h1V318h1V317.5h1V315.5h1V318h1V317h1V317h1V317h1V317.5h1V315.5h1V315.5h1V317h1V317h1V317h1V317.5h1V317h1V317.5h1V317h1V317.5h1V317h1V317h1V317h1V316.5h1V316h1V318h1V317.5h1V317h1V317h1V316h1V315.5h1V315h1V316h1V318h1V317.5h1V316.5h1V317.5h1V316.5h1V317h1V317.5h1V317h1V318h1V314.5h1V317h1V317.5h1V317.5h1V316h1V316.5h1V317h1V315.5h1V317h1V317h1V318h1V317h1V317.5h1V317h1V317.5h1V317h1V317h1V317.5h1V316.5h1V317h1V316.5h1V317h1V316.5h1V317.5h1V317.5h1V317h1V315.5h1V317h1V316.5h1V316h1V317h1V317h1V315.5h1V316.5h1V317.5h1V316.5h1V317h1V316.5h1V316.5h1V318h1V317h1V317h1V316.5h1V316.5h1V317h1V316.5h1V318h1V316.5h1V316h1V317.5h1V318h1V317h1V315.5h1V317h1V316.5h1V317h1V317h1V317.5h1V317.5h1V317.5h1V316.5h1V316h1V317h1V317h1V317h1V317.5h1V317h1V317h1V316.5h1V317h1V316.5h1V316.5h1V318h1V317h1V317h1V317.5h1V317h1V317h1V316.5h1V317h1V317h1V316h1V316.5h1V317h1V317h1V317.5h1V317h1V317h1V317h1V317h1V316.5h1V316.5h1V316.5h1V316.5h1V317h1V315.5h1V317h1V317.5h1V316.5h1V317h1V317h1V317.5h1V318h1V317h1V317.5h1V317.5h1V317h1V317h1V317.5h1V317h1V316h1V316.5h1V318h1V317h1V317.5h1V317.5h1V315.5h1V316.5h1V317h1V317h1V317.5h1V317.5h1V317.5h1V318h1V317h1V317h1V317.5h1V316.5h1V317h1V317h1V317.5h1V317h1V317h1V315.5h1V317h1V316.5h1V317h1V316h1V317h1V316.5h1V317.5h1V318h1V317h1V317h1V316.5h1V318h1V317.5h1V316.5h1V316.5h1V318h1V315.5h1V316.5h1V317.5h1V317.5h1V318h1V318h1V317.5h1V315.5h1V318h1V316.5h1V316.5h1V317h1V317.5h1V316.5h1V317.5h1V316.5h1V317.5h1V315.5h1V317.5h1V317.5h1V317.5h1V318h1V318h1V316h1V318h1V316.5h1V315.5h1V317.5h1V317.5h1V317h1V317h1V317h1V317h1V317h1V316h1V317.5h1V317.5h1V317.5h1V317h1V316h1V317h1V317h1V316h1V317h1V317h1V317h1V316h1V315.5h1V317.5h1V317.5h1V316h1V316h1V318h1V317.5h1V317h1V317.5h1V318h1V317.5h1V317.5h1V317h1V318h1V317h1V318h1V317h1V317.5h1V316.5h1V317.5h1V318h1V316.5h1V318h1V317.5h1V318h1V318h1V318h1V318h1V317h1V318h1V315.5h1V315.5h1V317.5h1V318h1V317h1V317h1V317h1V317.5h1V317h1V317.5h1V317.5h1V317.5h1V317h1V317.5h1V318h1V317h1V317.5h1V317.5h1V317h1V316.5h1V316.5h1V317.5h1V317.5h1V317.5h1V316h1V317.5h1V318.5h1V321h1V320.5h1V320h1V320h1V321h1V320.5h1V320.5h1V320.5h1V319.5h1V320.5h1V320h1V320.5h1V320h1V320h1V319.5h1V320.5h1V319h1V320h1V319h1V319h1V319.5h1V319.5h1V320h1V317h1V315.5h1V316h1V315.5h1V316.5h1V315.5h1V316.5h1V316h1V316h1V316h1V316h1V316h1V316.5h1V316h1V315h1V315.5h1V316h1V315h1V315.5h1V316h1V316h1V315.5h1V316h1V316h1V317h1V316.5h1V316.5h1V315.5h1V316.5h1V316.5h1V314.5h1V315.5h1V316.5h1V315h1V316h1V316.5h1V316.5h1V316.5h1V316.5h1V316h1V315.5h1V316h1V316h1V316.5h1V314.5h1V315.5h1V316h1V316h1V316.5h1V316h1V316h1V316h1V315.5h1V314h1V316.5h1V315.5h1V316h1V316h1V315.5h1V315.5h1V316.5h1V315h1V314h1V315.5h1V316h1V315.5h1V316h1V315.5h1V316.5h1V315h1V316.5h1V315.5h1V315h1V316h1V316.5h1V341h-1V341h-1V340.5h-1V341.5h-1V341h-1V342h-1V343h-1V341.5h-1V343.5h-1V341.5h-1V340.5h-1V342.5h-1V341h-1V341h-1V340h-1V342h-1V341h-1V341.5h-1V342h-1V341.5h-1V340.5h-1V341.5h-1V341.5h-1V341h-1V340.5h-1V341h-1V341h-1V340.5h-1V340.5h-1V341.5h-1V342h-1V343.5h-1V340.5h-1V340.5h-1V341h-1V342h-1V341h-1V341.5h-1V341.5h-1V341h-1V340.5h-1V340h-1V342h-1V343.5h-1V340h-1V340.5h-1V341.5h-1V340.5h-1V343h-1V341h-1V341.5h-1V340h-1V340.5h-1V340.5h-1V340.5h-1V343.5h-1V342h-1V343h-1V341.5h-1V340.5h-1V340.5h-1V340.5h-1V341h-1V342.5h-1V340.5h-1V340.5h-1V341.5h-1V342.5h-1V341h-1V340.5h-1V341.5h-1V341h-1V341.5h-1V340.5h-1V338.5h-1V337.5h-1V338.5h-1V337.5h-1V337h-1V337.5h-1V337h-1V336.5h-1V337.5h-1V338h-1V336.5h-1V337h-1V336.5h-1V339h-1V337h-1V336.5h-1V337h-1V336.5h-1V336h-1V337h-1V336h-1V337h-1V338h-1V338.5h-1V338.5h-1V339.5h-1V339h-1V340.5h-1V339.5h-1V339.5h-1V340h-1V340h-1V340h-1V339.5h-1V339.5h-1V341h-1V339.5h-1V339.5h-1V341h-1V340h-1V339.5h-1V339.5h-1V340h-1V339.5h-1V339.5h-1V340h-1V340h-1V340h-1V339.5h-1V341h-1V341.5h-1V339.5h-1V340.5h-1V340.5h-1V339h-1V339.5h-1V339h-1V339h-1V340h-1V339.5h-1V342h-1V339.5h-1V340.5h-1V339h-1V339h-1V339.5h-1V339h-1V340.5h-1V340.5h-1V339.5h-1V339.5h-1V340.5h-1V339.5h-1V341h-1V339.5h-1V339.5h-1V340h-1V340h-1V340h-1V339.5h-1V341.5h-1V339h-1V340h-1V340h-1V339h-1V340h-1V339.5h-1V341h-1V339.5h-1V340h-1V339.5h-1V339.5h-1V339h-1V339h-1V340h-1V340h-1V341h-1V339.5h-1V339.5h-1V339.5h-1V340h-1V340h-1V341h-1V341h-1V340h-1V340.5h-1V339h-1V340h-1V340h-1V340h-1V339h-1V339.5h-1V339.5h-1V339.5h-1V339.5h-1V339h-1V341.5h-1V340h-1V340.5h-1V340h-1V340h-1V339h-1V339h-1V340.5h-1V341.5h-1V340h-1V339.5h-1V340h-1V339.5h-1V340h-1V340.5h-1V340h-1V340h-1V340h-1V340h-1V340h-1V340h-1V339.5h-1V340.5h-1V340h-1V340.5h-1V340h-1V339.5h-1V340.5h-1V340h-1V339.5h-1V340.5h-1V339.5h-1V340h-1V339.5h-1V340h-1V340h-1V339.5h-1V339.5h-1V339h-1V340.5h-1V340.5h-1V340h-1V340h-1V339.5h-1V339.5h-1V339h-1V340h-1V341h-1V340h-1V339.5h-1V339.5h-1V339h-1V339h-1V340h-1V340.5h-1V339.5h-1V340.5h-1V340h-1V341h-1V340.5h-1V340.5h-1V339h-1V340.5h-1V339.5h-1V339.5h-1V339.5h-1V340h-1V339.5h-1V339h-1V340h-1V339h-1V341.5h-1V340.5h-1V340.5h-1V340.5h-1V339.5h-1V341.5h-1V339h-1V340h-1V340.5h-1V341h-1V339h-1V339.5h-1V339.5h-1V340h-1V341.5h-1V341.5h-1V339.5h-1V340h-1V340h-1V340h-1V340h-1V340h-1V340.5h-1V340h-1V341.5h-1V339.5h-1V340.5h-1V341h-1V341h-1V340h-1V339h-1V339.5h-1V340h-1V340h-1V340h-1V339h-1V342h-1V340h-1V340h-1V340h-1V340.5h-1V340.5h-1V339.5h-1V339.5h-1V339h-1V340h-1V341h-1V339.5h-1V339h-1V340.5h-1V339.5h-1V340h-1V340h-1V341h-1V340h-1V341.5h-1V340h-1V340h-1V339.5h-1V340h-1V339.5h-1V339.5h-1V340h-1V341h-1V340h-1V340.5h-1V342h-1V340h-1V339h-1V340h-1V339.5h-1V340.5h-1V340h-1V340h-1V339.5h-1V340h-1V340.5h-1V340h-1V340.5h-1V340.5h-1V340h-1V340.5h-1V339.5h-1V339h-1V340.5h-1V339.5h-1V339.5h-1V340.5h-1V341h-1V340h-1V339h-1V340h-1V340.5h-1V339h-1V339.5h-1V340h-1V342h-1V339h-1V341.5h-1V339.5h-1V341.5h-1V339.5h-1V340h-1V341.5h-1V339.5h-1V340h-1V339.5h-1V340h-1V339.5h-1V340h-1V339h-1V339h-1V340.5h-1V339h-1V339h-1V341h-1V339h-1V340h-1V339.5h-1V339h-1V339.5h-1V340h-1V339h-1V340h-1V339.5h-1V342h-1V342h-1V339.5h-1V339.5h-1V341.5h-1V340.5h-1V340.5h-1V339h-1V339h-1V341.5h-1V340h-1V340h-1V340h-1V340h-1V340.5h-1V340h-1V339h-1V339.5h-1V341h-1V340.5h-1V339h-1V341h-1V339.5h-1V339.5h-1V340h-1V339.5h-1V341h-1V341.5h-1V340h-1V340h-1V340h-1V341.5h-1V340h-1V342h-1V340.5h-1V339.5h-1V339.5h-1V342h-1V340h-1V339.5h-1V339h-1V340h-1V340h-1V339h-1V340h-1V340h-1V339h-1V341h-1V339.5h-1V339.5h-1V340h-1V339.5h-1V340h-1V339.5h-1V340h-1V340h-1V339.5h-1V340.5h-1V339h-1V341h-1V339.5h-1V341.5h-1V339.5h-1V339h-1V340.5h-1V340h-1V339h-1V341h-1V340h-1V339h-1V340h-1V339h-1V339h-1V339h-1V339.5h-1V339h-1V339h-1V339.5h-1V339h-1V339h-1V340h-1V340h-1V339h-1V342h-1V339.5h-1V339.5h-1V339.5h-1V339.5h-1V340h-1V341.5h-1V340h-1V339.5h-1V339h-1V340h-1V339.5h-1V339h-1V339.5h-1V339.5h-1V339.5h-1V339h-1V340h-1V341h-1V340h-1V340h-1V339h-1V339h-1V339h-1V339.5h-1V339h-1V341h-1V339h-1V340h-1V340.5h-1V339.5h-1V339h-1V339.5h-1V339h-1V339.5h-1V340h-1V339h-1V340h-1V340h-1V339.5h-1V339.5h-1V341h-1V341h-1V339h-1V340h-1V339.5h-1V339.5h-1V340h-1V333.5h-1V333.5h-1V334.5h-1V335.5h-1V334h-1V334h-1V334h-1V334.5h-1V334h-1V336.5h-1V334h-1V334.5h-1V335h-1V334.5h-1V334.5h-1V336h-1V335h-1V335h-1V335h-1V334.5h-1V335h-1V336h-1V335.5h-1V335.5h-1V335.5h-1V335h-1V335.5h-1V335.5h-1V336h-1V335.5h-1V336h-1V337h-1V335.5h-1V336h-1V337h-1V336h-1V336h-1V336.5h-1V336.5h-1V336.5h-1V336.5h-1V336.5h-1V337.5h-1V336h-1V336h-1V335.5h-1V336h-1V336h-1V337.5h-1V336.5h-1V336.5h-1V336.5h-1V336h-1V337h-1V337h-1V337h-1V336.5h-1V336h-1V336h-1V336h-1V336.5h-1V337h-1V336.5h-1V337h-1V336.5h-1V336.5h-1V336h-1V336h-1V336h-1V336h-1V337.5h-1V336.5h-1V337h-1V336h-1V337h-1V338h-1V337h-1V338h-1V336h-1V336h-1V336.5h-1V338h-1V337h-1V336h-1V336.5h-1V338h-1V337h-1V337.5h-1V338h-1V337h-1V336.5h-1V337h-1V338.5h-1V336.5h-1V336h-1V336h-1V336.5h-1V336.5h-1V337h-1V336h-1V336h-1V336.5h-1V337h-1V336h-1V337h-1V337h-1V336.5h-1V338h-1V337.5h-1V336h-1V337.5h-1V336.5h-1V336h-1V336.5h-1V336.5h-1V338h-1V336h-1V336.5h-1V337h-1V338h-1V337.5h-1V337h-1V336.5h-1V336.5h-1V337.5h-1V337h-1V336h-1V336h-1V336h-1V337h-1V337h-1V336.5h-1V337h-1V336h-1V336.5h-1V336h-1V338h-1V337h-1V336.5h-1V337h-1V336.5h-1V336.5h-1V338.5h-1V337h-1V338h-1V336.5h-1V337h-1V337h-1V337h-1V337h-1V336.5h-1V336.5h-1V337h-1V337h-1V336.5h-1V337.5h-1V336.5h-1V336.5h-1V337h-1Z" fill="#34405e"/>
<path d="M321 322.5V322.5h1V321h1V323h1V320.5h1V322h1V323h1V321.5h1V321.5h1V321h1V320h1V323h1V322.5h1V323.5h1V321.5h1V323h1V322.5h1V322.5h1V321h1V322.5h1V315.5h1V322.5h1V321.5h1V323h1V319h1V320.5h1V322.5h1V322.5h1V322.5h1V320.5h1V321h1V322.5h1V321.5h1V322h1V316.5h1V323h1V321h1V321.5h1V321.5h1V316h1V322h1V323h1V322h1V323h1V319.5h1V323h1V319h1V323h1V320.5h1V320h1V322h1V321.5h1V321h1V321.5h1V323h1V320.5h1V321h1V321.5h1V317.5h1V323h1V316.5h1V317h1V322.5h1V321h1V322.5h1V320.5h1V321.5h1V322.5h1V322h1V321h1V320.5h1V321.5h1V323h1V322.5h1V321.5h1V321.5h1V324h1V322.5h1V323h1V321h1V321h1V321h1V323.5h1V320.5h1V322.5h1V321h1V321h1V321h1V321.5h1V321h1V321.5h1V323h1V323h1V323h1V320.5h1V319.5h1V319h1V324h1V323.5h1V323.5h1V323.5h1V321h1V322h1V323.5h1V322.5h1V323.5h1V322h1V319.5h1V322.5h1V320.5h1V323.5h1V323h1V321.5h1V321.5h1V320.5h1V322h1V321.5h1V321h1V318.5h1V319.5h1V323.5h1V320.5h1V321.5h1V324h1V323.5h1V322h1V323.5h1V323.5h1V323.5h1V322h1V323.5h1V322h1V324h1V324h1V324h1V324h1V323h1V324.5h1V323h1V324.5h1V323h1V322h1V324h1V323h1V323.5h1V322.5h1V324.5h1V322.5h1V323h1V323.5h1V321.5h1V324h1V319h1V324.5h1V325h1V323.5h1V323.5h1V324h1V325h1V324.5h1V318h1V319h1V318h1V320h1V321.5h1V320h1V320.5h1V319.5h1V317.5h1V321.5h1V318.5h1V319h1V317.5h1V319h1V321.5h1V318.5h1V319h1V318.5h1V318.5h1V318.5h1V321h1V315h1V320h1V317h1V319.5h1V321h1V318h1V319.5h1V319h1V317.5h1V320.5h1V317h1V318h1V320.5h1V320.5h1V320h1V320.5h1V320h1V318.5h1V318h1V320h1V320h1V317h1V319h1V319h1V321.5h1V316.5h1V321.5h1V313.5h1V319h1V321h1V321h1V318h1V321.5h1V318.5h1V318h1V318h1V321.5h1V321h1V320h1V321h1V317h1V318h1V313h1V320h1V320.5h1V315.5h1V317h1V318h1V317h1V318h1V320h1V317h1V319.5h1V317h1V319h1V319.5h1V320h1V321.5h1V320.5h1V317.5h1V319.5h1V317.5h1V320.5h1V317.5h1V320h1V318.5h1V320.5h1V317h1V317.5h1V319h1V321h1V317h1V318h1V317h1V319.5h1V320.5h1V320.5h1V320h1V320h1V318.5h1V320.5h1V320.5h1V321.5h1V320h1V319.5h1V320h1V317.5h1V319h1V319h1V318.5h1V321h1V321.5h1V317.5h1V318h1V317.5h1V318h1V320.5h1V319h1V318.5h1V320h1V320.5h1V320h1V318.5h1V317.5h1V321.5h1V321.5h1V318.5h1V321.5h1V321.5h1V317.5h1V319h1V319h1V318h1V320h1V321h1V320h1V316h1V320.5h1V317.5h1V317.5h1V321h1V317.5h1V317.5h1V317h1V316.5h1V318.5h1V319.5h1V318h1V317.5h1V316h1V317h1V319h1V319h1V321h1V317.5h1V317h1V319.5h1V319h1V319.5h1V321h1V319h1V321h1V320.5h1V321h1V320h1V319.5h1V320.5h1V318.5h1V318.5h1V319h1V319h1V319h1V320h1V317h1V319.5h1V317.5h1V318.5h1V317h1V317.5h1V320h1V320h1V317h1V319h1V320h1V320h1V319h1V321h1V317h1V320.5h1V318h1V319.5h1V318.5h1V319h1V318.5h1V317.5h1V318.5h1V318.5h1V318h1V320h1V320.5h1V319h1V317.5h1V316h1V318.5h1V316.5h1V321h1V317h1V319h1V319.5h1V319h1V318.5h1V319.5h1V321h1V318h1V318.5h1V319.5h1V319h1V315.5h1V321h1V319h1V318h1V320.5h1V318h1V319.5h1V317h1V319.5h1V317h1V317h1V315.5h1V317.5h1V321h1V316h1V318.5h1V319.5h1V319.5h1V316.5h1V317.5h1V317.5h1V317.5h1V321h1V321.5h1V319h1V321h1V317.5h1V318.5h1V319h1V315h1V320.5h1V321.5h1V320.5h1V320h1V320.5h1V317.5h1V319.5h1V319.5h1V319h1V319.5h1V315h1V321h1V315.5h1V319h1V321.5h1V317h1V319.5h1V319.5h1V317h1V318.5h1V319.5h1V315h1V320.5h1V317.5h1V316.5h1V321.5h1V317.5h1V317.5h1V318h1V321h1V319.5h1V319.5h1V320h1V321h1V316.5h1V321h1V319h1V321.5h1V318.5h1V320.5h1V318h1V319.5h1V316.5h1V317h1V317h1V317h1V317.5h1V317.5h1V321h1V316.5h1V316h1V317h1V318.5h1V319h1V319h1V320.5h1V318h1V318.5h1V318h1V319.5h1V320.5h1V319h1V317.5h1V317h1V320.5h1V319h1V319.5h1V318h1V320.5h1V318.5h1V320.5h1V315.5h1V317h1V320h1V320h1V316.5h1V317h1V317h1V318h1V318.5h1V321h1V321.5h1V317.5h1V317h1V318.5h1V320.5h1V318.5h1V317.5h1V321h1V314.5h1V321.5h1V319.5h1V318.5h1V318h1V316h1V318.5h1V318h1V320.5h1V320.5h1V313.5h1V319h1V317h1V318h1V320.5h1V319h1V319h1V314.5h1V320h1V319h1V317.5h1V319.5h1V319h1V318h1V318h1V319.5h1V317h1V317.5h1V319h1V319.5h1V318h1V321.5h1V320.5h1V321h1V318.5h1V321h1V318h1V321.5h1V317.5h1V319h1V321.5h1V318h1V321h1V318.5h1V318h1V320h1V319.5h1V318h1V320.5h1V317h1V318.5h1V318h1V318.5h1V321h1V319h1V321.5h1V318.5h1V319.5h1V321h1V317h1V315.5h1V320.5h1V319h1V317.5h1V321h1V318h1V320h1V318h1V318h1V321.5h1V316h1V317h1V321.5h1V317.5h1V319.5h1V317h1V314.5h1V319h1V321.5h1V318.5h1V321h1V322.5h1V317h1V322.5h1V322.5h1V321.5h1V323.5h1V321h1V320.5h1V321h1V323h1V322.5h1V320h1V322h1V322.5h1V322.5h1V321h1V321h1V322.5h1V322h1V321h1V323h1V323h1V321h1V320h1V321h1V318.5h1V316h1V319h1V318h1V316h1V320.5h1V319h1V320h1V320h1V319h1V316.5h1V317h1V319.5h1V316.5h1V315.5h1V316h1V319h1V316h1V320.5h1V318h1V320h1V315.5h1V319.5h1V316.5h1V319h1V316h1V317.5h1V319.5h1V311h1V316h1V315h1V317h1V315.5h1V320h1V320h1V320h1V318h1V319.5h1V318h1V319.5h1V319h1V315.5h1V319.5h1V317.5h1V315.5h1V313h1V320h1V315.5h1V318.5h1V316.5h1V315.5h1V319.5h1V316h1V316.5h1V318.5h1V317h1V320.5h1V319.5h1V315.5h1V318h1V319h1V319.5h1V317.5h1V315.5h1V318.5h1V315.5h1V316.5h1V320h1V319.5h1V316h1V317.5h1V315.5h1V321h1V317h1V338.5h-1V336.5h-1V340.5h-1V337h-1V341h-1V337.5h-1V337.5h-1V337h-1V336.5h-1V339.5h-1V340.5h-1V340h-1V339h-1V336.5h-1V341h-1V336.5h-1V337h-1V340.5h-1V339h-1V337.5h-1V337h-1V338.5h-1V337.5h-1V340.5h-1V339h-1V338.5h-1V337.5h-1V338.5h-1V339h-1V337h-1V337h-1V339.5h-1V339h-1V338.5h-1V337.5h-1V340h-1V344h-1V340h-1V340h-1V338h-1V340h-1V337h-1V340.5h-1V340h-1V339h-1V336.5h-1V338.5h-1V340.5h-1V339.5h-1V340.5h-1V340h-1V340h-1V337.5h-1V336.5h-1V341.5h-1V338h-1V339h-1V337h-1V337h-1V337h-1V337.5h-1V339h-1V341h-1V337h-1V338h-1V338.5h-1V340h-1V337h-1V338.5h-1V336h-1V338h-1V343h-1V341.5h-1V343h-1V337.5h-1V335.5h-1V334.5h-1V336.5h-1V334h-1V336.5h-1V335h-1V336h-1V337h-1V336h-1V336.5h-1V335.5h-1V334.5h-1V336h-1V337h-1V335.5h-1V334.5h-1V334.5h-1V337h-1V335h-1V335.5h-1V337.5h-1V335h-1V337h-1V335h-1V336.5h-1V336.5h-1V336.5h-1V337.5h-1V336h-1V337h-1V342h-1V336h-1V336h-1V335.5h-1V336.5h-1V336h-1V342.5h-1V339.5h-1V338.5h-1V339h-1V336h-1V338h-1V339.5h-1V341h-1V336h-1V336.5h-1V336h-1V335.5h-1V337h-1V344h-1V337.5h-1V337.5h-1V338.5h-1V336.5h-1V339h-1V339.5h-1V339h-1V337h-1V336.5h-1V336h-1V336h-1V335.5h-1V339.5h-1V336.5h-1V339h-1V338.5h-1V335.5h-1V338.5h-1V336.5h-1V337.5h-1V335.5h-1V336h-1V342.5h-1V339.5h-1V340h-1V340h-1V339h-1V342h-1V338.5h-1V337.5h-1V339.5h-1V339.5h-1V339.5h-1V336h-1V337.5h-1V339h-1V336h-1V335.5h-1V336.5h-1V338h-1V340.5h-1V339.5h-1V340h-1V338.5h-1V338.5h-1V338h-1V339h-1V337.5h-1V339.5h-1V337.5h-1V336.5h-1V338h-1V336.5h-1V336h-1V339h-1V338h-1V338h-1V338.5h-1V338.5h-1V344h-1V342.5h-1V337h-1V337.5h-1V336h-1V335.5h-1V339h-1V337.5h-1V337.5h-1V338.5h-1V339.5h-1V340.5h-1V338.5h-1V340h-1V339h-1V338.5h-1V339h-1V336.5h-1V339h-1V339h-1V342.5h-1V338.5h-1V336.5h-1V340.5h-1V337.5h-1V336h-1V340h-1V344h-1V337.5h-1V336.5h-1V338h-1V335.5h-1V340h-1V339.5h-1V337.5h-1V335.5h-1V336.5h-1V340.5h-1V337h-1V338h-1V338.5h-1V335.5h-1V339.5h-1V336.5h-1V341h-1V338.5h-1V337.5h-1V337h-1V339h-1V336h-1V337.5h-1V339h-1V338.5h-1V336.5h-1V338h-1V335.5h-1V337h-1V340h-1V336.5h-1V336.5h-1V338h-1V339.5h-1V338.5h-1V338.5h-1V340h-1V336h-1V340h-1V335.5h-1V336h-1V339.5h-1V336.5h-1V336h-1V336.5h-1V338.5h-1V335.5h-1V335.5h-1V335.5h-1V336.5h-1V339.5h-1V339h-1V335.5h-1V337.5h-1V337.5h-1V339.5h-1V335.5h-1V339.5h-1V339h-1V339.5h-1V339.5h-1V336h-1V338.5h-1V335.5h-1V339.5h-1V341h-1V340h-1V335.5h-1V338h-1V340h-1V338.5h-1V337.5h-1V337h-1V338h-1V336.5h-1V336.5h-1V339h-1V338.5h-1V338h-1V337h-1V339.5h-1V336h-1V336.5h-1V339.5h-1V336h-1V338h-1V337.5h-1V336.5h-1V338h-1V339.5h-1V341h-1V338.5h-1V336h-1V336h-1V336h-1V338.5h-1V338h-1V339.5h-1V338h-1V339h-1V340h-1V339.5h-1V336.5h-1V336h-1V342h-1V339h-1V340h-1V340h-1V336h-1V338h-1V338h-1V337.5h-1V338h-1V339.5h-1V339.5h-1V339h-1V335.5h-1V339.5h-1V340.5h-1V338h-1V339h-1V336.5h-1V339h-1V339.5h-1V338h-1V335.5h-1V337h-1V340h-1V338h-1V336h-1V336.5h-1V337h-1V339.5h-1V338.5h-1V336.5h-1V339.5h-1V337.5h-1V336h-1V338h-1V338h-1V340h-1V340h-1V338.5h-1V337h-1V337.5h-1V337h-1V338.5h-1V339.5h-1V338h-1V339h-1V341h-1V339.5h-1V341.5h-1V339.5h-1V340h-1V339h-1V336.5h-1V339.5h-1V340h-1V340h-1V339.5h-1V336h-1V341.5h-1V335.5h-1V336.5h-1V335.5h-1V337h-1V339.5h-1V342h-1V338h-1V338h-1V338.5h-1V338h-1V336h-1V335.5h-1V337.5h-1V336h-1V338.5h-1V336.5h-1V338h-1V340.5h-1V340h-1V340h-1V340.5h-1V336.5h-1V339h-1V339h-1V339h-1V337.5h-1V338h-1V336h-1V335.5h-1V339.5h-1V338h-1V335.5h-1V338.5h-1V336h-1V335.5h-1V337h-1V339h-1V337.5h-1V337.5h-1V340.5h-1V338h-1V340h-1V336h-1V339h-1V338.5h-1V336h-1V336h-1V336h-1V339h-1V338.5h-1V339.5h-1V338h-1V339h-1V335.5h-1V339h-1V336.5h-1V336.5h-1V339.5h-1V336h-1V339h-1V340h-1V339.5h-1V335.5h-1V336.5h-1V337.5h-1V337.5h-1V336.5h-1V339h-1V337.5h-1V338h-1V341h-1V343h-1V335.5h-1V337.5h-1V343h-1V338.5h-1V335.5h-1V340h-1V336.5h-1V339h-1V337.5h-1V339.5h-1V338.5h-1V340h-1V340h-1V340.5h-1V338.5h-1V338h-1V337.5h-1V344h-1V342.5h-1V337.5h-1V339h-1V338h-1V336h-1V335.5h-1V340h-1V339.5h-1V339.5h-1V335.5h-1V342.5h-1V338h-1V338.5h-1V336.5h-1V339.5h-1V335.5h-1V341.5h-1V337h-1V338.5h-1V338h-1V343h-1V337h-1V339h-1V338h-1V340.5h-1V337.5h-1V335.5h-1V337.5h-1V336h-1V335.5h-1V338h-1V343h-1V335.5h-1V339.5h-1V338.5h-1V338h-1V337.5h-1V337.5h-1V337h-1V337h-1V339.5h-1V340h-1V336h-1V342.5h-1V338h-1V337h-1V335.5h-1V338h-1V339h-1V337.5h-1V338h-1V338h-1V333.5h-1V337.5h-1V335h-1V332.5h-1V332h-1V332.5h-1V336h-1V337h-1V334h-1V333.5h-1V333h-1V335h-1V334.5h-1V334h-1V332.5h-1V333h-1V335.5h-1V334h-1V333h-1V335h-1V333h-1V337.5h-1V339h-1V333.5h-1V334.5h-1V334.5h-1V334h-1V338h-1V334.5h-1V334.5h-1V333h-1V333h-1V334.5h-1V336h-1V333h-1V333h-1V335.5h-1V334h-1V334.5h-1V334h-1V334h-1V334.5h-1V337h-1V336.5h-1V333h-1V336h-1V335h-1V334h-1V336.5h-1V335.5h-1V335h-1V334.5h-1V339.5h-1V334h-1V337h-1V334.5h-1V335.5h-1V333h-1V335h-1V336h-1V335h-1V336h-1V334.5h-1V335.5h-1V337.5h-1V335.5h-1V335h-1V335.5h-1V335h-1V337h-1V334h-1V335h-1V335.5h-1V334.5h-1V340h-1V334h-1V333.5h-1V334h-1V334.5h-1V336.5h-1V333.5h-1V333.5h-1V334.5h-1V339.5h-1V334.5h-1V335h-1V334h-1V336h-1V334h-1V336.5h-1V333.5h-1V336h-1V334h-1V337.5h-1V333h-1V333.5h-1V334.5h-1V333.5h-1V336h-1V336h-1V336h-1V338.5h-1V339.5h-1V334.5h-1V333.5h-1V336.5h-1V337.5h-1V336h-1V335.5h-1V333.5h-1V333.5h-1V336.5h-1V336h-1V335h-1V333.5h-1V333.5h-1V336.5h-1V336h-1V334.5h-1V333.5h-1V335h-1V336.5h-1V335.5h-1V336.5h-1V335h-1V334h-1V336h-1V335.5h-1V337.5h-1V335.5h-1V335.5h-1V335h-1V336.5h-1V333.5h-1V333.5h-1V336.5h-1V334.5h-1V334h-1V336h-1V337.5h-1V336h-1V336.5h-1V336h-1V338h-1V334.5h-1V334h-1V334.5h-1V335h-1V336h-1V334h-1V334h-1V335.5h-1V334h-1V334h-1V336h-1V338.5h-1V335.5h-1V333.5h-1V336h-1Z" fill="#6f97e4"/>
<rect x="279" y="351" width="718" height="1" fill="#262626"/>
<rect x="279" y="351" width="718" height="14" fill="#3a3a3a"/>
<rect x="279" y="351" width="718" height="1" fill="#2c2c2c"/>
<g fill="#e0e0e0"><rect x="283" y="357.5" width="5" height="1.5"/><rect x="284.75" y="355.7" width="1.5" height="5"/><rect x="297" y="357.5" width="5" height="1.5"/><path d="M316 354.5 v6 l-3.5 -3 z"/></g>
<rect x="308" y="352" width="1" height="12" fill="#2c2c2c"/>
<rect x="322" y="352" width="1" height="12" fill="#2c2c2c"/>
<rect x="324" y="352" width="181" height="13" fill="#4a4a4a"/>
<path d="M500.5 353 v11 M502.5 353 v11 M326.5 353 v11" stroke="#2e2e2e" stroke-width="1"/>
<rect x="505" y="352" width="430" height="13" fill="#333"/>
<g fill="#e0e0e0"><path d="M939.5 354.5 v6 l3.5 -3 z"/><rect x="953" y="357.5" width="5" height="1.5"/><rect x="954.75" y="355.7" width="1.5" height="5"/><rect x="972" y="357.5" width="5" height="1.5"/><path d="M988 354.5 v6 l-3.5 -3 z M990 354.5 v6 l3.5 -3 z"/></g>
<rect x="279" y="365" width="718" height="26" fill="#3d3d3d"/>
<rect x="279" y="365" width="718" height="1" fill="#2c2c2c"/>
<circle cx="291" cy="378" r="5" fill="#e0101a" stroke="#f0f0f0" stroke-width="1.3"/>
<circle cx="295" cy="382" r="3.3" fill="#f4f4f4" stroke="#222" stroke-width="0.5"/><path d="M294.1 380.4 v3.2 M295.9 380.4 v3.2" stroke="#111" stroke-width="1"/>
<circle cx="312" cy="378" r="5" fill="#e0101a" stroke="#f0f0f0" stroke-width="1.3"/>
<g fill="#e8e8e8"><rect x="328.5" y="373" width="2" height="10"/><path d="M337 373 L330.5 378 L337 383 Z"/><path d="M348.5 373 L355 378 L348.5 383 Z"/><rect x="355" y="373" width="2" height="10"/><rect x="369" y="373" width="10" height="10"/><path d="M389.5 372.5 L399.5 378 L389.5 383.5 Z"/></g>
<path d="M410 373 v10 M412 374 v9" stroke="#e8b000" stroke-width="1.6"/><path d="M413 381 l6 -8 l2 1.5 l-6 8 z" fill="#50a0e0" stroke="#ddd" stroke-width="0.5"/>
<path d="M436 378 L440 374 A5.5 5.5 0 1 0 440 382 Z" fill="#eee"/><path d="M440 375 a3 3 0 0 1 0 6" stroke="#c8b060" stroke-width="1.2" fill="none"/>
<rect x="542" y="373" width="104" height="3" fill="#e8e8e8"/>
<rect x="542" y="374" width="104" height="1" fill="#9a9a9a"/>
<rect x="586.5" y="368.5" width="14" height="12" fill="#f2f2f2" stroke="#888" stroke-width="1"/>
<path d="M591.5 371 v7 M593.5 371 v7 M595.5 371 v7" stroke="#333" stroke-width="1"/>
<path d="M602 380 l3.5 4 h-7 z" fill="#f2f2f2"/>
<rect x="737.5" y="372.5" width="61" height="13" fill="#333333" stroke="#2a2a2a" stroke-width="1"/>
<rect x="802.5" y="372.5" width="61" height="13" fill="#333333" stroke="#2a2a2a" stroke-width="1"/>
<rect x="866.5" y="372.5" width="61" height="13" fill="#333333" stroke="#2a2a2a" stroke-width="1"/>
<rect x="933.5" y="372.5" width="61" height="13" fill="#333333" stroke="#2a2a2a" stroke-width="1"/>
<path d="M308.5 694.5 V444.5 Q308.5 439.5 313.5 439.5 H1033.5 Q1038.5 439.5 1038.5 444.5 V694.5 Z" fill="#dbe4ed" stroke="#aab4be" stroke-width="1"/>
<defs><linearGradient id="tg200" x1="0" y1="0" x2="0" y2="1"><stop offset="0" stop-color="#e8eef4"/><stop offset="1" stop-color="#d8e2ec"/></linearGradient></defs>
<path d="M309 464 V444 Q309 440 313 440 H1034 Q1038 440 1038 444 V464 Z" fill="url(#tg200)"/>
<rect x="314" y="464" width="720" height="1" fill="#f4f8fb"/>
<rect x="317" y="448" width="12" height="13.5" fill="#4a0008" stroke="#d06070" stroke-width="0.6"/>
<text x="318.5" y="458.5" font-size="8" fill="#c04048" font-weight="bold">fr</text>
<rect x="946.5" y="447.5" width="26" height="14" rx="2" fill="#d5dee8" stroke="#a4aeb8" stroke-width="1"/>
<rect x="955.0" y="454.5" width="9" height="2.6" rx="1.2" fill="#fafafa" stroke="#4a4a4a" stroke-width="0.9"/>
<rect x="975.5" y="447.5" width="26" height="14" rx="2" fill="#d5dee8" stroke="#a4aeb8" stroke-width="1"/>
<rect x="984.5" y="451.0" width="8" height="7" rx="1" fill="#fafafa" stroke="#4a4a4a" stroke-width="0.9"/><rect x="986.5" y="453.3" width="4" height="2.4" fill="#fafafa" stroke="#4a4a4a" stroke-width="0.9"/>
<rect x="1004.5" y="447.5" width="26" height="14" rx="2" fill="#d5dee8" stroke="#a4aeb8" stroke-width="1"/>
<path d="M1014.0 451.5 l7 6 M1021.0 451.5 l-7 6" stroke="#4a4a4a" stroke-width="3.2" stroke-linecap="round"/><path d="M1014.0 451.5 l7 6 M1021.0 451.5 l-7 6" stroke="#fafafa" stroke-width="1.6" stroke-linecap="round"/>
<rect x="315" y="465" width="718" height="224" fill="#3c3c3c"/>
<rect x="315" y="465" width="718" height="57" fill="#454545"/>
<rect x="315" y="465" width="718" height="1" fill="#262626"/>
<defs><clipPath id="csw200"><rect x="315" y="466" width="181" height="56"/></clipPath><clipPath id="cuw200"><rect x="496" y="466" width="537" height="56"/></clipPath></defs>
<defs><g id="rmw200"><path d="M315 467.5V467.5h1V467.5h1V468h1V467h1V467.5h1V466h1V467.5h1V467h1V467.5h1V468.5h1V468.5h1V468h1V467.5h1V468h1V468.5h1V468.5h1V467.5h1V467.5h1V468h1V468h1V467h1V467.5h1V467.5h1V467.5h1V468h1V468.5h1V466h1V466h1V467.5h1V467h1V467.5h1V467h1V468h1V468.5h1V468h1V468h1V467.5h1V467.5h1V466h1V466.5h1V467h1V466.5h1V466.5h1V467h1V466.5h1V467h1V470.5h1V472h1V469.5h1V470.5h1V472h1V470.5h1V469h1V470h1V469.5h1V470.5h1V469h1V466.5h1V467h1V467h1V466.5h1V466h1V467h1V466.5h1V469h1V470.5h1V469.5h1V466h1V469h1V472h1V466h1V466h1V468h1V470h1V468.5h1V466.5h1V467h1V466.5h1V466.5h1V467h1V467h1V466.5h1V466.5h1V466.5h1V469h1V470h1V466h1V468.5h1V468h1V466h1V468.5h1V470.5h1V469h1V470.5h1V468h1V466.5h1V467h1V467.5h1V467.5h1V469.5h1V468h1V469h1V469.5h1V468h1V468h1V469.5h1V468h1V466.5h1V466.5h1V466.5h1V466.5h1V467h1V466.5h1V466.5h1V466.5h1V466.5h1V467h1V466.5h1V466.5h1V466h1V466.5h1V466.5h1V466.5h1V466.5h1V467h1V466.5h1V467h1V467h1V466.5h1V466.5h1V466.5h1V466.5h1V466.5h1V466.5h1V466.5h1V467h1V467h1V467h1V466.5h1V467h1V466.5h1V466.5h1V467h1V467h1V466h1V466.5h1V466.5h1V466.5h1V466.5h1V467h1V466.5h1V466.5h1V466.5h1V466.5h1V466.5h1V466.5h1V466.5h1V466.5h1V466.5h1V467h1V466.5h1V466.5h1V466.5h1V467h1V466.5h1V466.5h1V466.5h1V466.5h1V466.5h1V466.5h1V466.5h1V467h1V466.5h1V466.5h1V466.5h1V466.5h1V466.5h1V466.5h1V466.5h1V466.5h1V467h1V466.5h1V467h1V466.5h1V466.5h1V466.5h1V466.5h1V466.5h1V466.5h1V467h1V466.5h1V467h1V466.5h1V467h1V466.5h1V467h1V466.5h1V466h1V466.5h1V466.5h1V467h1V466h1V466.5h1V466.5h1V466.5h1V466.5h1V466.5h1V466.5h1V466h1V466.5h1V466.5h1V467h1V466.5h1V467h1V466.5h1V466h1V467h1V467h1V466.5h1V466.5h1V466.5h1V466.5h1V467h1V467h1V466.5h1V466h1V467h1V467h1V466.5h1V467h1V467h1V466.5h1V466.5h1V466.5h1V467h1V466.5h1V466.5h1V466h1V467h1V466.5h1V466h1V467h1V466.5h1V466.5h1V467h1V467h1V466.5h1V467h1V466.5h1V466.5h1V466.5h1V466.5h1V466.5h1V466.5h1V467h1V466.5h1V466.5h1V466.5h1V466h1V466.5h1V467h1V466.5h1V466.5h1V466.5h1V466.5h1V466.5h1V466.5h1V466h1V466.5h1V466.5h1V466.5h1V466.5h1V467h1V467h1V466.5h1V466.5h1V466.5h1V466h1V466.5h1V466.5h1V467h1V466.5h1V466.5h1V466.5h1V466.5h1V466.5h1V466h1V467h1V466.5h1V466.5h1V467h1V466h1V467h1V466.5h1V466.5h1V466.5h1V466.5h1V466.5h1V466.5h1V467h1V466.5h1V466.5h1V467h1V467h1V466.5h1V467h1V467h1V466.5h1V467h1V467h1V466.5h1V466.5h1V467h1V466.5h1V466.5h1V467h1V466.5h1V466.5h1V466.5h1V466h1V466.5h1V466.5h1V467h1V467h1V466.5h1V466.5h1V467h1V467h1V466.5h1V467h1V466h1V466.5h1V467h1V467h1V467h1V466.5h1V466.5h1V466h1V467h1V466.5h1V467h1V466.5h1V467h1V466.5h1V466.5h1V467h1V467h1V466.5h1V466.5h1V467h1V466h1V466.5h1V466.5h1V466.5h1V466.5h1V467h1V467h1V466.5h1V466.5h1V467h1V466h1V466.5h1V466.5h1V466.5h1V467h1V466.5h1V467h1V466.5h1V467h1V466.5h1V466h1V467h1V466.5h1V466.5h1V466.5h1V467h1V466.5h1V466.5h1V466.5h1V466.5h1V466h1V466.5h1V466.5h1V466.5h1V466.5h1V466.5h1V466.5h1V466.5h1V467h1V466h1V467h1V467h1V466h1V466.5h1V466.5h1V466.5h1V467h1V466.5h1V466h1V467h1V467h1V466.5h1V467h1V466.5h1V466.5h1V466.5h1V467h1V467h1V467h1V466.5h1V466.5h1V466.5h1V466.5h1V466.5h1V466.5h1V467h1V466.5h1V466.5h1V467h1V466h1V466.5h1V466.5h1V467h1V466.5h1V466.5h1V466h1V466.5h1V466.5h1V466.5h1V467h1V466.5h1V467h1V466.5h1V467h1V466h1V466.5h1V466.5h1V466.5h1V466.5h1V466.5h1V466.5h1V466h1V466.5h1V467h1V467h1V466.5h1V466h1V467h1V467h1V466.5h1V467h1V467h1V466.5h1V466.5h1V466.5h1V466.5h1V466.5h1V467h1V466h1V466.5h1V466h1V466.5h1V466.5h1V467h1V466.5h1V466.5h1V466.5h1V467h1V466.5h1V466h1V466.5h1V466.5h1V466.5h1V466.5h1V466.5h1V467h1V466.5h1V466.5h1V467h1V466.5h1V466.5h1V466.5h1V467h1V467h1V466.5h1V466.5h1V466.5h1V466.5h1V467h1V466.5h1V467h1V467h1V466.5h1V466.5h1V466.5h1V466.5h1V466.5h1V466h1V466.5h1V466.5h1V466.5h1V466h1V466.5h1V466h1V466.5h1V466.5h1V466h1V466.5h1V466.5h1V466.5h1V466.5h1V467h1V466.5h1V467h1V466.5h1V467h1V466h1V466.5h1V466h1V467h1V466.5h1V466.5h1V466.5h1V467h1V466.5h1V466.5h1V466h1V466.5h1V466.5h1V466.5h1V467h1V466.5h1V466h1V466.5h1V466h1V467h1V466.5h1V466.5h1V467h1V466.5h1V466.5h1V466.5h1V466.5h1V466.5h1V466.5h1V467h1V466h1V466.5h1V466.5h1V467h1V467h1V466.5h1V466.5h1V467h1V466.5h1V466.5h1V466.5h1V466.5h1V466.5h1V467h1V467h1V467h1V466.5h1V466.5h1V466.5h1V466.5h1V466.5h1V466.5h1V467h1V467h1V466.5h1V466.5h1V466.5h1V466.5h1V466h1V466.5h1V467h1V466.5h1V466.5h1V467h1V467h1V467h1V466.5h1V467h1V466.5h1V466.5h1V466.5h1V466.5h1V466.5h1V467h1V467h1V466.5h1V466.5h1V467h1V466.5h1V466.5h1V466.5h1V467h1V467h1V466.5h1V466.5h1V466h1V466.5h1V466.5h1V467h1V466.5h1V467h1V467h1V466.5h1V466.5h1V466.5h1V466.5h1V466.5h1V466.5h1V467h1V467h1V466.5h1V467h1V467h1V467h1V466.5h1V467h1V467h1V466h1V466.5h1V466h1V466.5h1V467h1V467h1V466.5h1V466.5h1V467h1V467h1V466.5h1V466.5h1V466.5h1V466.5h1V466.5h1V466.5h1V466.5h1V466.5h1V466.5h1V466.5h1V466.5h1V466.5h1V467h1V466.5h1V466.5h1V466.5h1V467h1V466.5h1V466.5h1V467h1V466.5h1V467h1V466.5h1V467h1V468.5h1V468h1V468h1V467.5h1V466h1V468.5h1V467.5h1V468.5h1V468.5h1V467.5h1V468.5h1V466h1V469h1V469h1V468.5h1V469.5h1V469h1V469.5h1V469h1V469h1V467.5h1V469h1V468h1V468h1V468h1V468h1V468.5h1V468h1V468.5h1V467.5h1V469h1V469h1V468h1V468.5h1V468h1V467.5h1V467h1V469.5h1V469h1V471h1V474h1V470h1V474h1V477.5h1V479h1V466h1V479h1V479h1V466h1V475.5h1V479h1V479h1V479h1V479h1V479h1V479h1V479h1V478.5h1V479h1V479h1V466h1V479h1V466h1V478h1V479h1V479h1V466h1V479h1V475h1V479h1V479h1V479h1V479h1V479h1V479h1V477h1V492h-1V479h-1V492h-1V479h-1V479h-1V479h-1V479h-1V479h-1V479h-1V479h-1V479h-1V479h-1V492h-1V479h-1V479h-1V479h-1V479h-1V479h-1V479h-1V479h-1V479h-1V479h-1V479h-1V479h-1V479h-1V479h-1V479h-1V481h-1V479h-1V479h-1V479h-1V485h-1V479h-1V481.5h-1V482.5h-1V484h-1V488h-1V486.5h-1V490h-1V490h-1V490.5h-1V489.5h-1V488h-1V487h-1V487h-1V487h-1V488h-1V488.5h-1V489h-1V487.5h-1V487h-1V492h-1V490h-1V490h-1V488.5h-1V489h-1V490.5h-1V488h-1V492h-1V489h-1V488h-1V488h-1V490h-1V488.5h-1V488h-1V487h-1V488.5h-1V488h-1V487.5h-1V492h-1V489h-1V487.5h-1V487.5h-1V492h-1V490h-1V488h-1V492h-1V491h-1V491.5h-1V491.5h-1V492h-1V491.5h-1V491.5h-1V491.5h-1V491.5h-1V491h-1V491h-1V491.5h-1V491h-1V492h-1V492h-1V491h-1V491h-1V492h-1V491h-1V492h-1V491h-1V492h-1V491h-1V491h-1V491.5h-1V491h-1V491.5h-1V491h-1V491.5h-1V491.5h-1V491.5h-1V491h-1V491h-1V491h-1V491h-1V491h-1V491h-1V491h-1V491h-1V491h-1V491h-1V491h-1V491h-1V491h-1V491.5h-1V491h-1V492h-1V491.5h-1V492h-1V491h-1V491h-1V492h-1V492h-1V492h-1V491h-1V491h-1V491h-1V491h-1V491.5h-1V491.5h-1V491h-1V491h-1V491h-1V492h-1V491.5h-1V491.5h-1V491h-1V491h-1V491.5h-1V491.5h-1V491h-1V491h-1V491h-1V491.5h-1V491h-1V491.5h-1V491.5h-1V492h-1V491h-1V492h-1V491.5h-1V491h-1V491h-1V491h-1V491.5h-1V491h-1V491h-1V491h-1V491h-1V491h-1V491h-1V491.5h-1V491.5h-1V491.5h-1V492h-1V491h-1V491h-1V491h-1V491h-1V491h-1V492h-1V491.5h-1V492h-1V491h-1V491h-1V491h-1V491.5h-1V491h-1V491.5h-1V491h-1V491h-1V491.5h-1V491h-1V492h-1V491h-1V491h-1V491.5h-1V491h-1V491h-1V491.5h-1V491h-1V491.5h-1V491h-1V491.5h-1V491.5h-1V491h-1V491h-1V491h-1V491h-1V491.5h-1V491.5h-1V491h-1V491.5h-1V491h-1V491h-1V491.5h-1V491h-1V491h-1V491.5h-1V491h-1V491h-1V492h-1V491h-1V491.5h-1V491.5h-1V491.5h-1V491.5h-1V491h-1V491.5h-1V492h-1V491.5h-1V491h-1V491h-1V491h-1V491.5h-1V491h-1V491.5h-1V491h-1V491h-1V491h-1V491h-1V491h-1V491h-1V491.5h-1V491.5h-1V491h-1V491.5h-1V491h-1V492h-1V491.5h-1V491h-1V491h-1V491.5h-1V491h-1V491.5h-1V491.5h-1V491h-1V491h-1V491h-1V491h-1V491h-1V491h-1V491h-1V491h-1V491.5h-1V492h-1V491h-1V491.5h-1V491h-1V491h-1V491.5h-1V492h-1V491h-1V491.5h-1V491h-1V491.5h-1V491.5h-1V491.5h-1V491h-1V491h-1V491.5h-1V491h-1V491h-1V491h-1V491h-1V491h-1V491.5h-1V491h-1V492h-1V491h-1V491h-1V491.5h-1V491h-1V492h-1V491h-1V491h-1V491h-1V491h-1V491h-1V491h-1V492h-1V491.5h-1V491h-1V491h-1V492h-1V491.5h-1V491h-1V491.5h-1V491h-1V491.5h-1V491h-1V491h-1V491.5h-1V491.5h-1V491h-1V491.5h-1V491h-1V491h-1V491.5h-1V491.5h-1V491.5h-1V491.5h-1V491h-1V491.5h-1V491h-1V492h-1V491h-1V491h-1V491h-1V491h-1V491h-1V491h-1V491h-1V491.5h-1V491h-1V491h-1V491.5h-1V491h-1V491h-1V491.5h-1V491.5h-1V491.5h-1V491h-1V491.5h-1V491.5h-1V491.5h-1V491.5h-1V491.5h-1V491h-1V491h-1V491h-1V491h-1V491h-1V491.5h-1V491h-1V491.5h-1V491h-1V492h-1V491.5h-1V491h-1V491h-1V491.5h-1V491h-1V491h-1V492h-1V492h-1V491.5h-1V491h-1V491h-1V491h-1V491h-1V492h-1V491h-1V491.5h-1V491h-1V491h-1V491.5h-1V491.5h-1V491.5h-1V491.5h-1V492h-1V491.5h-1V491.5h-1V491h-1V491h-1V491.5h-1V491h-1V491.5h-1V491h-1V491.5h-1V491h-1V491.5h-1V491h-1V491h-1V491h-1V491h-1V491h-1V491h-1V491.5h-1V491h-1V491h-1V491.5h-1V491.5h-1V491.5h-1V492h-1V491h-1V491.5h-1V491.5h-1V491h-1V491.5h-1V491h-1V492h-1V491.5h-1V491.5h-1V491h-1V492h-1V491h-1V491.5h-1V491h-1V491.5h-1V491h-1V491.5h-1V491.5h-1V492h-1V491.5h-1V491h-1V491.5h-1V491h-1V491h-1V491.5h-1V491.5h-1V491.5h-1V491h-1V491h-1V491h-1V491h-1V491h-1V491h-1V491.5h-1V491h-1V491.5h-1V491h-1V491.5h-1V492h-1V491.5h-1V491h-1V491h-1V491.5h-1V491h-1V491.5h-1V491h-1V491h-1V491.5h-1V491h-1V491h-1V491h-1V491h-1V491.5h-1V491h-1V491h-1V491h-1V492h-1V491.5h-1V491h-1V491h-1V492h-1V491h-1V491h-1V491h-1V491h-1V491h-1V491h-1V491.5h-1V492h-1V491h-1V491h-1V491.5h-1V491h-1V491.5h-1V491h-1V491.5h-1V491h-1V491.5h-1V491h-1V491h-1V491h-1V491h-1V491.5h-1V492h-1V491.5h-1V491.5h-1V491.5h-1V491h-1V491h-1V492h-1V491h-1V491h-1V491h-1V491.5h-1V491h-1V491h-1V491h-1V491h-1V491.5h-1V491.5h-1V491h-1V491.5h-1V492h-1V491.5h-1V492h-1V491h-1V491h-1V492h-1V491h-1V491.5h-1V491h-1V491h-1V491h-1V491h-1V491h-1V491.5h-1V491h-1V491h-1V491.5h-1V491h-1V491h-1V491h-1V491h-1V491h-1V491.5h-1V491h-1V491h-1V491h-1V491h-1V491h-1V491h-1V491.5h-1V492h-1V491h-1V492h-1V491h-1V491h-1V491h-1V491h-1V491.5h-1V491h-1V491.5h-1V492h-1V491h-1V491.5h-1V491h-1V491h-1V491h-1V491h-1V491.5h-1V491h-1V491h-1V491h-1V491h-1V491h-1V491h-1V492h-1V491h-1V491.5h-1V491h-1V491.5h-1V491.5h-1V491h-1V491h-1V491h-1V491.5h-1V491h-1V491h-1V491.5h-1V491h-1V492h-1V491h-1V491h-1V492h-1V491h-1V491h-1V491.5h-1V491h-1V491.5h-1V491h-1V491h-1V491h-1V491h-1V491h-1V491h-1V491.5h-1V492h-1V491.5h-1V491h-1V491.5h-1V491h-1V492h-1V491h-1V491h-1V491h-1V491h-1V491h-1V491.5h-1V492h-1V491.5h-1V491h-1V491h-1V491h-1V491h-1V492h-1V491h-1V491.5h-1V491.5h-1V492h-1V491h-1V491.5h-1V491h-1V491h-1V491h-1V491h-1V491h-1V491h-1V491.5h-1V492h-1V491h-1V491h-1V491h-1V491h-1V491h-1V491.5h-1V488.5h-1V488.5h-1V492h-1V486.5h-1V489.5h-1V489h-1V487h-1V486.5h-1V487.5h-1V487.5h-1V489.5h-1V491.5h-1V488.5h-1V486h-1V488.5h-1V487.5h-1V484h-1V484h-1V484h-1V487h-1V487h-1V487.5h-1V489h-1V491h-1V491h-1V491.5h-1V491h-1V492h-1V492h-1V491h-1V492h-1V491h-1V488.5h-1V486.5h-1V487.5h-1V492h-1V485h-1V492h-1V484.5h-1V489h-1V492h-1V486h-1V490h-1V491h-1V491h-1V491h-1V491h-1V491.5h-1V491h-1V491h-1V488h-1V485h-1V486.5h-1V486.5h-1V487.5h-1V485.5h-1V484h-1V485h-1V485.5h-1V483h-1V483.5h-1V492h-1V491h-1V492h-1V491.5h-1V491h-1V491h-1V491h-1V491h-1V492h-1V489.5h-1V489.5h-1V490h-1V489.5h-1V488.5h-1V489h-1V489h-1V490.5h-1V490.5h-1V489.5h-1V489.5h-1V489.5h-1V490h-1V490h-1V489.5h-1V490.5h-1V490h-1V489.5h-1V489.5h-1V490h-1V489.5h-1V489.5h-1V488.5h-1V489h-1V489.5h-1V489.5h-1V492h-1V489.5h-1V492h-1V489h-1V490h-1V489.5h-1V492h-1V488.5h-1V488.5h-1V489.5h-1V490h-1Z"/><path d="M315 495.5V495.5h1V493h1V496.5h1V495.5h1V496.5h1V494.5h1V496.5h1V496.5h1V496h1V496.5h1V496.5h1V496.5h1V496.5h1V494.5h1V496.5h1V496h1V496.5h1V496h1V495.5h1V495h1V496h1V496h1V495h1V495h1V493h1V496h1V496.5h1V495.5h1V496h1V495.5h1V496h1V496.5h1V495.5h1V493h1V495.5h1V495h1V495h1V495h1V494h1V493.5h1V493.5h1V494h1V494h1V493.5h1V494h1V497h1V501h1V500h1V501h1V501.5h1V496.5h1V500h1V493h1V501h1V500h1V500h1V497h1V494h1V493.5h1V494h1V493h1V493.5h1V493.5h1V494h1V498h1V497.5h1V501h1V499h1V493h1V497.5h1V493h1V493h1V500.5h1V496h1V496.5h1V494h1V493.5h1V494h1V494h1V494h1V494h1V493.5h1V494h1V494h1V495h1V500.5h1V500h1V498h1V500h1V501h1V493h1V497h1V498h1V497.5h1V496h1V494h1V493h1V499h1V493h1V496.5h1V499h1V497.5h1V496.5h1V495.5h1V499h1V497.5h1V495.5h1V493.5h1V494h1V493.5h1V493.5h1V494h1V493.5h1V494h1V494h1V494h1V493.5h1V494h1V493.5h1V494h1V494h1V493.5h1V493.5h1V493.5h1V494h1V494h1V493h1V494h1V493.5h1V493h1V493.5h1V493.5h1V493.5h1V494h1V494h1V494h1V494h1V494h1V494h1V493.5h1V493.5h1V494h1V493.5h1V494h1V493h1V494h1V494h1V494h1V493h1V493h1V494h1V493.5h1V494h1V493.5h1V494h1V493.5h1V493.5h1V494h1V494h1V494h1V494h1V494h1V494h1V494h1V493h1V494h1V494h1V494h1V494h1V493.5h1V494h1V494h1V493.5h1V494h1V493.5h1V494h1V493.5h1V494h1V494h1V494h1V494h1V494h1V494h1V494h1V493.5h1V494h1V493.5h1V494h1V494h1V494h1V493.5h1V494h1V494h1V493.5h1V494h1V494h1V493.5h1V494h1V494h1V494h1V493.5h1V494h1V493.5h1V494h1V494h1V493h1V494h1V493h1V493h1V494h1V494h1V494h1V493.5h1V493.5h1V494h1V493h1V493h1V493.5h1V493.5h1V494h1V493.5h1V494h1V494h1V493.5h1V493h1V493.5h1V494h1V494h1V494h1V494h1V493.5h1V494h1V493.5h1V494h1V494h1V493.5h1V494h1V494h1V493h1V494h1V494h1V494h1V493.5h1V493h1V494h1V493.5h1V494h1V494h1V494h1V493.5h1V494h1V494h1V494h1V493.5h1V493h1V494h1V493.5h1V494h1V494h1V494h1V493h1V494h1V493.5h1V494h1V494h1V493.5h1V494h1V493.5h1V494h1V493.5h1V493.5h1V494h1V494h1V493h1V493h1V494h1V493.5h1V493.5h1V493.5h1V494h1V494h1V493.5h1V494h1V494h1V494h1V493.5h1V494h1V494h1V493.5h1V494h1V494h1V494h1V494h1V494h1V494h1V494h1V493.5h1V494h1V494h1V494h1V494h1V494h1V494h1V494h1V494h1V494h1V493.5h1V493.5h1V494h1V493.5h1V494h1V493.5h1V493h1V494h1V493.5h1V494h1V493h1V494h1V494h1V494h1V493.5h1V494h1V494h1V493.5h1V493h1V494h1V494h1V493.5h1V493h1V494h1V494h1V494h1V494h1V493.5h1V494h1V493.5h1V494h1V494h1V493.5h1V493.5h1V494h1V494h1V493.5h1V494h1V493.5h1V493.5h1V494h1V494h1V494h1V494h1V494h1V493.5h1V494h1V493.5h1V494h1V493.5h1V493.5h1V494h1V494h1V493.5h1V494h1V494h1V493h1V493.5h1V494h1V493h1V494h1V494h1V494h1V493.5h1V494h1V494h1V493h1V494h1V494h1V494h1V494h1V493.5h1V494h1V493h1V494h1V494h1V494h1V494h1V494h1V493.5h1V494h1V493h1V494h1V493.5h1V493.5h1V493h1V494h1V494h1V493.5h1V494h1V494h1V494h1V494h1V493.5h1V494h1V494h1V494h1V494h1V493.5h1V494h1V493.5h1V493h1V493h1V494h1V493.5h1V494h1V493h1V494h1V494h1V494h1V494h1V494h1V494h1V493.5h1V494h1V493.5h1V493.5h1V494h1V494h1V494h1V494h1V493.5h1V494h1V494h1V493h1V494h1V494h1V493.5h1V494h1V493.5h1V494h1V494h1V494h1V494h1V494h1V494h1V494h1V493.5h1V493.5h1V494h1V494h1V493.5h1V493.5h1V493.5h1V494h1V494h1V494h1V493h1V493h1V494h1V493.5h1V494h1V494h1V493.5h1V494h1V494h1V493.5h1V493.5h1V494h1V494h1V493.5h1V493.5h1V494h1V493h1V493h1V493.5h1V494h1V494h1V494h1V494h1V494h1V494h1V493.5h1V493.5h1V493h1V494h1V494h1V494h1V493.5h1V494h1V494h1V494h1V494h1V494h1V494h1V493.5h1V494h1V494h1V494h1V493.5h1V493.5h1V494h1V493.5h1V493h1V494h1V494h1V493.5h1V494h1V494h1V494h1V494h1V494h1V494h1V494h1V493.5h1V494h1V494h1V493.5h1V494h1V493.5h1V494h1V493.5h1V494h1V493h1V493.5h1V494h1V494h1V493.5h1V494h1V494h1V493.5h1V493h1V494h1V493.5h1V494h1V494h1V493.5h1V493.5h1V494h1V494h1V493h1V493.5h1V494h1V494h1V494h1V493.5h1V494h1V494h1V493.5h1V493h1V494h1V493.5h1V493.5h1V494h1V494h1V493.5h1V494h1V494h1V493.5h1V494h1V494h1V494h1V493h1V494h1V493h1V494h1V493h1V494h1V493.5h1V493.5h1V494h1V494h1V494h1V494h1V494h1V494h1V494h1V494h1V493.5h1V493.5h1V494h1V494h1V494h1V494h1V493.5h1V494h1V493.5h1V493.5h1V494h1V493.5h1V494h1V494h1V493.5h1V494h1V493.5h1V493.5h1V494h1V494h1V493.5h1V494h1V493.5h1V493h1V494h1V493h1V494h1V493.5h1V493.5h1V494h1V494h1V494h1V494h1V494h1V493.5h1V494h1V494h1V494h1V493h1V494h1V494h1V493.5h1V493h1V493.5h1V493h1V494h1V494h1V494h1V493.5h1V494h1V494h1V493.5h1V494h1V493.5h1V494h1V493.5h1V494h1V493.5h1V493.5h1V494h1V494h1V494h1V493h1V493.5h1V494h1V493.5h1V493h1V493.5h1V493.5h1V494h1V494h1V494h1V493.5h1V493.5h1V493.5h1V493.5h1V494h1V494h1V494h1V493.5h1V493h1V494h1V495h1V496h1V495.5h1V497.5h1V497.5h1V498h1V497h1V496h1V496.5h1V496h1V498h1V498h1V498h1V497h1V496h1V493h1V497h1V498h1V497.5h1V493h1V497.5h1V497.5h1V496h1V497h1V497.5h1V497h1V496.5h1V497.5h1V493h1V496.5h1V497h1V497.5h1V497h1V496h1V498h1V495h1V494.5h1V493h1V496.5h1V497.5h1V493h1V501h1V500h1V504h1V503.5h1V501.5h1V502.5h1V500.5h1V506.5h1V503h1V506.5h1V506.5h1V506.5h1V506.5h1V506.5h1V504.5h1V505h1V506.5h1V506.5h1V506.5h1V506.5h1V506.5h1V506.5h1V506h1V506.5h1V506.5h1V506.5h1V506.5h1V506.5h1V506.5h1V506.5h1V493h1V503h1V506.5h1V506.5h1V493h1V506.5h1V506.5h-1V506.5h-1V506.5h-1V506.5h-1V506.5h-1V506.5h-1V506.5h-1V506.5h-1V506.5h-1V508h-1V506.5h-1V506.5h-1V506.5h-1V506.5h-1V506.5h-1V506.5h-1V508.5h-1V506.5h-1V506.5h-1V506.5h-1V506.5h-1V506.5h-1V506.5h-1V506.5h-1V506.5h-1V506.5h-1V506.5h-1V506.5h-1V506.5h-1V520h-1V506.5h-1V510.5h-1V513h-1V512.5h-1V513.5h-1V520h-1V513.5h-1V514.5h-1V516.5h-1V517h-1V520h-1V518.5h-1V520h-1V518.5h-1V517.5h-1V518h-1V517h-1V517h-1V517.5h-1V518h-1V516.5h-1V519h-1V520h-1V517.5h-1V518h-1V516.5h-1V518.5h-1V519h-1V518.5h-1V517h-1V520h-1V517.5h-1V518h-1V517h-1V516.5h-1V517h-1V517.5h-1V517h-1V518h-1V516.5h-1V517.5h-1V518.5h-1V517.5h-1V518.5h-1V517h-1V520h-1V518h-1V519.5h-1V520h-1V519.5h-1V519.5h-1V519h-1V519h-1V519.5h-1V519.5h-1V519h-1V519h-1V519.5h-1V519.5h-1V519.5h-1V519h-1V519.5h-1V520h-1V519.5h-1V519h-1V520h-1V519.5h-1V520h-1V519h-1V519.5h-1V519h-1V519.5h-1V519.5h-1V519.5h-1V519.5h-1V520h-1V519.5h-1V519.5h-1V519.5h-1V519h-1V519h-1V519h-1V519.5h-1V519.5h-1V519.5h-1V519.5h-1V519.5h-1V519h-1V519.5h-1V519h-1V519.5h-1V520h-1V519h-1V519.5h-1V519h-1V519h-1V519.5h-1V519.5h-1V519h-1V519.5h-1V519.5h-1V520h-1V520h-1V519.5h-1V519.5h-1V519.5h-1V519h-1V519.5h-1V519.5h-1V519.5h-1V519h-1V519h-1V519.5h-1V519.5h-1V519.5h-1V519h-1V519.5h-1V519h-1V519.5h-1V519.5h-1V519.5h-1V519.5h-1V519h-1V519.5h-1V519h-1V520h-1V519.5h-1V520h-1V519.5h-1V519.5h-1V519.5h-1V519h-1V519h-1V519h-1V519h-1V519.5h-1V519h-1V519.5h-1V519.5h-1V519.5h-1V519.5h-1V520h-1V520h-1V519.5h-1V519h-1V519h-1V519.5h-1V519.5h-1V519h-1V519.5h-1V519.5h-1V519.5h-1V519.5h-1V519.5h-1V519h-1V519.5h-1V519h-1V519h-1V520h-1V519.5h-1V520h-1V519h-1V519.5h-1V520h-1V519.5h-1V519.5h-1V519h-1V519.5h-1V519.5h-1V519.5h-1V519.5h-1V519.5h-1V519.5h-1V519.5h-1V519.5h-1V519.5h-1V519h-1V519.5h-1V519.5h-1V519.5h-1V519.5h-1V519.5h-1V519h-1V519.5h-1V519.5h-1V519h-1V520h-1V519h-1V519.5h-1V519.5h-1V519.5h-1V519h-1V519.5h-1V519h-1V519.5h-1V519h-1V519.5h-1V519h-1V519.5h-1V519.5h-1V519.5h-1V520h-1V520h-1V519h-1V519h-1V519h-1V519h-1V519.5h-1V519.5h-1V519h-1V519.5h-1V519.5h-1V519.5h-1V519.5h-1V519h-1V519.5h-1V519.5h-1V519h-1V520h-1V519.5h-1V519.5h-1V519.5h-1V520h-1V519.5h-1V520h-1V519.5h-1V519h-1V519.5h-1V519.5h-1V519h-1V519h-1V520h-1V519h-1V519.5h-1V519h-1V519h-1V519.5h-1V519.5h-1V519h-1V519.5h-1V519h-1V519.5h-1V519h-1V519h-1V519h-1V519.5h-1V519h-1V519h-1V519.5h-1V519.5h-1V519h-1V519.5h-1V519h-1V519.5h-1V519.5h-1V519h-1V519.5h-1V520h-1V520h-1V520h-1V519.5h-1V520h-1V519h-1V519.5h-1V519.5h-1V520h-1V520h-1V519.5h-1V519.5h-1V519.5h-1V519.5h-1V519.5h-1V519.5h-1V520h-1V519.5h-1V519.5h-1V519h-1V519.5h-1V519.5h-1V519.5h-1V519h-1V519.5h-1V519.5h-1V519h-1V519.5h-1V519.5h-1V519.5h-1V519.5h-1V519.5h-1V519.5h-1V520h-1V519h-1V519.5h-1V519h-1V519.5h-1V519h-1V519h-1V519.5h-1V519h-1V519.5h-1V519.5h-1V519.5h-1V519.5h-1V519.5h-1V519h-1V519h-1V519h-1V519.5h-1V519h-1V519.5h-1V519.5h-1V519h-1V519.5h-1V519.5h-1V520h-1V519.5h-1V519.5h-1V519h-1V519.5h-1V519.5h-1V519.5h-1V519.5h-1V519h-1V519.5h-1V519h-1V519.5h-1V519.5h-1V519.5h-1V519h-1V519.5h-1V519h-1V519h-1V519.5h-1V519h-1V519h-1V519.5h-1V519.5h-1V519.5h-1V519.5h-1V519h-1V519h-1V520h-1V520h-1V519.5h-1V519h-1V519.5h-1V519h-1V519h-1V519.5h-1V519.5h-1V519.5h-1V520h-1V519.5h-1V519.5h-1V519.5h-1V520h-1V519.5h-1V519.5h-1V519.5h-1V519.5h-1V519.5h-1V519.5h-1V519.5h-1V520h-1V519.5h-1V519.5h-1V519.5h-1V519.5h-1V519.5h-1V519.5h-1V520h-1V519.5h-1V519.5h-1V519.5h-1V520h-1V520h-1V519.5h-1V519h-1V519h-1V519.5h-1V519.5h-1V519h-1V519h-1V520h-1V519.5h-1V519.5h-1V519h-1V519.5h-1V519h-1V520h-1V519h-1V519.5h-1V519h-1V519.5h-1V519.5h-1V519h-1V519.5h-1V519.5h-1V519.5h-1V519h-1V519.5h-1V519.5h-1V519h-1V519h-1V519h-1V519.5h-1V520h-1V519h-1V519.5h-1V519.5h-1V519.5h-1V519.5h-1V519.5h-1V519h-1V519.5h-1V519.5h-1V519h-1V519.5h-1V519h-1V519.5h-1V519h-1V519.5h-1V519.5h-1V519.5h-1V519.5h-1V519.5h-1V519.5h-1V519.5h-1V519.5h-1V519h-1V519.5h-1V519.5h-1V519.5h-1V519h-1V519.5h-1V519.5h-1V519.5h-1V519h-1V519.5h-1V519.5h-1V519.5h-1V519h-1V519h-1V519.5h-1V519.5h-1V519h-1V519.5h-1V519.5h-1V519h-1V519h-1V519h-1V519.5h-1V520h-1V519.5h-1V519.5h-1V519.5h-1V519.5h-1V519.5h-1V519.5h-1V519.5h-1V519h-1V519.5h-1V520h-1V519.5h-1V520h-1V519h-1V520h-1V519.5h-1V519h-1V519.5h-1V519.5h-1V519.5h-1V519h-1V519.5h-1V519.5h-1V519h-1V519.5h-1V519h-1V519.5h-1V519h-1V519.5h-1V519.5h-1V520h-1V519.5h-1V519.5h-1V519.5h-1V519.5h-1V519h-1V519h-1V519h-1V519.5h-1V519.5h-1V519.5h-1V520h-1V519h-1V520h-1V519.5h-1V519h-1V519.5h-1V519.5h-1V520h-1V519.5h-1V519.5h-1V519.5h-1V519h-1V519.5h-1V519.5h-1V519.5h-1V519h-1V519.5h-1V519h-1V520h-1V519.5h-1V520h-1V519h-1V519.5h-1V519.5h-1V519.5h-1V519.5h-1V519.5h-1V519.5h-1V519h-1V519.5h-1V519.5h-1V520h-1V519.5h-1V519.5h-1V519.5h-1V519.5h-1V519.5h-1V520h-1V519.5h-1V519.5h-1V519.5h-1V519.5h-1V519h-1V519h-1V519h-1V519.5h-1V519.5h-1V520h-1V519.5h-1V519.5h-1V520h-1V519.5h-1V520h-1V519h-1V519.5h-1V519h-1V520h-1V519h-1V519.5h-1V519.5h-1V519h-1V520h-1V519h-1V519h-1V519h-1V519h-1V519.5h-1V519h-1V520h-1V520h-1V519h-1V519h-1V519.5h-1V519h-1V519h-1V520h-1V519h-1V519h-1V519.5h-1V519h-1V519h-1V519.5h-1V519.5h-1V520h-1V519h-1V519.5h-1V519h-1V519h-1V519h-1V519.5h-1V519h-1V519.5h-1V519.5h-1V520h-1V519.5h-1V519.5h-1V519.5h-1V519.5h-1V520h-1V519.5h-1V519.5h-1V519.5h-1V519.5h-1V517.5h-1V518h-1V518h-1V516.5h-1V517.5h-1V520h-1V516h-1V520h-1V517.5h-1V517.5h-1V518h-1V519.5h-1V517.5h-1V515h-1V520h-1V517h-1V516h-1V520h-1V515h-1V514.5h-1V514.5h-1V517.5h-1V517.5h-1V519.5h-1V519.5h-1V519h-1V519.5h-1V519h-1V519h-1V519h-1V520h-1V519.5h-1V518h-1V514.5h-1V518h-1V515.5h-1V515h-1V520h-1V520h-1V516h-1V517h-1V515.5h-1V520h-1V519h-1V519h-1V519h-1V519.5h-1V519.5h-1V519h-1V519h-1V517h-1V516.5h-1V516h-1V516h-1V515h-1V516h-1V514.5h-1V518h-1V516h-1V515h-1V514h-1V517h-1V519h-1V519.5h-1V519h-1V519.5h-1V519.5h-1V519.5h-1V519h-1V519h-1V520h-1V518.5h-1V519h-1V518.5h-1V518h-1V518.5h-1V518h-1V518h-1V517.5h-1V518.5h-1V519h-1V518h-1V519h-1V518h-1V518h-1V520h-1V518.5h-1V518.5h-1V517.5h-1V519h-1V519h-1V517.5h-1V517.5h-1V518h-1V518h-1V520h-1V517.5h-1V519h-1V519h-1V520h-1V519h-1V519h-1V519h-1V517.5h-1V517.5h-1V518.5h-1V519h-1Z"/></g></defs>
<g clip-path="url(#csw200)"><use href="#rmw200" fill="#6f97e4"/></g>
<g clip-path="url(#cuw200)"><rect x="496" y="466" width="537" height="56" fill="#363636"/><use href="#rmw200" fill="#3c4459"/></g>
<rect x="315" y="492" width="718" height="1.5" fill="#2a2a2a"/>
<rect x="315" y="522" width="718" height="34" fill="#363636"/>
<rect x="315" y="522" width="42" height="34" fill="#3b3b3b"/>
<rect x="315" y="522" width="718" height="1" fill="#262626"/>
<rect x="357" y="534" width="676" height="7" fill="#c9c8a4"/>
<path d="M357 534 h8 l-8 7 z" fill="#f0d800"/>
<rect x="321.5" y="543" width="7" height="6" fill="#eee"/><path d="M323 543.5 v-2 a2 2 0 0 1 4 0 v2" stroke="#eee" stroke-width="1.2" fill="none"/>
<rect x="338" y="540.5" width="4" height="6" fill="#2a7ab8" stroke="#8fd0f0" stroke-width="0.6"/><rect x="346" y="540.5" width="4" height="6" fill="#2a7ab8" stroke="#8fd0f0" stroke-width="0.6"/><path d="M344 538 v11 M342 538 h4 M342 549 h4" stroke="#e8e8e8" stroke-width="1"/>
<defs><clipPath id="crw200"><rect x="357" y="538" width="676" height="18"/></clipPath></defs><g clip-path="url(#crw200)">
<rect x="357.0" y="549" width="1.3" height="6.5" fill="#d8d8d8"/>
<text x="358.50" y="550.8" font-size="7.5" fill="#c8c8c8" textLength="30.79" lengthAdjust="spacingAndGlyphs">00:00:00</text>
<rect x="449.8" y="549" width="1.3" height="6.5" fill="#d8d8d8"/>
<text x="451.25" y="550.8" font-size="7.5" fill="#c8c8c8" textLength="30.79" lengthAdjust="spacingAndGlyphs">00:00:10</text>
<rect x="542.5" y="549" width="1.3" height="6.5" fill="#d8d8d8"/>
<text x="544.00" y="550.8" font-size="7.5" fill="#c8c8c8" textLength="30.79" lengthAdjust="spacingAndGlyphs">00:00:20</text>
<rect x="635.2" y="549" width="1.3" height="6.5" fill="#d8d8d8"/>
<text x="636.75" y="550.8" font-size="7.5" fill="#c8c8c8" textLength="30.79" lengthAdjust="spacingAndGlyphs">00:00:30</text>
<rect x="728.0" y="549" width="1.3" height="6.5" fill="#d8d8d8"/>
<text x="729.50" y="550.8" font-size="7.5" fill="#c8c8c8" textLength="30.79" lengthAdjust="spacingAndGlyphs">00:00:40</text>
<rect x="820.8" y="549" width="1.3" height="6.5" fill="#d8d8d8"/>
<text x="822.25" y="550.8" font-size="7.5" fill="#c8c8c8" textLength="30.79" lengthAdjust="spacingAndGlyphs">00:00:50</text>
<rect x="913.5" y="549" width="1.3" height="6.5" fill="#d8d8d8"/>
<text x="915.00" y="550.8" font-size="7.5" fill="#c8c8c8" textLength="30.79" lengthAdjust="spacingAndGlyphs">00:01:00</text>
<rect x="1006.2" y="549" width="1.3" height="6.5" fill="#d8d8d8"/>
<text x="1007.75" y="550.8" font-size="7.5" fill="#c8c8c8" textLength="30.79" lengthAdjust="spacingAndGlyphs">00:01:10</text>
<g fill="#cfcfcf">
<rect x="366.3" y="552" width="1.3" height="2.8"/>
<rect x="375.6" y="552" width="1.3" height="2.8"/>
<rect x="384.8" y="552" width="1.3" height="2.8"/>
<rect x="394.1" y="552" width="1.3" height="2.8"/>
<rect x="403.4" y="552" width="1.3" height="2.8"/>
<rect x="412.6" y="552" width="1.3" height="2.8"/>
<rect x="421.9" y="552" width="1.3" height="2.8"/>
<rect x="431.2" y="552" width="1.3" height="2.8"/>
<rect x="440.5" y="552" width="1.3" height="2.8"/>
<rect x="459.0" y="552" width="1.3" height="2.8"/>
<rect x="468.3" y="552" width="1.3" height="2.8"/>
<rect x="477.6" y="552" width="1.3" height="2.8"/>
<rect x="486.9" y="552" width="1.3" height="2.8"/>
<rect x="496.1" y="552" width="1.3" height="2.8"/>
<rect x="505.4" y="552" width="1.3" height="2.8"/>
<rect x="514.7" y="552" width="1.3" height="2.8"/>
<rect x="524.0" y="552" width="1.3" height="2.8"/>
<rect x="533.2" y="552" width="1.3" height="2.8"/>
<rect x="551.8" y="552" width="1.3" height="2.8"/>
<rect x="561.0" y="552" width="1.3" height="2.8"/>
<rect x="570.3" y="552" width="1.3" height="2.8"/>
<rect x="579.6" y="552" width="1.3" height="2.8"/>
<rect x="588.9" y="552" width="1.3" height="2.8"/>
<rect x="598.1" y="552" width="1.3" height="2.8"/>
<rect x="607.4" y="552" width="1.3" height="2.8"/>
<rect x="616.7" y="552" width="1.3" height="2.8"/>
<rect x="626.0" y="552" width="1.3" height="2.8"/>
<rect x="644.5" y="552" width="1.3" height="2.8"/>
<rect x="653.8" y="552" width="1.3" height="2.8"/>
<rect x="663.1" y="552" width="1.3" height="2.8"/>
<rect x="672.4" y="552" width="1.3" height="2.8"/>
<rect x="681.6" y="552" width="1.3" height="2.8"/>
<rect x="690.9" y="552" width="1.3" height="2.8"/>
<rect x="700.2" y="552" width="1.3" height="2.8"/>
<rect x="709.5" y="552" width="1.3" height="2.8"/>
<rect x="718.7" y="552" width="1.3" height="2.8"/>
<rect x="737.3" y="552" width="1.3" height="2.8"/>
<rect x="746.5" y="552" width="1.3" height="2.8"/>
<rect x="755.8" y="552" width="1.3" height="2.8"/>
<rect x="765.1" y="552" width="1.3" height="2.8"/>
<rect x="774.4" y="552" width="1.3" height="2.8"/>
<rect x="783.7" y="552" width="1.3" height="2.8"/>
<rect x="792.9" y="552" width="1.3" height="2.8"/>
<rect x="802.2" y="552" width="1.3" height="2.8"/>
<rect x="811.5" y="552" width="1.3" height="2.8"/>
<rect x="830.0" y="552" width="1.3" height="2.8"/>
<rect x="839.3" y="552" width="1.3" height="2.8"/>
<rect x="848.6" y="552" width="1.3" height="2.8"/>
<rect x="857.9" y="552" width="1.3" height="2.8"/>
<rect x="867.1" y="552" width="1.3" height="2.8"/>
<rect x="876.4" y="552" width="1.3" height="2.8"/>
<rect x="885.7" y="552" width="1.3" height="2.8"/>
<rect x="895.0" y="552" width="1.3" height="2.8"/>
<rect x="904.2" y="552" width="1.3" height="2.8"/>
<rect x="922.8" y="552" width="1.3" height="2.8"/>
<rect x="932.1" y="552" width="1.3" height="2.8"/>
<rect x="941.3" y="552" width="1.3" height="2.8"/>
<rect x="950.6" y="552" width="1.3" height="2.8"/>
<rect x="959.9" y="552" width="1.3" height="2.8"/>
<rect x="969.1" y="552" width="1.3" height="2.8"/>
<rect x="978.4" y="552" width="1.3" height="2.8"/>
<rect x="987.7" y="552" width="1.3" height="2.8"/>
<rect x="997.0" y="552" width="1.3" height="2.8"/>
<rect x="1015.5" y="552" width="1.3" height="2.8"/>
<rect x="1024.8" y="552" width="1.3" height="2.8"/>
</g></g>
<rect x="315" y="555" width="718" height="1" fill="#262626"/>
<rect x="315" y="556" width="718" height="46" fill="#444444"/>
<rect x="315.5" y="556.5" width="17" height="14" rx="2" fill="#5b6a99"/>
<rect x="334" y="556.5" width="12.5" height="12" rx="2" fill="#5b6a99"/><rect x="337" y="559.5" width="7" height="2" fill="#e8e8e8"/>
<rect x="357" y="556" width="676" height="46" fill="#383c48"/>
<path d="M357 557V557h1V557h1V557.5h1V560.5h1V556.5h1V563h1V563.5h1V563h1V561h1V563h1V561h1V556.5h1V562.5h1V556.5h1V556.5h1V562.5h1V561h1V560h1V560.5h1V563.5h1V561.5h1V559.5h1V563h1V559.5h1V561h1V559h1V557h1V557.5h1V557h1V557.5h1V557h1V557h1V557h1V557.5h1V557h1V556.5h1V556.5h1V561.5h1V562.5h1V560.5h1V562.5h1V558.5h1V560h1V562h1V562.5h1V562h1V556.5h1V560.5h1V559.5h1V558.5h1V557h1V557.5h1V557h1V557.5h1V557h1V557.5h1V557.5h1V557h1V557h1V556.5h1V557h1V556.5h1V557.5h1V557h1V556.5h1V557.5h1V557h1V557.5h1V557h1V556.5h1V557.5h1V557h1V557.5h1V557.5h1V557h1V556.5h1V557h1V557h1V556.5h1V556.5h1V561.5h1V560h1V562h1V563h1V561h1V560.5h1V562h1V559.5h1V562.5h1V556.5h1V563h1V563.5h1V560.5h1V556.5h1V563h1V563.5h1V561.5h1V556.5h1V560h1V561.5h1V561h1V561h1V560h1V556.5h1V556.5h1V560h1V561.5h1V560h1V556.5h1V559.5h1V556.5h1V559.5h1V560h1V563h1V559.5h1V563h1V562.5h1V556.5h1V562.5h1V560.5h1V557.5h1V557.5h1V557h1V557h1V557h1V557h1V557.5h1V557.5h1V558h1V560.5h1V560.5h1V562.5h1V560.5h1V556.5h1V560.5h1V562h1V560h1V560h1V556.5h1V561h1V562h1V556.5h1V560h1V557.5h1V557h1V557.5h1V557.5h1V556.5h1V556.5h1V557.5h1V557h1V557.5h1V557.5h1V557h1V557h1V557h1V557h1V559h1V563.5h1V561.5h1V561.5h1V562.5h1V556.5h1V560.5h1V564.5h1V563h1V562h1V559.5h1V562.5h1V562h1V561.5h1V563.5h1V562.5h1V563h1V563.5h1V560h1V561.5h1V563.5h1V561h1V556.5h1V559h1V561.5h1V560h1V562.5h1V563h1V564h1V560h1V564.5h1V556.5h1V561h1V563.5h1V563.5h1V562h1V563.5h1V556.5h1V562.5h1V562.5h1V563.5h1V563h1V561.5h1V556.5h1V563h1V563h1V563h1V563h1V560.5h1V560.5h1V557.5h1V557h1V557h1V557.5h1V557h1V557.5h1V557h1V557h1V557h1V557.5h1V557.5h1V557.5h1V557h1V557h1V557.5h1V557.5h1V557.5h1V557h1V557h1V557.5h1V557.5h1V557h1V557.5h1V557.5h1V557h1V557.5h1V557h1V557.5h1V557h1V557h1V557h1V557.5h1V557h1V557.5h1V557.5h1V557.5h1V556.5h1V557.5h1V560h1V561h1V560.5h1V562h1V562h1V563h1V556.5h1V560.5h1V562h1V556.5h1V561.5h1V559.5h1V563h1V561h1V561.5h1V562h1V560h1V563.5h1V559.5h1V562.5h1V563.5h1V559.5h1V556.5h1V563.5h1V563h1V560.5h1V557h1V557h1V557.5h1V557h1V557.5h1V557.5h1V557h1V557.5h1V557h1V557.5h1V557h1V557h1V557.5h1V557h1V557h1V557h1V557.5h1V557h1V557.5h1V557h1V558h1V562h1V562.5h1V559.5h1V558.5h1V559.5h1V560.5h1V560.5h1V561.5h1V560.5h1V561.5h1V562.5h1V559h1V562h1V559h1V557.5h1V557h1V556.5h1V557h1V557.5h1V556.5h1V557.5h1V557.5h1V558.5h1V560h1V559.5h1V562h1V564h1V561h1V561h1V562.5h1V562.5h1V556.5h1V556.5h1V565h1V562.5h1V562h1V563h1V556.5h1V563h1V559.5h1V565h1V562h1V560h1V565h1V565h1V565h1V556.5h1V560.5h1V563.5h1V563.5h1V559.5h1V560h1V561.5h1V564h1V556.5h1V560h1V563h1V556.5h1V564.5h1V558h1V557.5h1V557h1V557h1V557.5h1V557h1V557h1V557.5h1V557.5h1V557h1V557h1V557h1V557h1V557.5h1V556.5h1V557h1V557.5h1V557.5h1V557h1V557.5h1V557h1V557.5h1V556.5h1V565.5h1V563.5h1V562h1V560h1V560.5h1V563.5h1V565.5h1V561.5h1V563.5h1V565h1V560h1V556.5h1V565.5h1V565h1V556.5h1V563h1V560.5h1V564h1V561h1V564.5h1V563.5h1V565h1V562h1V556.5h1V563h1V565h1V562.5h1V562h1V564h1V560h1V559h1V557h1V557.5h1V557.5h1V557h1V557h1V557.5h1V557.5h1V557h1V557h1V557.5h1V557h1V557.5h1V557h1V557.5h1V557h1V557.5h1V557h1V557h1V557.5h1V557h1V557h1V557h1V557.5h1V557.5h1V557.5h1V557.5h1V557h1V557.5h1V557h1V557h1V557h1V557h1V557.5h1V557.5h1V557h1V557h1V557h1V559h1V560.5h1V556.5h1V559.5h1V560.5h1V559h1V560.5h1V560h1V556.5h1V556.5h1V557.5h1V557h1V557h1V557.5h1V557.5h1V557h1V557h1V556.5h1V557h1V557h1V557h1V557.5h1V557h1V557.5h1V557.5h1V556.5h1V556.5h1V556.5h1V557.5h1V557.5h1V557h1V557.5h1V557h1V557.5h1V557h1V557h1V557.5h1V556.5h1V557.5h1V556.5h1V556.5h1V557h1V557.5h1V557h1V557h1V557.5h1V557h1V557.5h1V557h1V557.5h1V557.5h1V557h1V557.5h1V557h1V557.5h1V557h1V556.5h1V557h1V557h1V557.5h1V557.5h1V557h1V557.5h1V556.5h1V557h1V557h1V557.5h1V557h1V557.5h1V557.5h1V557h1V557.5h1V556.5h1V556.5h1V557h1V557.5h1V557h1V557h1V556.5h1V557h1V557.5h1V557h1V556.5h1V561h1V559.5h1V560.5h1V556.5h1V560h1V559.5h1V557h1V557.5h1V557h1V557.5h1V557.5h1V557.5h1V557h1V557.5h1V557h1V557.5h1V557h1V557.5h1V557h1V557.5h1V557h1V557h1V557h1V557h1V557h1V557.5h1V557.5h1V557h1V557h1V557.5h1V557h1V557h1V557.5h1V556.5h1V557h1V557h1V557h1V557.5h1V557h1V557h1V557.5h1V557.5h1V557h1V557.5h1V557h1V557h1V557h1V557h1V557h1V557.5h1V557.5h1V557.5h1V556.5h1V557h1V557h1V557h1V557h1V557.5h1V557.5h1V557.5h1V557h1V556.5h1V557h1V557h1V557h1V557.5h1V557h1V557h1V556.5h1V557h1V557.5h1V557h1V557h1V557.5h1V557.5h1V557.5h1V557h1V557.5h1V557h1V557.5h1V556.5h1V557.5h1V557h1V557.5h1V557h1V557h1V556.5h1V561.5h1V556.5h1V559.5h1V560.5h1V560.5h1V559h1V557.5h1V557h1V557.5h1V557h1V557.5h1V557.5h1V557h1V557.5h1V557h1V557.5h1V557.5h1V557h1V557h1V557.5h1V557.5h1V557.5h1V557h1V557.5h1V557h1V556.5h1V557h1V557h1V557.5h1V557.5h1V557.5h1V557h1V557.5h1V557h1V557h1V557h1V557.5h1V557.5h1V557h1V557h1V556.5h1V557h1V557.5h1V557.5h1V557.5h1V557h1V557h1V557.5h1V557h1V557h1V557.5h1V557h1V558h1V556.5h1V559h1V560h1V559h1V561h1V557.5h1V557h1V557h1V557h1V557.5h1V557.5h1V600.5h-1V599.5h-1V600h-1V598h-1V595.5h-1V597h-1V596h-1V598h-1V601h-1V598h-1V596.5h-1V598.5h-1V600h-1V600h-1V600.5h-1V600h-1V599.5h-1V599.5h-1V599.5h-1V601h-1V600h-1V599.5h-1V599.5h-1V599.5h-1V601h-1V600.5h-1V599.5h-1V600.5h-1V599.5h-1V599.5h-1V600h-1V600h-1V600.5h-1V600h-1V599.5h-1V600h-1V599.5h-1V601h-1V599.5h-1V600h-1V600h-1V599.5h-1V599.5h-1V600.5h-1V599.5h-1V599.5h-1V599.5h-1V599.5h-1V601h-1V599.5h-1V600h-1V599.5h-1V599.5h-1V599.5h-1V600h-1V600h-1V601h-1V595h-1V595h-1V598h-1V596.5h-1V595.5h-1V597h-1V598.5h-1V599h-1V599.5h-1V599.5h-1V599.5h-1V600h-1V600h-1V600.5h-1V601h-1V599.5h-1V600h-1V599.5h-1V600h-1V599.5h-1V600h-1V600h-1V601h-1V599.5h-1V599.5h-1V601h-1V599.5h-1V600h-1V601h-1V600h-1V599.5h-1V601h-1V601h-1V600h-1V599.5h-1V600.5h-1V599.5h-1V600h-1V600.5h-1V600h-1V600.5h-1V599.5h-1V600h-1V599.5h-1V599.5h-1V600h-1V600h-1V599.5h-1V601h-1V600.5h-1V600h-1V601h-1V599.5h-1V599.5h-1V600h-1V600h-1V600h-1V600h-1V599.5h-1V600h-1V600.5h-1V599.5h-1V600.5h-1V601h-1V600.5h-1V599.5h-1V600h-1V600h-1V600.5h-1V601h-1V599.5h-1V600h-1V600h-1V599.5h-1V600.5h-1V599.5h-1V599.5h-1V599.5h-1V601h-1V600.5h-1V600h-1V600h-1V600.5h-1V601h-1V600h-1V600h-1V598h-1V601h-1V598h-1V601h-1V595h-1V596.5h-1V597.5h-1V595.5h-1V597.5h-1V600h-1V601h-1V599.5h-1V599.5h-1V600h-1V599.5h-1V599.5h-1V600.5h-1V599.5h-1V599.5h-1V600.5h-1V600.5h-1V599.5h-1V600.5h-1V599.5h-1V599.5h-1V599.5h-1V601h-1V599.5h-1V599.5h-1V600h-1V599.5h-1V600h-1V600h-1V599.5h-1V600h-1V600h-1V601h-1V599.5h-1V600h-1V600h-1V600h-1V599.5h-1V600.5h-1V599.5h-1V600h-1V599.5h-1V599.5h-1V600h-1V599.5h-1V601h-1V596h-1V597.5h-1V596.5h-1V601h-1V595.5h-1V596h-1V598h-1V599h-1V595.5h-1V598.5h-1V598h-1V600h-1V600h-1V599.5h-1V600h-1V600.5h-1V599.5h-1V599.5h-1V599.5h-1V600h-1V599.5h-1V600h-1V601h-1V599.5h-1V601h-1V599.5h-1V599.5h-1V600h-1V599.5h-1V600h-1V599.5h-1V600h-1V598.5h-1V596h-1V598.5h-1V598h-1V595.5h-1V596.5h-1V597.5h-1V599h-1V597.5h-1V599.5h-1V599.5h-1V599.5h-1V600h-1V599.5h-1V599.5h-1V601h-1V599.5h-1V599.5h-1V600h-1V600.5h-1V600h-1V600.5h-1V601h-1V600h-1V600h-1V600h-1V600h-1V600h-1V599.5h-1V600h-1V600h-1V599.5h-1V600h-1V600h-1V600h-1V600h-1V600h-1V600h-1V600.5h-1V600.5h-1V600h-1V599.5h-1V600h-1V601h-1V601h-1V600h-1V595h-1V595h-1V590h-1V589.5h-1V592h-1V595h-1V592.5h-1V591h-1V589.5h-1V590h-1V593.5h-1V601h-1V595.5h-1V592h-1V595h-1V592.5h-1V591h-1V589.5h-1V590h-1V601h-1V593.5h-1V591.5h-1V601h-1V589.5h-1V592h-1V597h-1V592h-1V594.5h-1V601h-1V597h-1V590.5h-1V596h-1V599.5h-1V599.5h-1V600h-1V600.5h-1V600h-1V599.5h-1V600h-1V600h-1V600h-1V599.5h-1V600h-1V599.5h-1V600h-1V599.5h-1V599.5h-1V600.5h-1V600h-1V599.5h-1V599.5h-1V599.5h-1V599.5h-1V596h-1V591.5h-1V593.5h-1V595h-1V593h-1V595.5h-1V595.5h-1V592h-1V597h-1V595h-1V601h-1V591h-1V592h-1V592.5h-1V595.5h-1V596.5h-1V593h-1V591.5h-1V595h-1V591h-1V596h-1V595h-1V601h-1V590.5h-1V595.5h-1V593.5h-1V595h-1V593.5h-1V593.5h-1V592h-1V591.5h-1V594.5h-1V593h-1V596.5h-1V593h-1V594.5h-1V596.5h-1V596h-1V600h-1V600h-1V599.5h-1V600h-1V600h-1V600h-1V600h-1V599.5h-1V599h-1V594.5h-1V595.5h-1V597.5h-1V601h-1V594.5h-1V595.5h-1V595.5h-1V601h-1V596h-1V597h-1V595.5h-1V595.5h-1V601h-1V597.5h-1V600.5h-1V601h-1V600h-1V600h-1V600h-1V600h-1V600h-1V599.5h-1V600h-1V599.5h-1V600h-1V600h-1V599.5h-1V599.5h-1V596h-1V592.5h-1V595h-1V591h-1V590.5h-1V590h-1V601h-1V601h-1V592h-1V601h-1V592.5h-1V591h-1V592h-1V601h-1V597h-1V591h-1V591h-1V591.5h-1V591.5h-1V591h-1V592.5h-1V592.5h-1V601h-1V593h-1V590h-1V596h-1V591h-1V590.5h-1V601h-1V592.5h-1V593.5h-1V597.5h-1V600.5h-1V600h-1V599.5h-1V599.5h-1V599.5h-1V600h-1V601h-1V601h-1V601h-1V600h-1V599.5h-1V600h-1V599.5h-1V599.5h-1V601h-1V600h-1V599.5h-1V599.5h-1V601h-1V601h-1V600h-1V601h-1V600h-1V600h-1V601h-1V600h-1V599.5h-1V600h-1V600h-1V600h-1V599.5h-1V600h-1V600h-1V600h-1V599.5h-1V595h-1V594.5h-1V601h-1V594h-1V592h-1V592.5h-1V593.5h-1V592.5h-1V591h-1V591h-1V596.5h-1V594h-1V592h-1V597h-1V590h-1V594h-1V593h-1V592.5h-1V591.5h-1V601h-1V595h-1V590h-1V592.5h-1V590h-1V593.5h-1V591.5h-1V594.5h-1V590.5h-1V594h-1V590h-1V596h-1V591h-1V590.5h-1V590h-1V595.5h-1V599.5h-1V600h-1V600h-1V599.5h-1V599.5h-1V599.5h-1V595.5h-1V591.5h-1V590.5h-1V593.5h-1V591h-1V591.5h-1V591.5h-1V593.5h-1V592.5h-1V592.5h-1V592.5h-1V601h-1V596h-1V593.5h-1V596h-1V599.5h-1V600.5h-1V599.5h-1V599.5h-1V601h-1V599.5h-1V599.5h-1V600h-1V600h-1V599.5h-1V600.5h-1V599.5h-1V599.5h-1V600h-1V600.5h-1V600.5h-1V600h-1V600.5h-1V599.5h-1V599.5h-1V599.5h-1V600h-1V599.5h-1V599.5h-1V599.5h-1V599.5h-1V600.5h-1V600h-1V599.5h-1V600h-1V599.5h-1V600h-1V599.5h-1V600h-1V597h-1V594.5h-1V595h-1V595.5h-1V594.5h-1V594.5h-1V597h-1V596.5h-1V594.5h-1V599h-1V596h-1V595.5h-1V594.5h-1V597h-1V601h-1V595h-1V597.5h-1V595.5h-1V596h-1V594.5h-1V597.5h-1V598h-1V597h-1V594.5h-1V595h-1V595h-1V596.5h-1V596.5h-1V597.5h-1V596.5h-1V595h-1V594.5h-1V595.5h-1V596h-1V595.5h-1V597h-1V596h-1V595h-1V597h-1V596h-1V597.5h-1V600h-1V600h-1V601h-1V599.5h-1V600h-1V600h-1V601h-1V600.5h-1V599.5h-1V600h-1V599.5h-1V600.5h-1V600h-1V600h-1V601h-1V600h-1V599.5h-1V600h-1V599.5h-1V600.5h-1V600h-1V601h-1V599.5h-1V599.5h-1V600h-1V600h-1V600h-1V600h-1V600h-1V601h-1V600h-1V601h-1V600h-1V600h-1V601h-1V600.5h-1V599.5h-1V600h-1V599.5h-1V600.5h-1V601h-1V599.5h-1V600.5h-1V599.5h-1V600h-1V599.5h-1V600.5h-1V599.5h-1V601h-1V601h-1V600h-1V600h-1V600h-1V601h-1V597h-1V597h-1V597.5h-1V601h-1V595h-1V595h-1V598h-1V597.5h-1V597.5h-1V601h-1V595h-1V596.5h-1V595h-1V595h-1V596.5h-1V601h-1V596h-1V598.5h-1V595h-1V596.5h-1V601h-1V598h-1V600h-1V600.5h-1V601h-1Z" fill="#6f97e4"/>
<rect x="315" y="602" width="718" height="1" fill="#262626"/>
<rect x="315" y="603" width="718" height="46" fill="#444444"/>
<rect x="315.5" y="603.5" width="17" height="14" rx="2" fill="#5b6a99"/>
<rect x="334" y="603.5" width="12.5" height="12" rx="2" fill="#5b6a99"/><rect x="337" y="606.5" width="7" height="2" fill="#e8e8e8"/>
<rect x="357" y="603" width="676" height="46" fill="#383c48"/>
<path d="M357 604V604h1V605.5h1V605h1V607h1V609h1V608.5h1V609.5h1V607h1V610.5h1V607.5h1V604h1V610h1V607.5h1V607.5h1V610.5h1V609h1V608h1V604h1V608.5h1V610h1V610h1V609.5h1V607h1V607h1V608.5h1V607h1V605.5h1V605.5h1V605h1V605h1V605h1V605h1V605.5h1V605.5h1V605h1V605h1V604.5h1V605.5h1V605h1V605.5h1V605h1V605.5h1V605.5h1V604h1V605h1V605.5h1V605h1V605h1V604h1V605.5h1V605h1V605.5h1V605.5h1V605h1V605h1V605h1V605h1V605.5h1V604.5h1V605.5h1V605h1V605h1V605.5h1V605h1V605.5h1V605h1V605.5h1V605h1V604h1V604.5h1V605.5h1V605h1V605h1V605h1V604h1V605.5h1V604.5h1V605.5h1V605h1V608h1V608.5h1V608h1V608h1V608h1V608.5h1V604h1V610h1V609h1V604h1V609.5h1V607.5h1V606h1V610.5h1V608.5h1V604h1V609h1V609.5h1V604h1V604h1V610.5h1V608h1V606.5h1V607.5h1V609.5h1V608h1V607.5h1V609.5h1V604h1V607.5h1V608.5h1V610.5h1V609h1V607.5h1V607h1V610h1V607.5h1V610h1V609h1V609.5h1V604h1V605.5h1V605h1V605h1V605.5h1V605.5h1V605h1V604.5h1V605h1V605h1V604.5h1V605h1V605h1V604.5h1V605.5h1V605h1V604.5h1V605h1V605h1V604h1V605h1V605h1V605.5h1V605.5h1V605h1V604.5h1V604h1V605h1V604.5h1V605h1V605h1V605.5h1V605.5h1V605.5h1V604.5h1V609.5h1V609.5h1V610h1V611h1V614h1V609h1V613.5h1V613h1V611.5h1V611h1V614.5h1V613.5h1V614h1V612.5h1V608.5h1V604.5h1V604.5h1V604h1V604.5h1V604.5h1V605h1V606.5h1V612.5h1V613h1V604h1V610h1V613.5h1V612.5h1V615h1V614.5h1V611h1V614.5h1V611h1V611h1V612h1V612h1V609h1V610h1V609.5h1V608.5h1V615h1V615h1V612h1V604h1V610h1V612.5h1V615.5h1V614.5h1V614h1V615h1V614h1V612h1V607.5h1V614h1V611h1V610h1V605h1V605.5h1V605h1V605h1V605.5h1V605h1V605h1V604.5h1V605.5h1V604h1V604.5h1V605h1V605.5h1V605.5h1V605.5h1V605.5h1V605.5h1V604h1V605.5h1V605h1V605h1V605h1V605.5h1V605h1V605h1V605h1V604.5h1V604h1V605.5h1V605h1V605h1V605h1V605h1V604h1V605h1V609h1V613.5h1V614h1V604h1V609.5h1V612h1V608.5h1V615.5h1V614.5h1V613.5h1V613.5h1V611h1V612.5h1V612.5h1V604h1V613.5h1V612.5h1V610h1V615.5h1V614h1V615h1V610h1V604h1V615.5h1V608h1V610h1V615.5h1V612.5h1V604h1V609.5h1V611h1V608h1V605h1V605.5h1V605h1V605.5h1V605h1V605.5h1V605h1V605.5h1V605.5h1V605.5h1V604.5h1V605.5h1V605h1V605.5h1V605.5h1V609h1V608.5h1V608.5h1V610h1V606.5h1V608.5h1V607.5h1V609h1V607.5h1V604h1V608h1V606.5h1V607h1V604h1V605h1V605h1V605.5h1V605h1V605h1V605h1V605.5h1V605h1V607h1V604h1V614h1V614.5h1V611.5h1V610h1V604h1V604h1V609h1V613h1V604h1V610h1V614.5h1V613h1V613h1V604h1V612h1V612.5h1V611.5h1V611h1V611.5h1V604h1V610h1V609.5h1V611.5h1V609.5h1V611h1V610h1V614h1V613h1V614h1V611h1V611h1V609.5h1V609h1V611.5h1V611.5h1V607h1V605h1V605.5h1V605.5h1V604h1V605.5h1V605.5h1V605.5h1V604.5h1V605h1V605h1V605.5h1V605h1V605.5h1V605.5h1V605.5h1V605h1V605h1V605h1V604h1V605.5h1V604h1V610h1V609h1V604h1V614.5h1V613.5h1V614.5h1V613.5h1V610.5h1V612h1V609.5h1V614.5h1V604h1V612h1V615h1V615.5h1V615.5h1V615.5h1V608h1V613h1V612h1V614h1V613.5h1V614.5h1V614.5h1V610h1V612h1V609.5h1V614.5h1V609.5h1V612h1V614h1V610h1V605h1V605.5h1V605.5h1V605h1V605.5h1V605.5h1V605.5h1V605h1V605h1V604.5h1V605.5h1V605h1V605.5h1V605.5h1V605.5h1V604.5h1V605h1V605h1V605.5h1V605h1V604h1V604h1V605h1V605.5h1V605.5h1V605.5h1V604.5h1V604h1V605h1V605h1V605h1V605h1V605h1V605.5h1V605.5h1V605.5h1V605h1V607.5h1V607h1V609h1V608.5h1V604h1V609.5h1V604h1V608.5h1V606.5h1V605h1V605.5h1V605.5h1V604h1V605h1V605h1V605.5h1V604h1V605.5h1V605h1V605h1V605h1V604.5h1V605.5h1V605.5h1V605.5h1V605h1V605h1V605h1V604.5h1V605.5h1V605.5h1V607.5h1V609.5h1V609h1V609h1V607h1V604h1V607h1V609h1V606h1V606.5h1V608.5h1V607h1V605h1V605h1V605.5h1V605.5h1V605.5h1V604.5h1V604h1V605h1V605.5h1V605.5h1V605.5h1V604.5h1V605.5h1V605h1V605.5h1V604h1V605.5h1V605.5h1V605.5h1V605h1V605h1V605.5h1V605.5h1V605.5h1V604.5h1V605h1V604.5h1V605.5h1V605h1V605.5h1V605h1V604h1V605.5h1V605h1V605.5h1V605h1V605.5h1V605.5h1V605.5h1V606.5h1V609.5h1V610h1V604h1V607.5h1V610.5h1V608.5h1V608.5h1V606h1V604h1V605h1V605h1V604.5h1V605.5h1V604.5h1V605.5h1V605h1V605h1V605.5h1V605.5h1V605h1V604h1V605.5h1V605h1V604.5h1V605h1V604.5h1V605.5h1V605.5h1V604.5h1V605h1V605.5h1V605h1V605h1V605h1V605.5h1V605h1V605h1V605h1V605.5h1V605h1V605.5h1V605h1V604.5h1V605.5h1V605h1V604h1V605.5h1V605h1V605h1V604.5h1V605.5h1V605.5h1V605.5h1V605h1V605.5h1V605h1V605h1V605h1V605.5h1V605h1V605h1V604.5h1V605h1V604.5h1V605.5h1V604.5h1V604.5h1V604h1V604h1V604.5h1V605h1V605.5h1V605.5h1V605h1V605h1V605h1V605.5h1V605h1V605h1V605.5h1V605h1V605.5h1V605.5h1V604.5h1V605h1V605.5h1V606h1V607.5h1V607h1V604h1V608h1V608.5h1V608.5h1V609h1V608h1V605.5h1V605.5h1V605h1V604h1V605.5h1V605h1V605h1V604.5h1V605.5h1V605.5h1V605h1V605h1V605.5h1V604.5h1V605h1V605.5h1V605h1V605h1V605h1V605.5h1V604.5h1V605.5h1V605h1V605h1V605.5h1V605h1V605h1V605h1V605h1V604h1V605.5h1V605h1V605.5h1V604h1V605h1V605.5h1V605h1V604h1V605h1V605h1V605.5h1V604.5h1V605h1V605h1V606h1V607.5h1V607h1V605.5h1V609.5h1V606h1V609h1V609.5h1V607.5h1V605h1V605h1V604h1V647.5h-1V647h-1V647.5h-1V646.5h-1V645.5h-1V646h-1V646h-1V644.5h-1V645.5h-1V645.5h-1V645h-1V646h-1V646.5h-1V648h-1V646.5h-1V647h-1V648h-1V647.5h-1V647.5h-1V647h-1V646.5h-1V647h-1V647h-1V646.5h-1V647h-1V646.5h-1V647.5h-1V647h-1V646.5h-1V647h-1V647h-1V648h-1V647h-1V647h-1V648h-1V647h-1V647h-1V647.5h-1V646.5h-1V646.5h-1V647h-1V647h-1V646.5h-1V647h-1V647h-1V647h-1V647.5h-1V647.5h-1V648h-1V647h-1V647.5h-1V647.5h-1V646.5h-1V647h-1V647h-1V648h-1V646h-1V648h-1V644.5h-1V644h-1V645.5h-1V644.5h-1V642.5h-1V645.5h-1V645.5h-1V648h-1V646.5h-1V647.5h-1V647h-1V647h-1V648h-1V647h-1V647.5h-1V646.5h-1V647h-1V646.5h-1V648h-1V647h-1V647h-1V647h-1V647h-1V647h-1V647.5h-1V646.5h-1V647.5h-1V647h-1V647h-1V646.5h-1V646.5h-1V646.5h-1V647h-1V648h-1V647h-1V647h-1V647h-1V646.5h-1V647h-1V647h-1V647h-1V647.5h-1V647h-1V647h-1V648h-1V647h-1V646.5h-1V647h-1V647h-1V647.5h-1V647h-1V646.5h-1V647h-1V646.5h-1V647h-1V646.5h-1V646.5h-1V647h-1V647.5h-1V647.5h-1V647h-1V647h-1V647h-1V646.5h-1V647.5h-1V646.5h-1V647.5h-1V647h-1V647.5h-1V646.5h-1V646.5h-1V646.5h-1V647h-1V647.5h-1V647h-1V646.5h-1V647h-1V647h-1V647h-1V647.5h-1V647h-1V647h-1V647.5h-1V647h-1V646.5h-1V646.5h-1V643.5h-1V644.5h-1V642.5h-1V643h-1V645h-1V645.5h-1V643h-1V645h-1V646.5h-1V646.5h-1V646.5h-1V647h-1V648h-1V647.5h-1V647h-1V647h-1V647.5h-1V647h-1V646.5h-1V646.5h-1V646.5h-1V647h-1V646.5h-1V647h-1V647.5h-1V647h-1V647h-1V647h-1V647h-1V647h-1V647.5h-1V646.5h-1V647.5h-1V648h-1V646.5h-1V647h-1V647.5h-1V647h-1V647h-1V647h-1V647h-1V647h-1V648h-1V647h-1V647h-1V648h-1V647h-1V645.5h-1V644.5h-1V645.5h-1V644.5h-1V645.5h-1V645h-1V648h-1V645.5h-1V644h-1V643.5h-1V644h-1V645.5h-1V646.5h-1V647h-1V647h-1V647h-1V647.5h-1V647.5h-1V647h-1V647h-1V647h-1V648h-1V646.5h-1V647h-1V647.5h-1V647h-1V648h-1V647h-1V647.5h-1V647h-1V647h-1V646.5h-1V647.5h-1V647h-1V647h-1V645h-1V643.5h-1V645.5h-1V648h-1V643.5h-1V645h-1V644.5h-1V645.5h-1V648h-1V646.5h-1V647.5h-1V646.5h-1V647h-1V647h-1V647h-1V647h-1V647h-1V647.5h-1V647h-1V647h-1V647h-1V647h-1V648h-1V647.5h-1V647.5h-1V647h-1V647h-1V648h-1V646.5h-1V647.5h-1V648h-1V647h-1V646.5h-1V647h-1V647h-1V646.5h-1V647h-1V648h-1V647.5h-1V647.5h-1V647h-1V647h-1V647h-1V647h-1V647.5h-1V644.5h-1V641.5h-1V642.5h-1V644.5h-1V640h-1V639h-1V648h-1V639h-1V642h-1V644.5h-1V643.5h-1V641h-1V648h-1V648h-1V640h-1V639h-1V641h-1V644.5h-1V640h-1V639h-1V643.5h-1V640.5h-1V643.5h-1V643h-1V640.5h-1V639h-1V648h-1V644.5h-1V643h-1V640h-1V644.5h-1V644h-1V646.5h-1V646.5h-1V647h-1V647.5h-1V647h-1V646.5h-1V647h-1V646.5h-1V647h-1V646.5h-1V647h-1V646.5h-1V647.5h-1V647h-1V647.5h-1V646.5h-1V648h-1V646.5h-1V646.5h-1V647h-1V648h-1V643h-1V640.5h-1V643.5h-1V639.5h-1V640h-1V648h-1V640.5h-1V641h-1V642.5h-1V642h-1V640.5h-1V643.5h-1V648h-1V640.5h-1V644h-1V641h-1V643.5h-1V640.5h-1V641.5h-1V644.5h-1V645h-1V640h-1V641.5h-1V643.5h-1V644h-1V642h-1V639.5h-1V640.5h-1V643h-1V641.5h-1V641h-1V641.5h-1V648h-1V639.5h-1V642h-1V641h-1V644.5h-1V645h-1V647.5h-1V647h-1V647h-1V648h-1V647h-1V647h-1V647h-1V646.5h-1V648h-1V642.5h-1V645.5h-1V643h-1V644h-1V644h-1V648h-1V646h-1V648h-1V643h-1V645h-1V646h-1V644.5h-1V644.5h-1V647h-1V647h-1V647.5h-1V647h-1V646.5h-1V647h-1V647.5h-1V647h-1V647.5h-1V647h-1V647.5h-1V647h-1V647.5h-1V648h-1V647.5h-1V642.5h-1V648h-1V639.5h-1V648h-1V640.5h-1V641h-1V642.5h-1V640h-1V642h-1V642h-1V639h-1V641h-1V648h-1V643.5h-1V640.5h-1V645h-1V640h-1V642h-1V642h-1V639h-1V641h-1V644.5h-1V641h-1V638.5h-1V640.5h-1V640.5h-1V642.5h-1V644h-1V648h-1V644h-1V648h-1V644h-1V647.5h-1V647.5h-1V647h-1V647.5h-1V647h-1V647h-1V647.5h-1V647h-1V647h-1V646.5h-1V646.5h-1V647h-1V647.5h-1V646.5h-1V647.5h-1V647h-1V647h-1V647.5h-1V647h-1V647h-1V647h-1V647.5h-1V647h-1V647.5h-1V647h-1V647.5h-1V647h-1V646.5h-1V647h-1V647h-1V648h-1V647h-1V647h-1V646.5h-1V646.5h-1V645.5h-1V643h-1V640h-1V648h-1V648h-1V640.5h-1V639h-1V640.5h-1V639.5h-1V642.5h-1V643.5h-1V641h-1V639.5h-1V648h-1V641.5h-1V642.5h-1V638.5h-1V640h-1V641h-1V640h-1V640.5h-1V640.5h-1V640.5h-1V642.5h-1V639.5h-1V641.5h-1V641h-1V641h-1V641.5h-1V644.5h-1V640.5h-1V640.5h-1V644.5h-1V642.5h-1V644h-1V647.5h-1V647h-1V647h-1V647h-1V646.5h-1V646.5h-1V643.5h-1V640.5h-1V641.5h-1V643h-1V648h-1V643.5h-1V645h-1V643h-1V641h-1V641h-1V641.5h-1V640h-1V648h-1V640h-1V643.5h-1V647h-1V647h-1V647h-1V647.5h-1V648h-1V647h-1V647.5h-1V647h-1V647h-1V647h-1V647h-1V647.5h-1V646.5h-1V646.5h-1V647h-1V648h-1V647h-1V647.5h-1V647h-1V647h-1V647h-1V648h-1V647h-1V647.5h-1V647h-1V647h-1V647h-1V647h-1V647h-1V647h-1V647.5h-1V647.5h-1V646.5h-1V647.5h-1V646.5h-1V643.5h-1V648h-1V643h-1V644h-1V645.5h-1V643h-1V644.5h-1V645.5h-1V644.5h-1V644h-1V643.5h-1V645.5h-1V648h-1V645h-1V645.5h-1V645.5h-1V643h-1V643.5h-1V645.5h-1V645.5h-1V644.5h-1V643.5h-1V644h-1V644h-1V644.5h-1V645.5h-1V643.5h-1V643.5h-1V645h-1V642.5h-1V644h-1V644.5h-1V645h-1V643h-1V645.5h-1V643.5h-1V645h-1V646h-1V643h-1V645h-1V646.5h-1V647h-1V648h-1V647h-1V647h-1V647h-1V647.5h-1V647.5h-1V647h-1V648h-1V647h-1V647h-1V647h-1V647h-1V647.5h-1V648h-1V647.5h-1V648h-1V646.5h-1V647.5h-1V647h-1V647h-1V648h-1V648h-1V647.5h-1V648h-1V646.5h-1V647h-1V647.5h-1V647h-1V647h-1V647.5h-1V647.5h-1V646.5h-1V646.5h-1V647h-1V646.5h-1V648h-1V646.5h-1V646.5h-1V647h-1V647h-1V647.5h-1V647h-1V646.5h-1V647h-1V647h-1V647h-1V647.5h-1V647h-1V647h-1V647.5h-1V647.5h-1V646h-1V643h-1V645h-1V646h-1V646h-1V645h-1V643h-1V644.5h-1V644h-1V643.5h-1V644.5h-1V646h-1V644.5h-1V643h-1V645.5h-1V645.5h-1V648h-1V643.5h-1V643.5h-1V644.5h-1V645.5h-1V643.5h-1V645.5h-1V647h-1V647h-1V646.5h-1Z" fill="#6f97e4"/>
<rect x="315" y="649" width="718" height="1" fill="#262626"/>
<rect x="315" y="649" width="718" height="14" fill="#3a3a3a"/>
<rect x="315" y="649" width="718" height="1" fill="#2c2c2c"/>
<g fill="#e0e0e0"><rect x="319" y="655.5" width="5" height="1.5"/><rect x="320.75" y="653.7" width="1.5" height="5"/><rect x="333" y="655.5" width="5" height="1.5"/><path d="M352 652.5 v6 l-3.5 -3 z"/></g>
<rect x="344" y="650" width="1" height="12" fill="#2c2c2c"/>
<rect x="358" y="650" width="1" height="12" fill="#2c2c2c"/>
<rect x="360" y="650" width="152.5" height="13" fill="#4a4a4a"/>
<path d="M508.0 651 v11 M510.0 651 v11 M362.5 651 v11" stroke="#2e2e2e" stroke-width="1"/>
<rect x="512.5" y="650" width="458.5" height="13" fill="#333"/>
<g fill="#e0e0e0"><path d="M975.5 652.5 v6 l3.5 -3 z"/><rect x="989" y="655.5" width="5" height="1.5"/><rect x="990.75" y="653.7" width="1.5" height="5"/><rect x="1008" y="655.5" width="5" height="1.5"/><path d="M1024 652.5 v6 l-3.5 -3 z M1026 652.5 v6 l3.5 -3 z"/></g>
<rect x="315" y="663" width="718" height="26" fill="#3d3d3d"/>
<rect x="315" y="663" width="718" height="1" fill="#2c2c2c"/>
<circle cx="327" cy="676" r="5" fill="#e0101a" stroke="#f0f0f0" stroke-width="1.3"/>
<circle cx="331" cy="680" r="3.3" fill="#f4f4f4" stroke="#222" stroke-width="0.5"/><path d="M330.1 678.4 v3.2 M331.9 678.4 v3.2" stroke="#111" stroke-width="1"/>
<circle cx="348" cy="676" r="5" fill="#e0101a" stroke="#f0f0f0" stroke-width="1.3"/>
<g fill="#e8e8e8"><rect x="364.5" y="671" width="2" height="10"/><path d="M373 671 L366.5 676 L373 681 Z"/><path d="M384.5 671 L391 676 L384.5 681 Z"/><rect x="391" y="671" width="2" height="10"/><rect x="405" y="671" width="10" height="10"/><path d="M425.5 670.5 L435.5 676 L425.5 681.5 Z"/></g>
<path d="M446 671 v10 M448 672 v9" stroke="#e8b000" stroke-width="1.6"/><path d="M449 679 l6 -8 l2 1.5 l-6 8 z" fill="#50a0e0" stroke="#ddd" stroke-width="0.5"/>
<path d="M472 676 L476 672 A5.5 5.5 0 1 0 476 680 Z" fill="#eee"/><path d="M476 673 a3 3 0 0 1 0 6" stroke="#c8b060" stroke-width="1.2" fill="none"/>
<rect x="578" y="671" width="104" height="3" fill="#e8e8e8"/>
<rect x="578" y="672" width="104" height="1" fill="#9a9a9a"/>
<rect x="622.5" y="666.5" width="14" height="12" fill="#f2f2f2" stroke="#888" stroke-width="1"/>
<path d="M627.5 669 v7 M629.5 669 v7 M631.5 669 v7" stroke="#333" stroke-width="1"/>
<path d="M638 678 l3.5 4 h-7 z" fill="#f2f2f2"/>
<rect x="773.5" y="670.5" width="61" height="13" fill="#333333" stroke="#2a2a2a" stroke-width="1"/>
<rect x="838.5" y="670.5" width="61" height="13" fill="#333333" stroke="#2a2a2a" stroke-width="1"/>
<rect x="902.5" y="670.5" width="61" height="13" fill="#333333" stroke="#2a2a2a" stroke-width="1"/>
<rect x="969.5" y="670.5" width="61" height="13" fill="#333333" stroke="#2a2a2a" stroke-width="1"/>
<text x="12.75" y="39" font-size="10" fill="#383838" textLength="24.24" lengthAdjust="spacingAndGlyphs">Файл</text>
<text x="49.90" y="39" font-size="10" fill="#383838" textLength="32.98" lengthAdjust="spacingAndGlyphs">Правка</text>
<text x="96.00" y="39" font-size="10" fill="#383838" textLength="16.74" lengthAdjust="spacingAndGlyphs">Вид</text>
<text x="125.50" y="39" font-size="10" fill="#383838" textLength="24.01" lengthAdjust="spacingAndGlyphs">Insert</text>
<text x="163.30" y="39" font-size="10" fill="#383838" textLength="40.82" lengthAdjust="spacingAndGlyphs">Transport</text>
<text x="216.80" y="39" font-size="10" fill="#383838" textLength="50.59" lengthAdjust="spacingAndGlyphs">Обработка</text>
<text x="280.40" y="39" font-size="10" fill="#383838" textLength="43.61" lengthAdjust="spacingAndGlyphs">Эффекты</text>
<text x="336.60" y="39" font-size="10" fill="#383838" textLength="64.90" lengthAdjust="spacingAndGlyphs">Инструменты</text>
<text x="413.90" y="39" font-size="10" fill="#383838" textLength="56.72" lengthAdjust="spacingAndGlyphs">FX-плагины</text>
<text x="482.80" y="39" font-size="10" fill="#383838" textLength="51.08" lengthAdjust="spacingAndGlyphs">Настройки</text>
<text x="546.00" y="39" font-size="10" fill="#383838" textLength="38.26" lengthAdjust="spacingAndGlyphs">Window</text>
<text x="596.70" y="39" font-size="10" fill="#383838" textLength="21.12" lengthAdjust="spacingAndGlyphs">Help</text>
<text x="58.00" y="111.6" font-size="9.5" fill="#e4e4e4" textLength="94.98" lengthAdjust="spacingAndGlyphs">Рабочее пространство</text>
<text x="58.00" y="137.6" font-size="9.5" fill="#e4e4e4" textLength="31.01" lengthAdjust="spacingAndGlyphs">Импорт</text>
<text x="58.00" y="292.6" font-size="9.5" fill="#e4e4e4" textLength="34.39" lengthAdjust="spacingAndGlyphs">Очистка</text>
<text x="58.00" y="318.6" font-size="9.5" fill="#e4e4e4" textLength="40.99" lengthAdjust="spacingAndGlyphs">Эффекты</text>
<text x="58.00" y="344.6" font-size="9.5" fill="#e4e4e4" textLength="69.02" lengthAdjust="spacingAndGlyphs">Редактирование</text>
<text x="58.00" y="370.6" font-size="9.5" fill="#e4e4e4" textLength="44.58" lengthAdjust="spacingAndGlyphs">Мастеринг</text>
<text x="58.00" y="395.6" font-size="9.5" fill="#e4e4e4" textLength="49.61" lengthAdjust="spacingAndGlyphs">User Entries</text>
<text x="58.00" y="421.6" font-size="9.5" fill="#e4e4e4" textLength="33.80" lengthAdjust="spacingAndGlyphs">Экспорт</text>
<text x="29.50" y="194.5" font-size="8.5" fill="#e8e8e8" textLength="30.46" lengthAdjust="spacingAndGlyphs">Новинка</text>
<text x="98.25" y="194.5" font-size="8.5" fill="#e8e8e8" textLength="30.98" lengthAdjust="spacingAndGlyphs">Открыть</text>
<text x="166.75" y="189.75" font-size="8.5" fill="#e8e8e8" textLength="32.00" lengthAdjust="spacingAndGlyphs">Недавние</text>
<text x="168.75" y="198.5" font-size="8.5" fill="#e8e8e8" textLength="28.02" lengthAdjust="spacingAndGlyphs">файлы...</text>
<text x="32.00" y="263.25" font-size="8.5" fill="#e8e8e8" textLength="25.49" lengthAdjust="spacingAndGlyphs">Запись</text>
<text x="100.50" y="258.5" font-size="8" fill="#e8e8e8" textLength="27.52" lengthAdjust="spacingAndGlyphs">Извлечь</text>
<text x="90.00" y="268.25" font-size="8" fill="#e8e8e8" textLength="48.25" lengthAdjust="spacingAndGlyphs">аудио с диска...</text>
<text x="13.75" y="749.5" font-size="9.6" fill="#e8e8e8" font-weight="bold" textLength="111.01" lengthAdjust="spacingAndGlyphs">Мгновенное действие</text>
<text x="993.00" y="770.5" font-size="10" fill="#dcdcdc" textLength="40.74" lengthAdjust="spacingAndGlyphs">44 100 Hz</text>
<text x="1046.25" y="770.5" font-size="10" fill="#dcdcdc" textLength="26.75" lengthAdjust="spacingAndGlyphs">16 бит</text>
<text x="1088.25" y="770.5" font-size="10" fill="#dcdcdc" textLength="31.74" lengthAdjust="spacingAndGlyphs">Стерео</text>
<text x="1136.25" y="770.5" font-size="10" fill="#dcdcdc" textLength="56.74" lengthAdjust="spacingAndGlyphs">00:04:49,528</text>
<text x="1215.50" y="770.5" font-size="10" fill="#dcdcdc" textLength="50.76" lengthAdjust="spacingAndGlyphs">76 977,9 Мб</text>
<text x="1183.85" y="115" font-size="9.5" fill="#eeeeee" textLength="5.28" lengthAdjust="spacingAndGlyphs">L</text>
<text x="1255.58" y="115" font-size="9.5" fill="#eeeeee" textLength="6.86" lengthAdjust="spacingAndGlyphs">R</text>
<text x="1218.50" y="161.2" font-size="9" fill="#e0e0e0" textLength="5.01" lengthAdjust="spacingAndGlyphs">9</text>
<text x="1218.50" y="208.2" font-size="9" fill="#e0e0e0" textLength="5.01" lengthAdjust="spacingAndGlyphs">5</text>
<text x="1218.50" y="267.2" font-size="9" fill="#e0e0e0" textLength="5.01" lengthAdjust="spacingAndGlyphs">0</text>
<text x="1217.00" y="324.2" font-size="9" fill="#e0e0e0" textLength="8.00" lengthAdjust="spacingAndGlyphs">-5</text>
<text x="1214.50" y="381.2" font-size="9" fill="#e0e0e0" textLength="13.01" lengthAdjust="spacingAndGlyphs">-10</text>
<text x="1214.50" y="437.2" font-size="9" fill="#e0e0e0" textLength="13.01" lengthAdjust="spacingAndGlyphs">-15</text>
<text x="1214.50" y="491.2" font-size="9" fill="#e0e0e0" textLength="13.01" lengthAdjust="spacingAndGlyphs">-20</text>
<text x="1214.50" y="542.7" font-size="9" fill="#e0e0e0" textLength="13.01" lengthAdjust="spacingAndGlyphs">-25</text>
<text x="1214.50" y="588.2" font-size="9" fill="#e0e0e0" textLength="13.01" lengthAdjust="spacingAndGlyphs">-30</text>
<text x="1214.50" y="627.2" font-size="9" fill="#e0e0e0" textLength="13.01" lengthAdjust="spacingAndGlyphs">-35</text>
<text x="1214.50" y="658.2" font-size="9" fill="#e0e0e0" textLength="13.01" lengthAdjust="spacingAndGlyphs">-40</text>
<text x="1214.50" y="696.2" font-size="9" fill="#e0e0e0" textLength="13.01" lengthAdjust="spacingAndGlyphs">-50</text>
<text x="1214.50" y="716.2" font-size="9" fill="#e0e0e0" textLength="13.01" lengthAdjust="spacingAndGlyphs">-70</text>
<text x="1194.50" y="726" font-size="9" fill="#d0d0d0" textLength="5.01" lengthAdjust="spacingAndGlyphs">L</text>
<text x="1240.75" y="726" font-size="9" fill="#d0d0d0" textLength="6.50" lengthAdjust="spacingAndGlyphs">R</text>
<text x="297.70" y="161" font-size="10.5" fill="#9da3a9" textLength="279.67" lengthAdjust="spacingAndGlyphs">Сергей Завьялов - А мне с тобой остаться хоть на миг.m4a</text>
<text x="285.73" y="270" font-size="10" fill="#eeeeee" textLength="5.56" lengthAdjust="spacingAndGlyphs">L</text>
<text x="306.00" y="284" font-size="7.5" fill="#d0d0d0" textLength="7.84" lengthAdjust="spacingAndGlyphs">-∞</text>
<text x="284.90" y="317" font-size="10" fill="#eeeeee" textLength="7.22" lengthAdjust="spacingAndGlyphs">R</text>
<text x="306.00" y="331" font-size="7.5" fill="#d0d0d0" textLength="7.84" lengthAdjust="spacingAndGlyphs">-∞</text>
<text x="456.70" y="377.7" font-size="9.5" fill="#e0e0e0" textLength="60.28" lengthAdjust="spacingAndGlyphs">Частота: 0,00</text>
<text x="739.40" y="382.4" font-size="10.5" fill="#e0e0e0" textLength="56.31" lengthAdjust="spacingAndGlyphs">00:00:00,000</text>
<text x="868.80" y="382.4" font-size="10.5" fill="#e0e0e0" textLength="56.21" lengthAdjust="spacingAndGlyphs">00:04:03,671</text>
<text x="960.70" y="382.4" font-size="10.5" fill="#e0e0e0" textLength="30.99" lengthAdjust="spacingAndGlyphs">1:4 096</text>
<text x="333.70" y="459" font-size="10.5" fill="#9da3a9" textLength="174.58" lengthAdjust="spacingAndGlyphs">Сергей Завьялов - В Белой Фате.m4a</text>
<text x="321.73" y="568" font-size="10" fill="#eeeeee" textLength="5.56" lengthAdjust="spacingAndGlyphs">L</text>
<text x="342.00" y="582" font-size="7.5" fill="#d0d0d0" textLength="7.84" lengthAdjust="spacingAndGlyphs">-∞</text>
<text x="320.90" y="615" font-size="10" fill="#eeeeee" textLength="7.22" lengthAdjust="spacingAndGlyphs">R</text>
<text x="342.00" y="629" font-size="7.5" fill="#d0d0d0" textLength="7.84" lengthAdjust="spacingAndGlyphs">-∞</text>
<text x="492.70" y="675.7" font-size="9.5" fill="#e0e0e0" textLength="60.28" lengthAdjust="spacingAndGlyphs">Частота: 0,00</text>
<text x="775.40" y="680.4" font-size="10.5" fill="#e0e0e0" textLength="56.31" lengthAdjust="spacingAndGlyphs">00:00:00,000</text>
<text x="904.80" y="680.4" font-size="10.5" fill="#e0e0e0" textLength="56.21" lengthAdjust="spacingAndGlyphs">00:04:49,528</text>
<text x="996.70" y="680.4" font-size="10.5" fill="#e0e0e0" textLength="30.99" lengthAdjust="spacingAndGlyphs">1:4 096</text>
</svg>
</body></html>
